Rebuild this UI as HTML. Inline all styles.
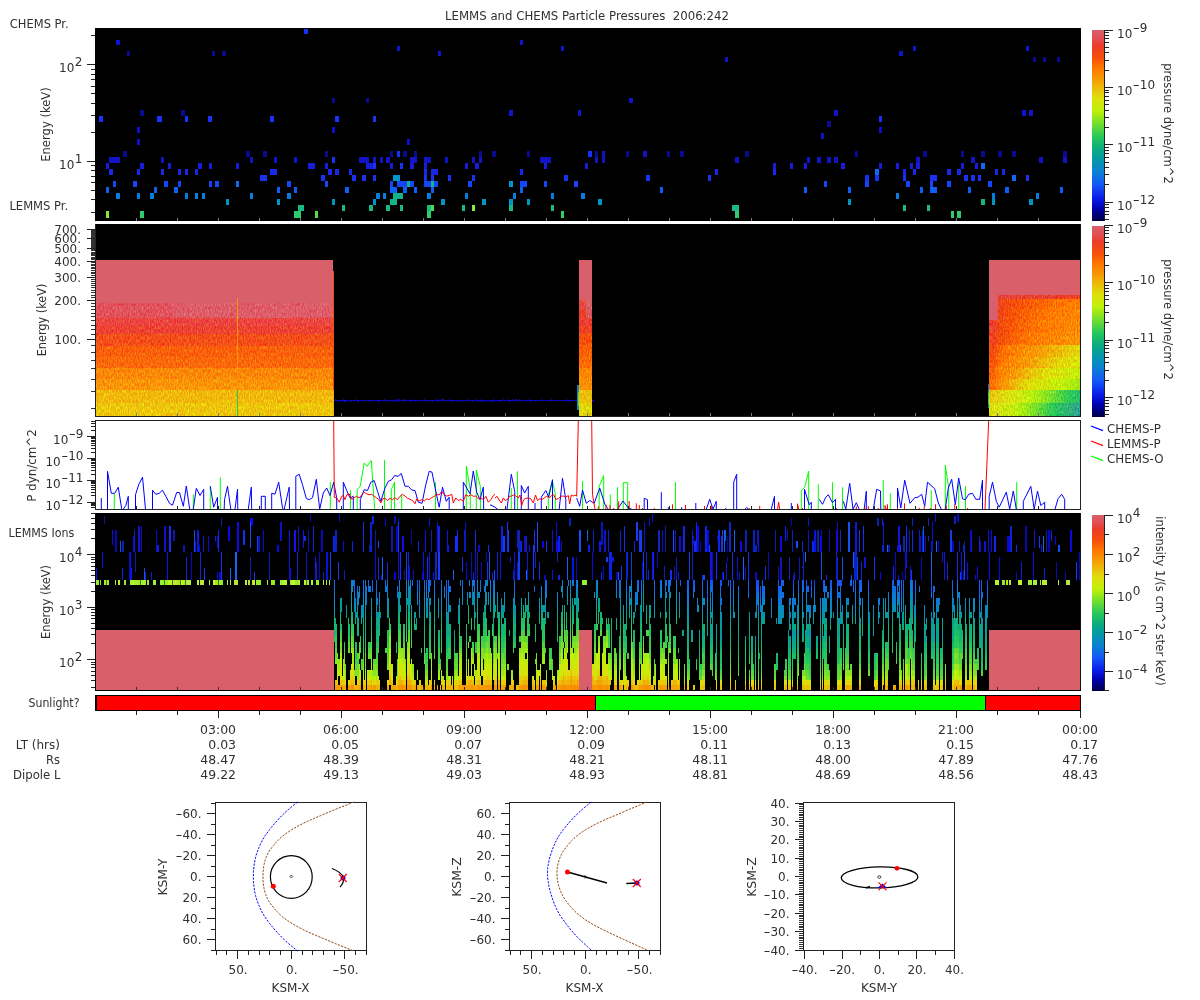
<!DOCTYPE html>
<html><head><meta charset="utf-8"><title>LEMMS and CHEMS Particle Pressures 2006:242</title>
<style>
html,body{margin:0;padding:0;background:#fff;}
svg{display:block;will-change:transform;font-family:"DejaVu Sans","Liberation Sans",sans-serif;fill:#303030;}
svg rect{shape-rendering:crispEdges;}
</style></head><body>
<svg width="1200" height="1000" viewBox="0 0 1200 1000">
<defs><linearGradient id="cb" x1="0" y1="1" x2="0" y2="0">
<stop offset="0" stop-color="#000046"/>
<stop offset="0.0625" stop-color="#0000aa"/>
<stop offset="0.12" stop-color="#0a1eeb"/>
<stop offset="0.193" stop-color="#145af5"/>
<stop offset="0.26" stop-color="#0a82d2"/>
<stop offset="0.318" stop-color="#0596aa"/>
<stop offset="0.375" stop-color="#0aaa82"/>
<stop offset="0.443" stop-color="#28c85a"/>
<stop offset="0.516" stop-color="#78e128"/>
<stop offset="0.578" stop-color="#bef00a"/>
<stop offset="0.64" stop-color="#dce10a"/>
<stop offset="0.677" stop-color="#e8c80a"/>
<stop offset="0.75" stop-color="#f89605"/>
<stop offset="0.8" stop-color="#ff7800"/>
<stop offset="0.854" stop-color="#f55008"/>
<stop offset="0.917" stop-color="#ec3c28"/>
<stop offset="0.958" stop-color="#e05055"/>
<stop offset="1" stop-color="#d95f6a"/>
</linearGradient></defs>
<text x="587" y="20" text-anchor="middle" font-size="12" textLength="283.9" lengthAdjust="spacingAndGlyphs">LEMMS and CHEMS Particle Pressures&#160;&#160;2006:242</text>
<rect x="95" y="28" width="986" height="193" fill="#000"/>
<rect x="91" y="212" width="4" height="1" fill="#222"/>
<rect x="91" y="199" width="4" height="1" fill="#222"/>
<rect x="91" y="190" width="4" height="1" fill="#222"/>
<rect x="91" y="182" width="4" height="1" fill="#222"/>
<rect x="91" y="176" width="4" height="1" fill="#222"/>
<rect x="91" y="170" width="4" height="1" fill="#222"/>
<rect x="91" y="165" width="4" height="1" fill="#222"/>
<rect x="87" y="161" width="8" height="1" fill="#222"/>
<text x="74.3652" y="169" text-anchor="end" font-size="12">10</text>
<text x="74.8652" y="163" text-anchor="start" font-size="12">1</text>
<rect x="91" y="132" width="4" height="1" fill="#222"/>
<rect x="91" y="115" width="4" height="1" fill="#222"/>
<rect x="91" y="103" width="4" height="1" fill="#222"/>
<rect x="91" y="93" width="4" height="1" fill="#222"/>
<rect x="91" y="86" width="4" height="1" fill="#222"/>
<rect x="91" y="79" width="4" height="1" fill="#222"/>
<rect x="91" y="74" width="4" height="1" fill="#222"/>
<rect x="91" y="69" width="4" height="1" fill="#222"/>
<rect x="87" y="64" width="8" height="1" fill="#222"/>
<text x="74.3652" y="72" text-anchor="end" font-size="12">10</text>
<text x="74.8652" y="66" text-anchor="start" font-size="12">2</text>
<rect x="91" y="35" width="4" height="1" fill="#222"/>
<text x="9.8" y="28" text-anchor="start" font-size="12" textLength="58.9" lengthAdjust="spacingAndGlyphs">CHEMS Pr.</text>
<text x="9.4" y="210" text-anchor="start" font-size="12" textLength="58.8" lengthAdjust="spacingAndGlyphs">LEMMS Pr.</text>
<text transform="translate(49.8,124.5) rotate(-90)" text-anchor="middle" font-size="12" textLength="74.6" lengthAdjust="spacingAndGlyphs">Energy (keV)</text>
<path fill="#0f0fc8" shape-rendering="crispEdges" d="M137 127h3v6h-3zM137 139h3v6h-3zM407 139h3v6h-3zM332 127h3v6h-3zM821 133h3v6h-3zM879 127h3v6h-3z"/>
<path fill="#0a0a91" shape-rendering="crispEdges" d="M123 151h4v6h-4zM246 151h4v6h-4zM263 151h4v6h-4zM325 151h3v6h-3zM390 151h3v6h-3zM403 151h4v6h-4zM414 151h3v6h-3zM479 151h3v6h-3zM492 151h4v6h-4zM527 151h3v6h-3zM595 151h3v6h-3zM626 151h3v6h-3zM667 151h3v6h-3zM680 151h4v6h-4zM745 151h4v6h-4zM827 121h4v6h-4zM855 151h3v6h-3zM923 151h4v6h-4zM961 151h3v6h-3zM981 151h4v6h-4zM998 151h4v6h-4zM1012 151h4v6h-4zM1063 151h4v6h-4zM127 51h3v5h-3zM212 51h3v5h-3zM222 51h4v5h-4zM332 98h3v5h-3zM366 98h3v5h-3zM140 110h4v5.5h-4zM181 110h4v5.5h-4zM1033 57h3v5h-3zM1043 57h3v5h-3zM1057 57h3v5h-3z"/>
<path fill="#1214c3" shape-rendering="crispEdges" d="M109 157h11v6h-11zM161 157h3v6h-3zM250 157h3v6h-3zM274 157h3v6h-3zM294 157h3v6h-3zM359 157h10v6h-10zM373 157h3v6h-3zM380 157h3v6h-3zM386 157h4v6h-4zM410 157h7v6h-7zM424 157h7v6h-7zM445 157h3v6h-3zM472 157h3v6h-3zM479 157h3v6h-3zM540 157h11v6h-11zM595 157h3v6h-3zM602 157h3v6h-3zM735 157h4v6h-4zM807 157h3v6h-3zM817 157h4v6h-4zM827 157h4v6h-4zM834 157h4v6h-4zM916 157h4v6h-4zM971 157h4v6h-4zM1039 157h4v6h-4zM1063 157h4v6h-4z"/>
<path fill="#161cd7" shape-rendering="crispEdges" d="M106 163h3v6h-3zM140 163h4v6h-4zM168 163h3v6h-3zM198 163h4v6h-4zM209 163h3v6h-3zM236 163h3v6h-3zM308 163h7v6h-7zM325 163h3v6h-3zM366 163h7v6h-7zM390 163h3v6h-3zM410 163h4v6h-4zM424 163h3v6h-3zM465 163h3v6h-3zM475 163h4v6h-4zM544 163h3v6h-3zM585 163h3v6h-3zM773 163h3v6h-3zM790 163h3v6h-3zM804 163h3v6h-3zM841 163h4v6h-4zM879 163h3v6h-3zM896 163h3v6h-3zM910 163h3v6h-3zM916 163h4v6h-4zM961 163h3v6h-3zM975 163h3v6h-3z"/>
<path fill="#1928e8" shape-rendering="crispEdges" d="M109 169h4v6h-4zM137 169h3v6h-3zM161 169h3v6h-3zM178 169h3v6h-3zM185 169h3v6h-3zM195 169h3v6h-3zM270 169h7v6h-7zM328 169h4v6h-4zM335 169h4v6h-4zM349 169h3v6h-3zM424 169h3v6h-3zM431 169h7v6h-7zM520 169h3v6h-3zM715 169h3v6h-3zM773 169h3v6h-3zM903 169h3v6h-3zM913 169h3v6h-3zM947 169h4v6h-4zM957 169h4v6h-4zM995 169h3v6h-3zM1002 169h3v6h-3z"/>
<path fill="#1446f8" shape-rendering="crispEdges" d="M113 181h3v6h-3zM133 181h4v6h-4zM164 181h4v6h-4zM178 181h3v6h-3zM209 181h3v6h-3zM215 181h4v6h-4zM287 181h4v6h-4zM325 181h3v6h-3zM390 181h3v6h-3zM397 181h10v6h-10zM410 181h4v6h-4zM424 181h7v6h-7zM434 181h4v6h-4zM468 181h4v6h-4zM520 181h7v6h-7zM544 181h3v6h-3zM574 181h4v6h-4zM824 181h3v6h-3zM865 181h4v6h-4zM906 181h4v6h-4zM930 181h3v6h-3zM947 181h4v6h-4zM988 181h4v6h-4z"/>
<path fill="#0f69f5" shape-rendering="crispEdges" d="M236 181h3v6h-3zM875 169h4v6h-4zM981 163h4v6h-4zM1012 175h4v6h-4z"/>
<path fill="#0f5ff5" shape-rendering="crispEdges" d="M106 187h3v6h-3zM154 187h3v6h-3zM174 187h4v6h-4zM277 187h3v6h-3zM294 187h3v6h-3zM345 187h4v6h-4zM390 187h7v6h-7zM403 187h4v6h-4zM414 187h3v6h-3zM431 187h3v6h-3zM520 187h3v6h-3zM660 187h3v6h-3zM804 187h3v6h-3zM848 187h3v6h-3zM920 187h3v6h-3zM930 187h7v6h-7zM968 187h3v6h-3zM1005 187h4v6h-4zM1060 187h3v6h-3z"/>
<path fill="#057de1" shape-rendering="crispEdges" d="M116 193h4v6h-4zM137 193h3v6h-3zM150 193h4v6h-4zM185 193h3v6h-3zM195 193h3v6h-3zM202 193h3v6h-3zM250 193h3v6h-3zM287 193h4v6h-4zM376 193h4v6h-4zM383 193h3v6h-3zM427 193h4v6h-4zM465 193h3v6h-3zM513 193h3v6h-3zM551 193h3v6h-3zM581 193h4v6h-4zM896 193h3v6h-3zM992 193h3v6h-3zM1036 193h3v6h-3z"/>
<path fill="#0096c3" shape-rendering="crispEdges" d="M226 199h3v6h-3zM277 199h3v6h-3zM332 199h3v6h-3zM373 199h3v6h-3zM441 199h4v6h-4zM482 199h4v6h-4zM509 199h4v6h-4zM527 199h3v6h-3zM598 199h4v6h-4zM848 199h3v6h-3zM992 199h3v6h-3zM1029 199h4v6h-4z"/>
<path fill="#82eb32" shape-rendering="crispEdges" d="M106 211h3v7h-3zM472 205h3v6h-3z"/>
<path fill="#2dcd6e" shape-rendering="crispEdges" d="M140 211h4v7h-4zM294 211h7v7h-7zM427 211h4v7h-4zM561 211h3v7h-3zM735 211h4v7h-4zM951 211h3v7h-3zM957 211h4v7h-4z"/>
<path fill="#50de4b" shape-rendering="crispEdges" d="M315 211h3v7h-3zM431 205h3v6h-3z"/>
<path fill="#19b987" shape-rendering="crispEdges" d="M298 205h6v6h-6zM342 205h3v6h-3zM369 205h4v6h-4zM386 205h4v6h-4zM400 205h3v6h-3zM427 205h4v6h-4zM462 205h3v6h-3zM509 205h4v6h-4zM551 205h3v6h-3zM732 205h7v6h-7zM903 205h3v6h-3zM927 205h3v6h-3z"/>
<path fill="#14b487" shape-rendering="crispEdges" d="M390 199h7v6h-7zM393 193h10v6h-10zM407 181h3v6h-3zM431 181h3v6h-3zM981 199h4v6h-4z"/>
<path fill="#1932f0" shape-rendering="crispEdges" d="M260 175h7v6h-7zM321 175h4v6h-4zM352 175h4v6h-4zM362 175h4v6h-4zM373 175h3v6h-3zM424 175h3v6h-3zM431 175h3v6h-3zM448 175h3v6h-3zM472 175h3v6h-3zM564 175h4v6h-4zM646 175h4v6h-4zM708 175h3v6h-3zM865 175h4v6h-4zM875 175h4v6h-4zM903 175h3v6h-3zM930 175h7v6h-7zM964 175h4v6h-4zM971 175h4v6h-4zM978 175h3v6h-3zM1026 175h3v6h-3z"/>
<path fill="#0096cd" shape-rendering="crispEdges" d="M393 175h7v6h-7zM509 181h4v6h-4z"/>
<path fill="#1932f5" shape-rendering="crispEdges" d="M373 163h3v6h-3zM400 163h3v6h-3zM332 157h3v6h-3zM397 151h3v6h-3zM588 151h4v6h-4zM304 29h4v4.5h-4zM99 116h4v5.5h-4zM157 116h5v5.5h-5zM185 116h3v5.5h-3zM208 116h4v5.5h-4zM270 116h4v5.5h-4zM335 116h4v5.5h-4zM373 116h3v5.5h-3zM879 116h3v5.5h-3z"/>
<path fill="#1212be" shape-rendering="crispEdges" d="M602 151h3v6h-3zM643 151h2v6h-2zM645 151h2v6h-2z"/>
<path fill="#0f14cd" shape-rendering="crispEdges" d="M116 40h4v5h-4zM397 46h3v4.5h-3zM438 51h3v5h-3zM520 40h3v5h-3zM561 46h3v4.5h-3zM725 57h3v5h-3zM629 98h4v5h-4zM509 110h4v5.5h-4zM578 110h3v5.5h-3zM899 51h4v5h-4zM913 46h3v4.5h-3zM1026 46h3v4.5h-3zM834 110h4v5.5h-4zM1022 110h4v5.5h-4zM1029 110h4v5.5h-4z"/>
<rect x="136" y="218" width="1" height="3" fill="#7a7a7a"/>
<rect x="177" y="218" width="1" height="3" fill="#7a7a7a"/>
<rect x="218" y="218" width="1" height="3" fill="#7a7a7a"/>
<rect x="259" y="218" width="1" height="3" fill="#7a7a7a"/>
<rect x="300" y="218" width="1" height="3" fill="#7a7a7a"/>
<rect x="341" y="218" width="1" height="3" fill="#7a7a7a"/>
<rect x="382" y="218" width="1" height="3" fill="#7a7a7a"/>
<rect x="423" y="218" width="1" height="3" fill="#7a7a7a"/>
<rect x="464" y="218" width="1" height="3" fill="#7a7a7a"/>
<rect x="505" y="218" width="1" height="3" fill="#7a7a7a"/>
<rect x="546" y="218" width="1" height="3" fill="#7a7a7a"/>
<rect x="587" y="218" width="1" height="3" fill="#7a7a7a"/>
<rect x="628" y="218" width="1" height="3" fill="#7a7a7a"/>
<rect x="669" y="218" width="1" height="3" fill="#7a7a7a"/>
<rect x="710" y="218" width="1" height="3" fill="#7a7a7a"/>
<rect x="751" y="218" width="1" height="3" fill="#7a7a7a"/>
<rect x="792" y="218" width="1" height="3" fill="#7a7a7a"/>
<rect x="833" y="218" width="1" height="3" fill="#7a7a7a"/>
<rect x="874" y="218" width="1" height="3" fill="#7a7a7a"/>
<rect x="915" y="218" width="1" height="3" fill="#7a7a7a"/>
<rect x="956" y="218" width="1" height="3" fill="#7a7a7a"/>
<rect x="997" y="218" width="1" height="3" fill="#7a7a7a"/>
<rect x="1038" y="218" width="1" height="3" fill="#7a7a7a"/>
<rect x="1092" y="30" width="12" height="191" fill="url(#cb)"/>
<rect x="1104" y="30" width="1" height="191" fill="#222"/>
<rect x="1104" y="30" width="9" height="1" fill="#222"/>
<text x="1117" y="38" text-anchor="start" font-size="12">10</text>
<text x="1132.77" y="32" text-anchor="start" font-size="12"><tspan textLength="7" lengthAdjust="spacingAndGlyphs">-</tspan>9</text>
<rect x="1104" y="87" width="9" height="1" fill="#222"/>
<text x="1117" y="95" text-anchor="start" font-size="12">10</text>
<text x="1132.77" y="89" text-anchor="start" font-size="12"><tspan textLength="7" lengthAdjust="spacingAndGlyphs">-</tspan>10</text>
<rect x="1104" y="144" width="9" height="1" fill="#222"/>
<text x="1117" y="152" text-anchor="start" font-size="12">10</text>
<text x="1132.77" y="146" text-anchor="start" font-size="12"><tspan textLength="7" lengthAdjust="spacingAndGlyphs">-</tspan>11</text>
<rect x="1104" y="202" width="9" height="1" fill="#222"/>
<text x="1117" y="210" text-anchor="start" font-size="12">10</text>
<text x="1132.77" y="204" text-anchor="start" font-size="12"><tspan textLength="7" lengthAdjust="spacingAndGlyphs">-</tspan>12</text>
<rect x="1104" y="70" width="5" height="1" fill="#222"/>
<rect x="1104" y="60" width="5" height="1" fill="#222"/>
<rect x="1104" y="52" width="5" height="1" fill="#222"/>
<rect x="1104" y="47" width="5" height="1" fill="#222"/>
<rect x="1104" y="42" width="5" height="1" fill="#222"/>
<rect x="1104" y="38" width="5" height="1" fill="#222"/>
<rect x="1104" y="35" width="5" height="1" fill="#222"/>
<rect x="1104" y="32" width="5" height="1" fill="#222"/>
<rect x="1104" y="127" width="5" height="1" fill="#222"/>
<rect x="1104" y="117" width="5" height="1" fill="#222"/>
<rect x="1104" y="110" width="5" height="1" fill="#222"/>
<rect x="1104" y="104" width="5" height="1" fill="#222"/>
<rect x="1104" y="100" width="5" height="1" fill="#222"/>
<rect x="1104" y="96" width="5" height="1" fill="#222"/>
<rect x="1104" y="92" width="5" height="1" fill="#222"/>
<rect x="1104" y="90" width="5" height="1" fill="#222"/>
<rect x="1104" y="184" width="5" height="1" fill="#222"/>
<rect x="1104" y="174" width="5" height="1" fill="#222"/>
<rect x="1104" y="167" width="5" height="1" fill="#222"/>
<rect x="1104" y="162" width="5" height="1" fill="#222"/>
<rect x="1104" y="157" width="5" height="1" fill="#222"/>
<rect x="1104" y="153" width="5" height="1" fill="#222"/>
<rect x="1104" y="150" width="5" height="1" fill="#222"/>
<rect x="1104" y="147" width="5" height="1" fill="#222"/>
<rect x="1104" y="219" width="5" height="1" fill="#222"/>
<rect x="1104" y="214" width="5" height="1" fill="#222"/>
<rect x="1104" y="211" width="5" height="1" fill="#222"/>
<rect x="1104" y="207" width="5" height="1" fill="#222"/>
<rect x="1104" y="204" width="5" height="1" fill="#222"/>
<text transform="translate(1163.5,123.5) rotate(90)" text-anchor="middle" font-size="12" textLength="120.5" lengthAdjust="spacingAndGlyphs">pressure dyne/cm^2</text>
<rect x="95" y="224" width="986" height="193" fill="#000"/>
<rect x="96" y="260" width="237" height="156" fill="#d95f6a"/>
<filter id="nzP" filterUnits="userSpaceOnUse" x="96" y="303" width="237" height="15" color-interpolation-filters="sRGB"><feTurbulence type="fractalNoise" baseFrequency="0.85 0.3" numOctaves="2" seed="9"/><feColorMatrix type="matrix" values="0 0 0 0 -0  0 0.44 0 0 -0.11  0 0.44 0 0 -0.11  0 0 0 0 1" result="n"/><feComposite in="SourceGraphic" in2="n" operator="arithmetic" k1="0" k2="1" k3="1" k4="0" result="s"/><feComposite in="s" in2="SourceGraphic" operator="in"/></filter>
<g filter="url(#nzP)">
<rect x="96" y="303" width="76" height="15" fill="#e23640"/>
<rect x="172" y="303" width="161" height="15" fill="#de404b"/>
</g>
<filter id="nzL" filterUnits="userSpaceOnUse" x="96" y="318" width="237" height="98" color-interpolation-filters="sRGB"><feTurbulence type="fractalNoise" baseFrequency="0.85 0.3" numOctaves="2" seed="4"/><feColorMatrix type="matrix" values="0 0 0 0 -0  0 0.54 0 0 -0.135  0 0 0 0 -0  0 0 0 0 1" result="n"/><feComposite in="SourceGraphic" in2="n" operator="arithmetic" k1="0" k2="1" k3="1" k4="0" result="s"/><feComposite in="s" in2="SourceGraphic" operator="in"/></filter>
<g filter="url(#nzL)">
<rect x="96" y="318" width="237" height="8" fill="#ec2240"/>
<rect x="96" y="326" width="237" height="8" fill="#ed2032"/>
<rect x="96" y="334" width="237" height="12" fill="#f32c19"/>
<rect x="96" y="346" width="237" height="11" fill="#f93e0c"/>
<rect x="96" y="357" width="237" height="11" fill="#fa460a"/>
<rect x="96" y="368" width="237" height="11" fill="#fa6508"/>
<rect x="96" y="379" width="237" height="11" fill="#fa7208"/>
<rect x="96" y="390" width="237" height="13" fill="#f1960c"/>
<rect x="96" y="403" width="237" height="13" fill="#eda40c"/>
</g>
<rect x="237" y="298" width="1" height="92" fill="#f89405"/>
<rect x="237" y="390" width="1" height="26" fill="#28c85a"/>
<rect x="333" y="271" width="1" height="145" fill="#f24a12"/>
<rect x="333" y="390" width="1" height="26" fill="#f0af08"/>
<path fill="#0a0ae1" shape-rendering="crispEdges" d="M334 400h1v1h-1zM336 400h1v1h-1zM337 400h1v1h-1zM338 400h1v1h-1zM341 400h1v1h-1zM346 400h1v1h-1zM350 400h1v1h-1zM353 400h1v1h-1zM354 400h1v1h-1zM355 400h1v1h-1zM365 400h1v1h-1zM372 400h1v1h-1zM375 400h1v1h-1zM376 400h1v1h-1zM377 400h1v1h-1zM381 400h1v1h-1zM388 400h1v1h-1zM391 400h1v1h-1zM401 400h1v1h-1zM408 400h1v1h-1zM411 400h1v1h-1zM412 400h1v1h-1zM414 400h1v1h-1zM430 400h1v1h-1zM434 400h1v1h-1zM439 400h1v1h-1zM444 400h1v1h-1zM445 400h1v1h-1zM447 400h1v1h-1zM450 400h1v1h-1zM452 400h1v1h-1zM453 400h1v1h-1zM454 400h1v1h-1zM456 400h1v1h-1zM457 400h1v1h-1zM465 400h1v1h-1zM466 400h1v1h-1zM476 400h1v1h-1zM495 400h1v1h-1zM502 400h1v1h-1zM504 400h1v1h-1zM506 400h1v1h-1zM508 400h1v1h-1zM511 400h1v1h-1zM518 400h1v1h-1zM521 400h1v1h-1zM528 400h1v1h-1zM532 400h1v1h-1zM534 400h1v1h-1zM535 400h1v1h-1zM537 400h1v1h-1zM538 400h1v1h-1zM539 400h1v1h-1zM543 400h1v1h-1zM548 400h1v1h-1zM557 400h1v1h-1zM561 400h1v1h-1zM562 400h1v1h-1zM563 400h1v1h-1zM569 400h1v1h-1zM570 400h1v1h-1zM571 400h1v1h-1zM572 400h1v1h-1zM574 400h1v1h-1zM576 400h1v1h-1zM586 400h1v1h-1zM589 400h1v1h-1zM591 400h1v1h-1zM593 400h1v1h-1z"/>
<path fill="#0a0abe" shape-rendering="crispEdges" d="M335 399h1v2h-1zM343 399h1v2h-1zM357 400h1v2h-1zM368 400h1v2h-1zM378 400h1v2h-1zM395 399h1v2h-1zM398 400h1v2h-1zM403 400h1v2h-1zM424 399h1v2h-1zM432 400h1v2h-1zM438 400h1v2h-1zM441 399h1v2h-1zM451 400h1v2h-1zM458 400h1v2h-1zM463 400h1v2h-1zM468 399h1v2h-1zM472 400h1v2h-1zM475 399h1v2h-1zM480 400h1v2h-1zM482 400h1v2h-1zM492 400h1v2h-1zM510 400h1v2h-1zM516 399h1v2h-1zM519 399h1v2h-1zM551 399h1v2h-1zM568 400h1v2h-1zM577 400h1v2h-1zM578 399h1v2h-1zM583 400h1v2h-1zM585 400h1v2h-1zM590 400h1v2h-1zM592 400h1v2h-1z"/>
<path fill="#0a0a96" shape-rendering="crispEdges" d="M339 400h1v2h-1zM356 399h1v2h-1zM363 400h1v2h-1zM371 400h1v2h-1zM379 400h1v2h-1zM385 400h1v2h-1zM392 400h1v2h-1zM394 400h1v2h-1zM396 400h1v2h-1zM397 399h1v2h-1zM402 399h1v2h-1zM413 399h1v2h-1zM418 400h1v2h-1zM429 400h1v2h-1zM437 400h1v2h-1zM442 399h1v2h-1zM461 400h1v2h-1zM473 400h1v2h-1zM481 399h1v2h-1zM503 399h1v2h-1zM507 399h1v2h-1zM512 399h1v2h-1zM514 399h1v2h-1zM527 400h1v2h-1zM550 400h1v2h-1zM565 400h1v2h-1zM581 399h1v2h-1zM582 399h1v2h-1zM588 400h1v2h-1z"/>
<path fill="#0a0aaa" shape-rendering="crispEdges" d="M340 400h1v1h-1zM347 400h1v1h-1zM348 400h1v1h-1zM359 400h1v1h-1zM360 400h1v1h-1zM362 400h1v1h-1zM364 400h1v1h-1zM366 400h1v1h-1zM367 400h1v1h-1zM373 400h1v1h-1zM380 400h1v1h-1zM382 400h1v1h-1zM386 400h1v1h-1zM390 400h1v1h-1zM400 400h1v1h-1zM405 400h1v1h-1zM406 400h1v1h-1zM417 400h1v1h-1zM420 400h1v1h-1zM422 400h1v1h-1zM423 400h1v1h-1zM426 400h1v1h-1zM427 400h1v1h-1zM431 400h1v1h-1zM433 400h1v1h-1zM435 400h1v1h-1zM440 400h1v1h-1zM446 400h1v1h-1zM455 400h1v1h-1zM459 400h1v1h-1zM460 400h1v1h-1zM464 400h1v1h-1zM467 400h1v1h-1zM470 400h1v1h-1zM471 400h1v1h-1zM479 400h1v1h-1zM485 400h1v1h-1zM486 400h1v1h-1zM488 400h1v1h-1zM490 400h1v1h-1zM497 400h1v1h-1zM501 400h1v1h-1zM520 400h1v1h-1zM523 400h1v1h-1zM524 400h1v1h-1zM525 400h1v1h-1zM533 400h1v1h-1zM536 400h1v1h-1zM540 400h1v1h-1zM544 400h1v1h-1zM545 400h1v1h-1zM546 400h1v1h-1zM549 400h1v1h-1zM556 400h1v1h-1zM559 400h1v1h-1zM560 400h1v1h-1zM567 400h1v1h-1zM573 400h1v1h-1zM575 400h1v1h-1zM579 400h1v1h-1zM580 400h1v1h-1z"/>
<path fill="#0a0ad7" shape-rendering="crispEdges" d="M342 400h1v2h-1zM344 400h1v2h-1zM345 400h1v2h-1zM351 400h1v2h-1zM358 400h1v2h-1zM384 399h1v2h-1zM399 399h1v2h-1zM404 399h1v2h-1zM410 400h1v2h-1zM415 400h1v2h-1zM425 400h1v2h-1zM436 399h1v2h-1zM443 399h1v2h-1zM449 399h1v2h-1zM478 400h1v2h-1zM484 400h1v2h-1zM489 400h1v2h-1zM491 400h1v2h-1zM493 399h1v2h-1zM499 400h1v2h-1zM500 400h1v2h-1zM509 400h1v2h-1zM513 400h1v2h-1zM529 399h1v2h-1zM530 400h1v2h-1zM541 399h1v2h-1zM566 399h1v2h-1z"/>
<path fill="#0a0ac8" shape-rendering="crispEdges" d="M349 400h1v1h-1zM352 400h1v1h-1zM361 400h1v1h-1zM369 400h1v1h-1zM370 400h1v1h-1zM374 400h1v1h-1zM383 400h1v1h-1zM387 400h1v1h-1zM389 400h1v1h-1zM393 400h1v1h-1zM407 400h1v1h-1zM409 400h1v1h-1zM416 400h1v1h-1zM419 400h1v1h-1zM421 400h1v1h-1zM428 400h1v1h-1zM448 400h1v1h-1zM462 400h1v1h-1zM469 400h1v1h-1zM474 400h1v1h-1zM477 400h1v1h-1zM483 400h1v1h-1zM487 400h1v1h-1zM494 400h1v1h-1zM496 400h1v1h-1zM498 400h1v1h-1zM505 400h1v1h-1zM515 400h1v1h-1zM517 400h1v1h-1zM522 400h1v1h-1zM526 400h1v1h-1zM531 400h1v1h-1zM542 400h1v1h-1zM547 400h1v1h-1zM552 400h1v1h-1zM553 400h1v1h-1zM554 400h1v1h-1zM555 400h1v1h-1zM558 400h1v1h-1zM564 400h1v1h-1zM584 400h1v1h-1zM587 400h1v1h-1z"/>
<rect x="579" y="260" width="13" height="156" fill="#d95f6a"/>
<filter id="nzM" filterUnits="userSpaceOnUse" x="579" y="300" width="13" height="116" color-interpolation-filters="sRGB"><feTurbulence type="fractalNoise" baseFrequency="0.85 0.3" numOctaves="2" seed="12"/><feColorMatrix type="matrix" values="0 0 0 0 -0  0 0.54 0 0 -0.135  0 0 0 0 -0  0 0 0 0 1" result="n"/><feComposite in="SourceGraphic" in2="n" operator="arithmetic" k1="0" k2="1" k3="1" k4="0" result="s"/><feComposite in="s" in2="SourceGraphic" operator="in"/></filter>
<g filter="url(#nzM)">
<rect x="579" y="300" width="7" height="9" fill="#e52644"/>
<rect x="586" y="300" width="6" height="9" fill="#d93d6a"/>
<rect x="579" y="309" width="7" height="9" fill="#ec1b2a"/>
<rect x="586" y="309" width="6" height="9" fill="#dc3660"/>
<rect x="579" y="318" width="13" height="8" fill="#ea1e31"/>
<rect x="579" y="326" width="13" height="8" fill="#ef201f"/>
<rect x="579" y="334" width="13" height="11" fill="#f42c0b"/>
<rect x="579" y="345" width="13" height="12" fill="#f93c05"/>
<rect x="579" y="357" width="13" height="11" fill="#fb4703"/>
<rect x="579" y="368" width="13" height="11" fill="#fc6402"/>
<rect x="579" y="379" width="13" height="11" fill="#fa6e04"/>
<rect x="579" y="390" width="13" height="13" fill="#eb9e09"/>
<rect x="579" y="403" width="13" height="13" fill="#e1b50a"/>
</g>
<rect x="577" y="385" width="2" height="25" fill="#088ac2"/>
<rect x="578" y="392" width="1" height="14" fill="#60d937"/>
<rect x="989" y="260" width="91" height="156" fill="#d95f6a"/>
<filter id="nzR" filterUnits="userSpaceOnUse" x="989" y="295" width="91" height="95" color-interpolation-filters="sRGB"><feTurbulence type="fractalNoise" baseFrequency="0.85 0.3" numOctaves="2" seed="7"/><feColorMatrix type="matrix" values="0 0 0 0 -0  0 0.54 0 0 -0.135  0 0 0 0 -0  0 0 0 0 1" result="n"/><feComposite in="SourceGraphic" in2="n" operator="arithmetic" k1="0" k2="1" k3="1" k4="0" result="s"/><feComposite in="s" in2="SourceGraphic" operator="in"/></filter>
<filter id="nzR2" filterUnits="userSpaceOnUse" x="989" y="390" width="91" height="26" color-interpolation-filters="sRGB"><feTurbulence type="fractalNoise" baseFrequency="0.85 0.35" numOctaves="2" seed="8"/><feColorMatrix type="matrix" values="0 0.68 0 0 -0.17  0 0.2 0 0 -0.05  0 0.24 0 0 -0.06  0 0 0 0 1" result="n"/><feComposite in="SourceGraphic" in2="n" operator="arithmetic" k1="0" k2="1" k3="1" k4="0" result="s"/><feComposite in="s" in2="SourceGraphic" operator="in"/></filter>
<g filter="url(#nzR)">
<path fill="#d95f6a" shape-rendering="crispEdges" d="M989 295h1v4h-1zM990 295h1v4h-1zM991 295h1v4h-1zM992 295h1v4h-1zM993 295h1v4h-1zM994 295h1v4h-1zM995 295h1v4h-1zM996 295h1v4h-1zM997 295h1v4h-1zM989 299h1v10h-1zM990 299h1v10h-1zM991 299h1v10h-1zM992 299h1v10h-1zM993 299h1v10h-1zM994 299h1v10h-1zM995 299h1v10h-1zM996 299h1v10h-1zM997 299h1v10h-1zM989 309h1v11h-1zM990 309h1v11h-1zM991 309h1v11h-1zM992 309h1v11h-1zM993 309h1v11h-1zM994 309h1v11h-1zM995 309h1v11h-1zM996 309h1v11h-1zM997 309h1v11h-1z"/>
<path fill="#e6233d" shape-rendering="crispEdges" d="M998 295h1v4h-1zM999 295h1v4h-1zM1000 295h1v4h-1zM1001 295h1v4h-1zM1002 295h1v4h-1zM1003 295h1v4h-1zM1004 295h1v4h-1zM1005 295h1v4h-1zM1006 295h1v4h-1zM1007 295h1v4h-1zM1008 295h1v4h-1zM1009 295h1v4h-1zM1010 295h1v4h-1zM1011 295h1v4h-1zM1012 295h1v4h-1zM1013 295h1v4h-1zM1014 295h1v4h-1zM1015 295h1v4h-1zM1016 295h1v4h-1zM1017 295h1v4h-1zM1018 295h1v4h-1z"/>
<path fill="#ea1e31" shape-rendering="crispEdges" d="M1019 295h1v4h-1zM1020 295h1v4h-1zM1021 295h1v4h-1zM1022 295h1v4h-1zM1023 295h1v4h-1zM1024 295h1v4h-1zM1025 295h1v4h-1zM1026 295h1v4h-1zM1027 295h1v4h-1zM1028 295h1v4h-1zM1029 295h1v4h-1zM1030 295h1v4h-1zM1031 295h1v4h-1zM1032 295h1v4h-1zM1033 295h1v4h-1zM1034 295h1v4h-1zM1035 295h1v4h-1zM1036 295h1v4h-1zM1037 295h1v4h-1zM1038 295h1v4h-1zM1039 295h1v4h-1zM1040 295h1v4h-1zM1041 295h1v4h-1zM1042 295h1v4h-1zM1043 295h1v4h-1zM1044 295h1v4h-1zM1045 295h1v4h-1zM1046 295h1v4h-1zM1047 295h1v4h-1zM1048 295h1v4h-1zM1049 295h1v4h-1zM1050 295h1v4h-1zM1051 295h1v4h-1zM1052 295h1v4h-1zM1053 295h1v4h-1zM1054 295h1v4h-1zM1055 295h1v4h-1zM989 320h1v12h-1zM990 320h1v12h-1zM991 320h1v12h-1zM992 320h1v12h-1zM993 320h1v12h-1zM994 320h1v12h-1z"/>
<path fill="#ed1c25" shape-rendering="crispEdges" d="M1056 295h1v4h-1zM1057 295h1v4h-1zM1058 295h1v4h-1zM1059 295h1v4h-1zM1060 295h1v4h-1zM1061 295h1v4h-1zM1062 295h1v4h-1zM1063 295h1v4h-1zM1064 295h1v4h-1zM1065 295h1v4h-1zM1066 295h1v4h-1zM1067 295h1v4h-1zM1068 295h1v4h-1zM1069 295h1v4h-1zM1070 295h1v4h-1zM1071 295h1v4h-1zM1072 295h1v4h-1zM1073 295h1v4h-1zM1074 295h1v4h-1zM1075 295h1v4h-1zM1076 295h1v4h-1zM1077 295h1v4h-1zM1078 295h1v4h-1zM1079 295h1v4h-1z"/>
<path fill="#ef201f" shape-rendering="crispEdges" d="M998 299h1v10h-1zM999 299h1v10h-1zM1000 299h1v10h-1zM995 320h1v12h-1zM996 320h1v12h-1zM989 332h1v13h-1zM990 332h1v13h-1zM991 332h1v13h-1zM992 332h1v13h-1zM993 332h1v13h-1zM994 332h1v13h-1z"/>
<path fill="#f02418" shape-rendering="crispEdges" d="M1001 299h1v10h-1zM1002 299h1v10h-1zM1003 299h1v10h-1zM1004 299h1v10h-1zM998 309h1v11h-1zM999 309h1v11h-1zM1000 309h1v11h-1zM997 320h1v12h-1zM998 320h1v12h-1zM995 332h1v13h-1zM996 332h1v13h-1z"/>
<path fill="#f22812" shape-rendering="crispEdges" d="M1005 299h1v10h-1zM1006 299h1v10h-1zM1007 299h1v10h-1zM1008 299h1v10h-1zM1009 299h1v10h-1zM1010 299h1v10h-1zM1001 309h1v11h-1zM1002 309h1v11h-1zM1003 309h1v11h-1zM1004 309h1v11h-1zM999 320h1v12h-1zM1000 320h1v12h-1zM1001 320h1v12h-1zM1002 320h1v12h-1zM997 332h1v13h-1zM998 332h1v13h-1zM989 345h1v12h-1zM990 345h1v12h-1zM991 345h1v12h-1zM992 345h1v12h-1zM993 345h1v12h-1zM994 345h1v12h-1z"/>
<path fill="#f42c0b" shape-rendering="crispEdges" d="M1011 299h1v10h-1zM1012 299h1v10h-1zM1013 299h1v10h-1zM1014 299h1v10h-1zM1015 299h1v10h-1zM1016 299h1v10h-1zM1005 309h1v11h-1zM1006 309h1v11h-1zM1007 309h1v11h-1zM1008 309h1v11h-1zM1009 309h1v11h-1zM1003 320h1v12h-1zM1004 320h1v12h-1zM1005 320h1v12h-1zM1006 320h1v12h-1zM999 332h1v13h-1zM1000 332h1v13h-1zM1001 332h1v13h-1z"/>
<path fill="#f63107" shape-rendering="crispEdges" d="M1017 299h1v10h-1zM1018 299h1v10h-1zM1019 299h1v10h-1zM1020 299h1v10h-1zM1021 299h1v10h-1zM1022 299h1v10h-1zM1023 299h1v10h-1zM1010 309h1v11h-1zM1011 309h1v11h-1zM1012 309h1v11h-1zM1013 309h1v11h-1zM1014 309h1v11h-1zM1015 309h1v11h-1zM1007 320h1v12h-1zM1008 320h1v12h-1zM1009 320h1v12h-1zM1010 320h1v12h-1zM1011 320h1v12h-1zM1002 332h1v13h-1zM1003 332h1v13h-1zM1004 332h1v13h-1zM1005 332h1v13h-1zM995 345h1v12h-1zM989 357h1v11h-1zM990 357h1v11h-1zM991 357h1v11h-1zM992 357h1v11h-1zM993 357h1v11h-1zM994 357h1v11h-1z"/>
<path fill="#f83806" shape-rendering="crispEdges" d="M1024 299h1v10h-1zM1025 299h1v10h-1zM1026 299h1v10h-1zM1027 299h1v10h-1zM1028 299h1v10h-1zM1029 299h1v10h-1zM1030 299h1v10h-1zM1031 299h1v10h-1zM1032 299h1v10h-1zM1016 309h1v11h-1zM1017 309h1v11h-1zM1018 309h1v11h-1zM1019 309h1v11h-1zM1020 309h1v11h-1zM1021 309h1v11h-1zM1012 320h1v12h-1zM1013 320h1v12h-1zM1014 320h1v12h-1zM1015 320h1v12h-1zM1016 320h1v12h-1zM1006 332h1v13h-1zM1007 332h1v13h-1zM1008 332h1v13h-1zM1009 332h1v13h-1zM1010 332h1v13h-1zM996 345h1v12h-1zM997 345h1v12h-1zM995 357h1v11h-1z"/>
<path fill="#f94004" shape-rendering="crispEdges" d="M1033 299h1v10h-1zM1034 299h1v10h-1zM1035 299h1v10h-1zM1036 299h1v10h-1zM1037 299h1v10h-1zM1038 299h1v10h-1zM1039 299h1v10h-1zM1040 299h1v10h-1zM1041 299h1v10h-1zM1022 309h1v11h-1zM1023 309h1v11h-1zM1024 309h1v11h-1zM1025 309h1v11h-1zM1026 309h1v11h-1zM1027 309h1v11h-1zM1028 309h1v11h-1zM1017 320h1v12h-1zM1018 320h1v12h-1zM1019 320h1v12h-1zM1020 320h1v12h-1zM1021 320h1v12h-1zM1022 320h1v12h-1zM1023 320h1v12h-1zM1011 332h1v13h-1zM1012 332h1v13h-1zM1013 332h1v13h-1zM1014 332h1v13h-1zM1015 332h1v13h-1zM998 345h1v12h-1zM999 345h1v12h-1zM996 357h1v11h-1zM989 368h1v11h-1zM990 368h1v11h-1zM991 368h1v11h-1zM992 368h1v11h-1zM993 368h1v11h-1zM994 368h1v11h-1z"/>
<path fill="#fb4703" shape-rendering="crispEdges" d="M1042 299h1v10h-1zM1043 299h1v10h-1zM1044 299h1v10h-1zM1045 299h1v10h-1zM1046 299h1v10h-1zM1047 299h1v10h-1zM1048 299h1v10h-1zM1049 299h1v10h-1zM1050 299h1v10h-1zM1051 299h1v10h-1zM1029 309h1v11h-1zM1030 309h1v11h-1zM1031 309h1v11h-1zM1032 309h1v11h-1zM1033 309h1v11h-1zM1034 309h1v11h-1zM1035 309h1v11h-1zM1036 309h1v11h-1zM1024 320h1v12h-1zM1025 320h1v12h-1zM1026 320h1v12h-1zM1027 320h1v12h-1zM1028 320h1v12h-1zM1029 320h1v12h-1zM1030 320h1v12h-1zM1016 332h1v13h-1zM1017 332h1v13h-1zM1018 332h1v13h-1zM1019 332h1v13h-1zM1020 332h1v13h-1zM1021 332h1v13h-1zM1000 345h1v12h-1zM1001 345h1v12h-1zM1002 345h1v12h-1zM997 357h1v11h-1zM998 357h1v11h-1z"/>
<path fill="#fd4f01" shape-rendering="crispEdges" d="M1052 299h1v10h-1zM1053 299h1v10h-1zM1054 299h1v10h-1zM1055 299h1v10h-1zM1056 299h1v10h-1zM1057 299h1v10h-1zM1058 299h1v10h-1zM1059 299h1v10h-1zM1060 299h1v10h-1zM1061 299h1v10h-1zM1062 299h1v10h-1zM1037 309h1v11h-1zM1038 309h1v11h-1zM1039 309h1v11h-1zM1040 309h1v11h-1zM1041 309h1v11h-1zM1042 309h1v11h-1zM1043 309h1v11h-1zM1044 309h1v11h-1zM1031 320h1v12h-1zM1032 320h1v12h-1zM1033 320h1v12h-1zM1034 320h1v12h-1zM1035 320h1v12h-1zM1036 320h1v12h-1zM1037 320h1v12h-1zM1022 332h1v13h-1zM1023 332h1v13h-1zM1024 332h1v13h-1zM1025 332h1v13h-1zM1026 332h1v13h-1zM1027 332h1v13h-1zM1003 345h1v12h-1zM1004 345h1v12h-1zM1005 345h1v12h-1zM999 357h1v11h-1zM1000 357h1v11h-1zM995 368h1v11h-1zM989 379h1v11h-1zM990 379h1v11h-1zM991 379h1v11h-1zM992 379h1v11h-1zM993 379h1v11h-1zM994 379h1v11h-1z"/>
<path fill="#ff5600" shape-rendering="crispEdges" d="M1063 299h1v10h-1zM1064 299h1v10h-1zM1065 299h1v10h-1zM1066 299h1v10h-1zM1067 299h1v10h-1zM1068 299h1v10h-1zM1069 299h1v10h-1zM1070 299h1v10h-1zM1071 299h1v10h-1zM1072 299h1v10h-1zM1073 299h1v10h-1zM1045 309h1v11h-1zM1046 309h1v11h-1zM1047 309h1v11h-1zM1048 309h1v11h-1zM1049 309h1v11h-1zM1050 309h1v11h-1zM1051 309h1v11h-1zM1052 309h1v11h-1zM1053 309h1v11h-1zM1054 309h1v11h-1zM1038 320h1v12h-1zM1039 320h1v12h-1zM1040 320h1v12h-1zM1041 320h1v12h-1zM1042 320h1v12h-1zM1043 320h1v12h-1zM1044 320h1v12h-1zM1045 320h1v12h-1zM1046 320h1v12h-1zM1028 332h1v13h-1zM1029 332h1v13h-1zM1030 332h1v13h-1zM1031 332h1v13h-1zM1032 332h1v13h-1zM1033 332h1v13h-1zM1034 332h1v13h-1zM1035 332h1v13h-1zM1006 345h1v12h-1zM1007 345h1v12h-1zM1008 345h1v12h-1zM1001 357h1v11h-1zM1002 357h1v11h-1zM996 368h1v11h-1zM997 368h1v11h-1z"/>
<path fill="#fe5b01" shape-rendering="crispEdges" d="M1074 299h1v10h-1zM1075 299h1v10h-1zM1076 299h1v10h-1zM1077 299h1v10h-1zM1078 299h1v10h-1zM1079 299h1v10h-1zM1055 309h1v11h-1zM1056 309h1v11h-1zM1057 309h1v11h-1zM1058 309h1v11h-1zM1059 309h1v11h-1zM1060 309h1v11h-1zM1061 309h1v11h-1zM1062 309h1v11h-1zM1063 309h1v11h-1zM1047 320h1v12h-1zM1048 320h1v12h-1zM1049 320h1v12h-1zM1050 320h1v12h-1zM1051 320h1v12h-1zM1052 320h1v12h-1zM1053 320h1v12h-1zM1054 320h1v12h-1zM1036 332h1v13h-1zM1037 332h1v13h-1zM1038 332h1v13h-1zM1039 332h1v13h-1zM1040 332h1v13h-1zM1041 332h1v13h-1zM1042 332h1v13h-1zM1009 345h1v12h-1zM1010 345h1v12h-1zM1011 345h1v12h-1zM1012 345h1v12h-1zM1003 357h1v11h-1zM1004 357h1v11h-1zM1005 357h1v11h-1zM998 368h1v11h-1zM995 379h1v11h-1z"/>
<path fill="#fd5f02" shape-rendering="crispEdges" d="M1064 309h1v11h-1zM1065 309h1v11h-1zM1066 309h1v11h-1zM1067 309h1v11h-1zM1068 309h1v11h-1zM1069 309h1v11h-1zM1070 309h1v11h-1zM1071 309h1v11h-1zM1072 309h1v11h-1zM1073 309h1v11h-1zM1074 309h1v11h-1zM1055 320h1v12h-1zM1056 320h1v12h-1zM1057 320h1v12h-1zM1058 320h1v12h-1zM1059 320h1v12h-1zM1060 320h1v12h-1zM1061 320h1v12h-1zM1062 320h1v12h-1zM1063 320h1v12h-1zM1064 320h1v12h-1zM1043 332h1v13h-1zM1044 332h1v13h-1zM1045 332h1v13h-1zM1046 332h1v13h-1zM1047 332h1v13h-1zM1048 332h1v13h-1zM1049 332h1v13h-1zM1050 332h1v13h-1zM1051 332h1v13h-1zM1013 345h1v12h-1zM1014 345h1v12h-1zM1015 345h1v12h-1zM1016 345h1v12h-1zM1006 357h1v11h-1zM1007 357h1v11h-1zM1008 357h1v11h-1zM999 368h1v11h-1zM1000 368h1v11h-1zM996 379h1v11h-1z"/>
<path fill="#fc6402" shape-rendering="crispEdges" d="M1075 309h1v11h-1zM1076 309h1v11h-1zM1077 309h1v11h-1zM1078 309h1v11h-1zM1079 309h1v11h-1zM1065 320h1v12h-1zM1066 320h1v12h-1zM1067 320h1v12h-1zM1068 320h1v12h-1zM1069 320h1v12h-1zM1070 320h1v12h-1zM1071 320h1v12h-1zM1072 320h1v12h-1zM1073 320h1v12h-1zM1074 320h1v12h-1zM1052 332h1v13h-1zM1053 332h1v13h-1zM1054 332h1v13h-1zM1055 332h1v13h-1zM1056 332h1v13h-1zM1057 332h1v13h-1zM1058 332h1v13h-1zM1059 332h1v13h-1zM1060 332h1v13h-1zM1017 345h1v12h-1zM1018 345h1v12h-1zM1019 345h1v12h-1zM1020 345h1v12h-1zM1009 357h1v11h-1zM1010 357h1v11h-1zM1011 357h1v11h-1zM1012 357h1v11h-1zM1001 368h1v11h-1zM1002 368h1v11h-1zM1003 368h1v11h-1zM997 379h1v11h-1zM998 379h1v11h-1z"/>
<path fill="#fb6903" shape-rendering="crispEdges" d="M1075 320h1v12h-1zM1076 320h1v12h-1zM1077 320h1v12h-1zM1078 320h1v12h-1zM1079 320h1v12h-1zM1061 332h1v13h-1zM1062 332h1v13h-1zM1063 332h1v13h-1zM1064 332h1v13h-1zM1065 332h1v13h-1zM1066 332h1v13h-1zM1067 332h1v13h-1zM1068 332h1v13h-1zM1069 332h1v13h-1zM1021 345h1v12h-1zM1022 345h1v12h-1zM1023 345h1v12h-1zM1024 345h1v12h-1zM1025 345h1v12h-1zM1013 357h1v11h-1zM1014 357h1v11h-1zM1015 357h1v11h-1zM1016 357h1v11h-1zM1004 368h1v11h-1zM1005 368h1v11h-1zM1006 368h1v11h-1zM999 379h1v11h-1z"/>
<path fill="#fa6e04" shape-rendering="crispEdges" d="M1070 332h1v13h-1zM1071 332h1v13h-1zM1072 332h1v13h-1zM1073 332h1v13h-1zM1074 332h1v13h-1zM1075 332h1v13h-1zM1076 332h1v13h-1zM1077 332h1v13h-1zM1078 332h1v13h-1zM1079 332h1v13h-1zM1026 345h1v12h-1zM1027 345h1v12h-1zM1028 345h1v12h-1zM1029 345h1v12h-1zM1030 345h1v12h-1zM1017 357h1v11h-1zM1018 357h1v11h-1zM1019 357h1v11h-1zM1020 357h1v11h-1zM1007 368h1v11h-1zM1008 368h1v11h-1zM1009 368h1v11h-1zM1000 379h1v11h-1zM1001 379h1v11h-1z"/>
<path fill="#f87205" shape-rendering="crispEdges" d="M1031 345h1v12h-1zM1032 345h1v12h-1zM1033 345h1v12h-1zM1034 345h1v12h-1zM1035 345h1v12h-1zM1036 345h1v12h-1zM1021 357h1v11h-1zM1022 357h1v11h-1zM1023 357h1v11h-1zM1024 357h1v11h-1zM1025 357h1v11h-1zM1010 368h1v11h-1zM1011 368h1v11h-1zM1012 368h1v11h-1zM1002 379h1v11h-1zM1003 379h1v11h-1zM1004 379h1v11h-1z"/>
<path fill="#f77705" shape-rendering="crispEdges" d="M1037 345h1v12h-1zM1038 345h1v12h-1zM1039 345h1v12h-1zM1040 345h1v12h-1zM1041 345h1v12h-1zM1026 357h1v11h-1zM1027 357h1v11h-1zM1028 357h1v11h-1zM1029 357h1v11h-1zM1013 368h1v11h-1zM1014 368h1v11h-1zM1015 368h1v11h-1zM1016 368h1v11h-1zM1005 379h1v11h-1zM1006 379h1v11h-1zM1007 379h1v11h-1z"/>
<path fill="#f38206" shape-rendering="crispEdges" d="M1042 345h1v12h-1zM1043 345h1v12h-1zM1044 345h1v12h-1zM1045 345h1v12h-1zM1046 345h1v12h-1zM1047 345h1v12h-1zM1048 345h1v12h-1zM1030 357h1v11h-1zM1031 357h1v11h-1zM1032 357h1v11h-1zM1033 357h1v11h-1zM1034 357h1v11h-1zM1035 357h1v11h-1zM1017 368h1v11h-1zM1018 368h1v11h-1zM1019 368h1v11h-1zM1020 368h1v11h-1zM1008 379h1v11h-1zM1009 379h1v11h-1z"/>
<path fill="#f08d08" shape-rendering="crispEdges" d="M1049 345h1v12h-1zM1050 345h1v12h-1zM1051 345h1v12h-1zM1052 345h1v12h-1zM1053 345h1v12h-1zM1054 345h1v12h-1zM1036 357h1v11h-1zM1037 357h1v11h-1zM1038 357h1v11h-1zM1039 357h1v11h-1zM1040 357h1v11h-1zM1021 368h1v11h-1zM1022 368h1v11h-1zM1023 368h1v11h-1zM1024 368h1v11h-1zM1010 379h1v11h-1zM1011 379h1v11h-1zM1012 379h1v11h-1zM1013 379h1v11h-1z"/>
<path fill="#ec9809" shape-rendering="crispEdges" d="M1055 345h1v12h-1zM1056 345h1v12h-1zM1057 345h1v12h-1zM1058 345h1v12h-1zM1059 345h1v12h-1zM1060 345h1v12h-1zM1061 345h1v12h-1zM1041 357h1v11h-1zM1042 357h1v11h-1zM1043 357h1v11h-1zM1044 357h1v11h-1zM1045 357h1v11h-1zM1046 357h1v11h-1zM1025 368h1v11h-1zM1026 368h1v11h-1zM1027 368h1v11h-1zM1028 368h1v11h-1zM1029 368h1v11h-1zM1014 379h1v11h-1zM1015 379h1v11h-1zM1016 379h1v11h-1z"/>
<path fill="#e9a30a" shape-rendering="crispEdges" d="M1062 345h1v12h-1zM1063 345h1v12h-1zM1064 345h1v12h-1zM1065 345h1v12h-1zM1066 345h1v12h-1zM1067 345h1v12h-1zM1068 345h1v12h-1zM1047 357h1v11h-1zM1048 357h1v11h-1zM1049 357h1v11h-1zM1050 357h1v11h-1zM1051 357h1v11h-1zM1052 357h1v11h-1zM1030 368h1v11h-1zM1031 368h1v11h-1zM1032 368h1v11h-1zM1033 368h1v11h-1zM1034 368h1v11h-1zM1017 379h1v11h-1zM1018 379h1v11h-1zM1019 379h1v11h-1zM1020 379h1v11h-1z"/>
<path fill="#e4ae0a" shape-rendering="crispEdges" d="M1069 345h1v12h-1zM1070 345h1v12h-1zM1071 345h1v12h-1zM1072 345h1v12h-1zM1073 345h1v12h-1zM1074 345h1v12h-1zM1075 345h1v12h-1zM1076 345h1v12h-1zM1053 357h1v11h-1zM1054 357h1v11h-1zM1055 357h1v11h-1zM1056 357h1v11h-1zM1057 357h1v11h-1zM1058 357h1v11h-1zM1035 368h1v11h-1zM1036 368h1v11h-1zM1037 368h1v11h-1zM1038 368h1v11h-1zM1039 368h1v11h-1zM1021 379h1v11h-1zM1022 379h1v11h-1zM1023 379h1v11h-1zM1024 379h1v11h-1z"/>
<path fill="#e1b50a" shape-rendering="crispEdges" d="M1077 345h1v12h-1zM1078 345h1v12h-1zM1079 345h1v12h-1zM1059 357h1v11h-1zM1060 357h1v11h-1zM1061 357h1v11h-1zM1062 357h1v11h-1zM1063 357h1v11h-1zM1064 357h1v11h-1zM1065 357h1v11h-1zM1040 368h1v11h-1zM1041 368h1v11h-1zM1042 368h1v11h-1zM1043 368h1v11h-1zM1044 368h1v11h-1zM1025 379h1v11h-1zM1026 379h1v11h-1zM1027 379h1v11h-1zM1028 379h1v11h-1z"/>
<path fill="#debc0a" shape-rendering="crispEdges" d="M1066 357h1v11h-1zM1067 357h1v11h-1zM1068 357h1v11h-1zM1069 357h1v11h-1zM1070 357h1v11h-1zM1071 357h1v11h-1zM1072 357h1v11h-1zM1045 368h1v11h-1zM1046 368h1v11h-1zM1047 368h1v11h-1zM1048 368h1v11h-1zM1049 368h1v11h-1zM1050 368h1v11h-1zM1029 379h1v11h-1zM1030 379h1v11h-1zM1031 379h1v11h-1zM1032 379h1v11h-1z"/>
<path fill="#dac00a" shape-rendering="crispEdges" d="M1073 357h1v11h-1zM1074 357h1v11h-1zM1075 357h1v11h-1zM1076 357h1v11h-1zM1077 357h1v11h-1zM1078 357h1v11h-1zM1079 357h1v11h-1zM1051 368h1v11h-1zM1052 368h1v11h-1zM1053 368h1v11h-1zM1054 368h1v11h-1zM1055 368h1v11h-1zM1056 368h1v11h-1zM1033 379h1v11h-1zM1034 379h1v11h-1zM1035 379h1v11h-1zM1036 379h1v11h-1zM1037 379h1v11h-1z"/>
<path fill="#d5c30a" shape-rendering="crispEdges" d="M1057 368h1v11h-1zM1058 368h1v11h-1zM1059 368h1v11h-1zM1060 368h1v11h-1zM1061 368h1v11h-1zM1062 368h1v11h-1zM1063 368h1v11h-1zM1038 379h1v11h-1zM1039 379h1v11h-1zM1040 379h1v11h-1zM1041 379h1v11h-1zM1042 379h1v11h-1z"/>
<path fill="#d0c50a" shape-rendering="crispEdges" d="M1064 368h1v11h-1zM1065 368h1v11h-1zM1066 368h1v11h-1zM1067 368h1v11h-1zM1068 368h1v11h-1zM1069 368h1v11h-1zM1043 379h1v11h-1zM1044 379h1v11h-1zM1045 379h1v11h-1zM1046 379h1v11h-1zM1047 379h1v11h-1z"/>
<path fill="#cbc80a" shape-rendering="crispEdges" d="M1070 368h1v11h-1zM1071 368h1v11h-1zM1072 368h1v11h-1zM1073 368h1v11h-1zM1074 368h1v11h-1zM1075 368h1v11h-1zM1076 368h1v11h-1zM1048 379h1v11h-1zM1049 379h1v11h-1zM1050 379h1v11h-1zM1051 379h1v11h-1zM1052 379h1v11h-1z"/>
<path fill="#c5ca0a" shape-rendering="crispEdges" d="M1077 368h1v11h-1zM1078 368h1v11h-1zM1079 368h1v11h-1zM1053 379h1v11h-1zM1054 379h1v11h-1zM1055 379h1v11h-1zM1056 379h1v11h-1zM1057 379h1v11h-1zM1058 379h1v11h-1z"/>
<path fill="#c0cd0a" shape-rendering="crispEdges" d="M1059 379h1v11h-1zM1060 379h1v11h-1zM1061 379h1v11h-1zM1062 379h1v11h-1zM1063 379h1v11h-1zM1064 379h1v11h-1z"/>
<path fill="#b7cc0d" shape-rendering="crispEdges" d="M1065 379h1v11h-1zM1066 379h1v11h-1zM1067 379h1v11h-1zM1068 379h1v11h-1zM1069 379h1v11h-1zM1070 379h1v11h-1z"/>
<path fill="#abca12" shape-rendering="crispEdges" d="M1071 379h1v11h-1zM1072 379h1v11h-1zM1073 379h1v11h-1zM1074 379h1v11h-1zM1075 379h1v11h-1zM1076 379h1v11h-1z"/>
<path fill="#9ec718" shape-rendering="crispEdges" d="M1077 379h1v11h-1zM1078 379h1v11h-1zM1079 379h1v11h-1z"/>
</g>
<g filter="url(#nzR2)">
<path fill="#beb800" shape-rendering="crispEdges" d="M989 390h1v13h-1zM990 390h1v13h-1zM991 390h1v13h-1zM992 390h1v13h-1z"/>
<path fill="#b9c300" shape-rendering="crispEdges" d="M993 390h1v13h-1zM994 390h1v13h-1zM995 390h1v13h-1zM996 390h1v13h-1zM997 390h1v13h-1zM998 390h1v13h-1z"/>
<path fill="#b6ca00" shape-rendering="crispEdges" d="M999 390h1v13h-1zM1000 390h1v13h-1zM1001 390h1v13h-1zM1002 390h1v13h-1zM1003 390h1v13h-1z"/>
<path fill="#b3d100" shape-rendering="crispEdges" d="M1004 390h1v13h-1zM1005 390h1v13h-1zM1006 390h1v13h-1zM1007 390h1v13h-1zM989 403h1v13h-1zM990 403h1v13h-1zM991 403h1v13h-1zM992 403h1v13h-1z"/>
<path fill="#afd500" shape-rendering="crispEdges" d="M1008 390h1v13h-1zM1009 390h1v13h-1zM1010 390h1v13h-1zM1011 390h1v13h-1zM1012 390h1v13h-1zM993 403h1v13h-1zM994 403h1v13h-1zM995 403h1v13h-1zM996 403h1v13h-1zM997 403h1v13h-1z"/>
<path fill="#aad800" shape-rendering="crispEdges" d="M1013 390h1v13h-1zM1014 390h1v13h-1zM1015 390h1v13h-1zM1016 390h1v13h-1zM998 403h1v13h-1zM999 403h1v13h-1zM1000 403h1v13h-1zM1001 403h1v13h-1z"/>
<path fill="#a5da00" shape-rendering="crispEdges" d="M1017 390h1v13h-1zM1018 390h1v13h-1zM1019 390h1v13h-1zM1002 403h1v13h-1zM1003 403h1v13h-1zM1004 403h1v13h-1zM1005 403h1v13h-1z"/>
<path fill="#a0dd00" shape-rendering="crispEdges" d="M1020 390h1v13h-1zM1021 390h1v13h-1zM1022 390h1v13h-1zM1023 390h1v13h-1zM1006 403h1v13h-1zM1007 403h1v13h-1zM1008 403h1v13h-1zM1009 403h1v13h-1z"/>
<path fill="#9adf00" shape-rendering="crispEdges" d="M1024 390h1v13h-1zM1025 390h1v13h-1zM1026 390h1v13h-1zM1027 390h1v13h-1zM1010 403h1v13h-1zM1011 403h1v13h-1zM1012 403h1v13h-1zM1013 403h1v13h-1z"/>
<path fill="#95e200" shape-rendering="crispEdges" d="M1028 390h1v13h-1zM1029 390h1v13h-1zM1030 390h1v13h-1zM1014 403h1v13h-1zM1015 403h1v13h-1zM1016 403h1v13h-1z"/>
<path fill="#8ce100" shape-rendering="crispEdges" d="M1031 390h1v13h-1zM1032 390h1v13h-1zM1033 390h1v13h-1zM1034 390h1v13h-1zM1017 403h1v13h-1zM1018 403h1v13h-1zM1019 403h1v13h-1z"/>
<path fill="#80df03" shape-rendering="crispEdges" d="M1035 390h1v13h-1zM1036 390h1v13h-1zM1037 390h1v13h-1zM1020 403h1v13h-1zM1021 403h1v13h-1zM1022 403h1v13h-1zM1023 403h1v13h-1z"/>
<path fill="#73dc09" shape-rendering="crispEdges" d="M1038 390h1v13h-1zM1039 390h1v13h-1zM1040 390h1v13h-1zM1041 390h1v13h-1zM1024 403h1v13h-1zM1025 403h1v13h-1zM1026 403h1v13h-1z"/>
<path fill="#67da0e" shape-rendering="crispEdges" d="M1042 390h1v13h-1zM1043 390h1v13h-1zM1044 390h1v13h-1zM1027 403h1v13h-1zM1028 403h1v13h-1zM1029 403h1v13h-1z"/>
<path fill="#5ad713" shape-rendering="crispEdges" d="M1045 390h1v13h-1zM1046 390h1v13h-1zM1047 390h1v13h-1zM1030 403h1v13h-1zM1031 403h1v13h-1zM1032 403h1v13h-1z"/>
<path fill="#4dd419" shape-rendering="crispEdges" d="M1048 390h1v13h-1zM1049 390h1v13h-1zM1050 390h1v13h-1zM1051 390h1v13h-1zM1033 403h1v13h-1zM1034 403h1v13h-1zM1035 403h1v13h-1z"/>
<path fill="#41d021" shape-rendering="crispEdges" d="M1052 390h1v13h-1zM1053 390h1v13h-1zM1054 390h1v13h-1zM1036 403h1v13h-1zM1037 403h1v13h-1zM1038 403h1v13h-1z"/>
<path fill="#35cc28" shape-rendering="crispEdges" d="M1055 390h1v13h-1zM1056 390h1v13h-1zM1057 390h1v13h-1zM1039 403h1v13h-1zM1040 403h1v13h-1zM1041 403h1v13h-1z"/>
<path fill="#28c930" shape-rendering="crispEdges" d="M1058 390h1v13h-1zM1059 390h1v13h-1zM1060 390h1v13h-1zM1042 403h1v13h-1zM1043 403h1v13h-1zM1044 403h1v13h-1z"/>
<path fill="#1cc538" shape-rendering="crispEdges" d="M1061 390h1v13h-1zM1062 390h1v13h-1zM1063 390h1v13h-1zM1045 403h1v13h-1zM1046 403h1v13h-1z"/>
<path fill="#10c13f" shape-rendering="crispEdges" d="M1064 390h1v13h-1zM1065 390h1v13h-1zM1066 390h1v13h-1zM1047 403h1v13h-1zM1048 403h1v13h-1zM1049 403h1v13h-1z"/>
<path fill="#06be45" shape-rendering="crispEdges" d="M1067 390h1v13h-1zM1068 390h1v13h-1zM1069 390h1v13h-1zM1050 403h1v13h-1zM1051 403h1v13h-1zM1052 403h1v13h-1z"/>
<path fill="#00bb4b" shape-rendering="crispEdges" d="M1070 390h1v13h-1zM1071 390h1v13h-1zM1072 390h1v13h-1zM1053 403h1v13h-1zM1054 403h1v13h-1zM1055 403h1v13h-1z"/>
<path fill="#00b750" shape-rendering="crispEdges" d="M1073 390h1v13h-1zM1074 390h1v13h-1zM1075 390h1v13h-1zM1056 403h1v13h-1zM1057 403h1v13h-1z"/>
<path fill="#00b355" shape-rendering="crispEdges" d="M1076 390h1v13h-1zM1077 390h1v13h-1zM1078 390h1v13h-1zM1058 403h1v13h-1zM1059 403h1v13h-1zM1060 403h1v13h-1z"/>
<path fill="#00b05a" shape-rendering="crispEdges" d="M1079 390h1v13h-1zM1061 403h1v13h-1zM1062 403h1v13h-1zM1063 403h1v13h-1z"/>
<path fill="#00ac5f" shape-rendering="crispEdges" d="M1064 403h1v13h-1zM1065 403h1v13h-1z"/>
<path fill="#00a864" shape-rendering="crispEdges" d="M1066 403h1v13h-1zM1067 403h1v13h-1zM1068 403h1v13h-1z"/>
<path fill="#00a46a" shape-rendering="crispEdges" d="M1069 403h1v13h-1zM1070 403h1v13h-1zM1071 403h1v13h-1z"/>
<path fill="#009f70" shape-rendering="crispEdges" d="M1072 403h1v13h-1zM1073 403h1v13h-1z"/>
<path fill="#009b77" shape-rendering="crispEdges" d="M1074 403h1v13h-1zM1075 403h1v13h-1zM1076 403h1v13h-1z"/>
<path fill="#00987e" shape-rendering="crispEdges" d="M1077 403h1v13h-1zM1078 403h1v13h-1z"/>
<path fill="#009485" shape-rendering="crispEdges" d="M1079 403h1v13h-1z"/>
</g>
<rect x="989" y="295" width="9" height="25" fill="#d95f6a"/>
<rect x="988" y="384" width="1" height="24" fill="#0b7fd5"/>
<rect x="988" y="392" width="1" height="12" fill="#28c85a"/>
<rect x="136" y="413" width="1" height="3" fill="#7a7a7a"/>
<rect x="177" y="413" width="1" height="3" fill="#7a7a7a"/>
<rect x="218" y="413" width="1" height="3" fill="#7a7a7a"/>
<rect x="259" y="413" width="1" height="3" fill="#7a7a7a"/>
<rect x="300" y="413" width="1" height="3" fill="#7a7a7a"/>
<rect x="341" y="413" width="1" height="3" fill="#7a7a7a"/>
<rect x="382" y="413" width="1" height="3" fill="#7a7a7a"/>
<rect x="423" y="413" width="1" height="3" fill="#7a7a7a"/>
<rect x="464" y="413" width="1" height="3" fill="#7a7a7a"/>
<rect x="505" y="413" width="1" height="3" fill="#7a7a7a"/>
<rect x="546" y="413" width="1" height="3" fill="#7a7a7a"/>
<rect x="587" y="413" width="1" height="3" fill="#7a7a7a"/>
<rect x="628" y="413" width="1" height="3" fill="#7a7a7a"/>
<rect x="669" y="413" width="1" height="3" fill="#7a7a7a"/>
<rect x="710" y="413" width="1" height="3" fill="#7a7a7a"/>
<rect x="751" y="413" width="1" height="3" fill="#7a7a7a"/>
<rect x="792" y="413" width="1" height="3" fill="#7a7a7a"/>
<rect x="833" y="413" width="1" height="3" fill="#7a7a7a"/>
<rect x="874" y="413" width="1" height="3" fill="#7a7a7a"/>
<rect x="915" y="413" width="1" height="3" fill="#7a7a7a"/>
<rect x="956" y="413" width="1" height="3" fill="#7a7a7a"/>
<rect x="997" y="413" width="1" height="3" fill="#7a7a7a"/>
<rect x="1038" y="413" width="1" height="3" fill="#7a7a7a"/>
<rect x="95" y="224" width="1" height="193" fill="#222"/>
<rect x="95" y="416" width="986" height="1" fill="#222"/>
<rect x="1080" y="224" width="1" height="193" fill="#111"/>
<rect x="91" y="408" width="4" height="1" fill="#333"/>
<rect x="91" y="391" width="4" height="1" fill="#333"/>
<rect x="91" y="379" width="4" height="1" fill="#333"/>
<rect x="91" y="368" width="4" height="1" fill="#333"/>
<rect x="91" y="360" width="4" height="1" fill="#333"/>
<rect x="91" y="352" width="4" height="1" fill="#333"/>
<rect x="91" y="345" width="4" height="1" fill="#333"/>
<rect x="91" y="334" width="4" height="1" fill="#333"/>
<rect x="91" y="329" width="4" height="1" fill="#333"/>
<rect x="91" y="325" width="4" height="1" fill="#333"/>
<rect x="91" y="320" width="4" height="1" fill="#333"/>
<rect x="91" y="316" width="4" height="1" fill="#333"/>
<rect x="91" y="313" width="4" height="1" fill="#333"/>
<rect x="91" y="309" width="4" height="1" fill="#333"/>
<rect x="91" y="306" width="4" height="1" fill="#333"/>
<rect x="91" y="303" width="4" height="1" fill="#333"/>
<rect x="91" y="297" width="4" height="1" fill="#333"/>
<rect x="91" y="295" width="4" height="1" fill="#333"/>
<rect x="91" y="292" width="4" height="1" fill="#333"/>
<rect x="91" y="290" width="4" height="1" fill="#333"/>
<rect x="91" y="287" width="4" height="1" fill="#333"/>
<rect x="91" y="285" width="4" height="1" fill="#333"/>
<rect x="91" y="283" width="4" height="1" fill="#333"/>
<rect x="91" y="281" width="4" height="1" fill="#333"/>
<rect x="91" y="279" width="4" height="1" fill="#333"/>
<rect x="91" y="275" width="4" height="1" fill="#333"/>
<rect x="91" y="273" width="4" height="1" fill="#333"/>
<rect x="91" y="272" width="4" height="1" fill="#333"/>
<rect x="91" y="270" width="4" height="1" fill="#333"/>
<rect x="91" y="268" width="4" height="1" fill="#333"/>
<rect x="91" y="267" width="4" height="1" fill="#333"/>
<rect x="91" y="265" width="4" height="1" fill="#333"/>
<rect x="91" y="264" width="4" height="1" fill="#333"/>
<rect x="91" y="262" width="4" height="1" fill="#333"/>
<rect x="91" y="259" width="4" height="1" fill="#333"/>
<rect x="91" y="258" width="4" height="1" fill="#333"/>
<rect x="91" y="257" width="4" height="1" fill="#333"/>
<rect x="91" y="255" width="4" height="1" fill="#333"/>
<rect x="91" y="254" width="4" height="1" fill="#333"/>
<rect x="91" y="253" width="4" height="1" fill="#333"/>
<rect x="91" y="252" width="4" height="1" fill="#333"/>
<rect x="91" y="250" width="4" height="1" fill="#333"/>
<rect x="91" y="249" width="4" height="1" fill="#333"/>
<rect x="91" y="247" width="4" height="1" fill="#333"/>
<rect x="91" y="246" width="4" height="1" fill="#333"/>
<rect x="91" y="245" width="4" height="1" fill="#333"/>
<rect x="91" y="244" width="4" height="1" fill="#333"/>
<rect x="91" y="243" width="4" height="1" fill="#333"/>
<rect x="91" y="242" width="4" height="1" fill="#333"/>
<rect x="91" y="241" width="4" height="1" fill="#333"/>
<rect x="91" y="240" width="4" height="1" fill="#333"/>
<rect x="91" y="239" width="4" height="1" fill="#333"/>
<rect x="91" y="237" width="4" height="1" fill="#333"/>
<rect x="91" y="236" width="4" height="1" fill="#333"/>
<rect x="91" y="235" width="4" height="1" fill="#333"/>
<rect x="91" y="234" width="4" height="1" fill="#333"/>
<rect x="91" y="233" width="4" height="1" fill="#333"/>
<rect x="91" y="232" width="4" height="1" fill="#333"/>
<rect x="91" y="232" width="4" height="1" fill="#333"/>
<rect x="91" y="231" width="4" height="1" fill="#333"/>
<rect x="91" y="230" width="4" height="1" fill="#333"/>
<rect x="87" y="229" width="8" height="1" fill="#222"/>
<text x="81" y="234" text-anchor="end" font-size="12" textLength="26.7" lengthAdjust="spacingAndGlyphs">700.</text>
<rect x="87" y="238" width="8" height="1" fill="#222"/>
<text x="81" y="243" text-anchor="end" font-size="12" textLength="26.7" lengthAdjust="spacingAndGlyphs">600.</text>
<rect x="87" y="248" width="8" height="1" fill="#222"/>
<text x="81" y="253" text-anchor="end" font-size="12" textLength="26.7" lengthAdjust="spacingAndGlyphs">500.</text>
<rect x="87" y="261" width="8" height="1" fill="#222"/>
<text x="81" y="266" text-anchor="end" font-size="12" textLength="26.7" lengthAdjust="spacingAndGlyphs">400.</text>
<rect x="87" y="277" width="8" height="1" fill="#222"/>
<text x="81" y="282" text-anchor="end" font-size="12" textLength="26.7" lengthAdjust="spacingAndGlyphs">300.</text>
<rect x="87" y="300" width="8" height="1" fill="#222"/>
<text x="81" y="305" text-anchor="end" font-size="12" textLength="26.7" lengthAdjust="spacingAndGlyphs">200.</text>
<rect x="87" y="339" width="8" height="1" fill="#222"/>
<text x="81" y="344" text-anchor="end" font-size="12" textLength="26.7" lengthAdjust="spacingAndGlyphs">100.</text>
<text transform="translate(46,320) rotate(-90)" text-anchor="middle" font-size="12" textLength="72.7" lengthAdjust="spacingAndGlyphs">Energy (keV)</text>
<rect x="1092" y="226" width="12" height="191" fill="url(#cb)"/>
<rect x="1104" y="225" width="1" height="192" fill="#222"/>
<rect x="1104" y="225" width="9" height="1" fill="#222"/>
<text x="1117" y="233" text-anchor="start" font-size="12">10</text>
<text x="1132.77" y="227" text-anchor="start" font-size="12"><tspan textLength="7" lengthAdjust="spacingAndGlyphs">-</tspan>9</text>
<rect x="1104" y="282" width="9" height="1" fill="#222"/>
<text x="1117" y="290" text-anchor="start" font-size="12">10</text>
<text x="1132.77" y="284" text-anchor="start" font-size="12"><tspan textLength="7" lengthAdjust="spacingAndGlyphs">-</tspan>10</text>
<rect x="1104" y="340" width="9" height="1" fill="#222"/>
<text x="1117" y="348" text-anchor="start" font-size="12">10</text>
<text x="1132.77" y="342" text-anchor="start" font-size="12"><tspan textLength="7" lengthAdjust="spacingAndGlyphs">-</tspan>11</text>
<rect x="1104" y="397" width="9" height="1" fill="#222"/>
<text x="1117" y="405" text-anchor="start" font-size="12">10</text>
<text x="1132.77" y="399" text-anchor="start" font-size="12"><tspan textLength="7" lengthAdjust="spacingAndGlyphs">-</tspan>12</text>
<rect x="1104" y="265" width="5" height="1" fill="#222"/>
<rect x="1104" y="255" width="5" height="1" fill="#222"/>
<rect x="1104" y="247" width="5" height="1" fill="#222"/>
<rect x="1104" y="242" width="5" height="1" fill="#222"/>
<rect x="1104" y="237" width="5" height="1" fill="#222"/>
<rect x="1104" y="233" width="5" height="1" fill="#222"/>
<rect x="1104" y="230" width="5" height="1" fill="#222"/>
<rect x="1104" y="227" width="5" height="1" fill="#222"/>
<rect x="1104" y="322" width="5" height="1" fill="#222"/>
<rect x="1104" y="312" width="5" height="1" fill="#222"/>
<rect x="1104" y="305" width="5" height="1" fill="#222"/>
<rect x="1104" y="299" width="5" height="1" fill="#222"/>
<rect x="1104" y="295" width="5" height="1" fill="#222"/>
<rect x="1104" y="291" width="5" height="1" fill="#222"/>
<rect x="1104" y="288" width="5" height="1" fill="#222"/>
<rect x="1104" y="285" width="5" height="1" fill="#222"/>
<rect x="1104" y="380" width="5" height="1" fill="#222"/>
<rect x="1104" y="370" width="5" height="1" fill="#222"/>
<rect x="1104" y="362" width="5" height="1" fill="#222"/>
<rect x="1104" y="357" width="5" height="1" fill="#222"/>
<rect x="1104" y="352" width="5" height="1" fill="#222"/>
<rect x="1104" y="348" width="5" height="1" fill="#222"/>
<rect x="1104" y="345" width="5" height="1" fill="#222"/>
<rect x="1104" y="342" width="5" height="1" fill="#222"/>
<rect x="1104" y="414" width="5" height="1" fill="#222"/>
<rect x="1104" y="410" width="5" height="1" fill="#222"/>
<rect x="1104" y="406" width="5" height="1" fill="#222"/>
<rect x="1104" y="403" width="5" height="1" fill="#222"/>
<rect x="1104" y="400" width="5" height="1" fill="#222"/>
<text transform="translate(1163.5,319.5) rotate(90)" text-anchor="middle" font-size="12" textLength="120.5" lengthAdjust="spacingAndGlyphs">pressure dyne/cm^2</text>
<rect x="95.5" y="420.5" width="985" height="89" fill="#fff" stroke="#222" stroke-width="1"/>
<rect x="91" y="507" width="4" height="1" fill="#222"/>
<rect x="91" y="505" width="4" height="1" fill="#222"/>
<rect x="91" y="504" width="4" height="1" fill="#222"/>
<rect x="91" y="503" width="4" height="1" fill="#222"/>
<rect x="87" y="502" width="8" height="1" fill="#222"/>
<text x="60.7302" y="510" text-anchor="end" font-size="12">10</text>
<text x="61.2302" y="504" text-anchor="start" font-size="12"><tspan textLength="7" lengthAdjust="spacingAndGlyphs">-</tspan>12</text>
<rect x="91" y="495" width="4" height="1" fill="#222"/>
<rect x="91" y="492" width="4" height="1" fill="#222"/>
<rect x="91" y="489" width="4" height="1" fill="#222"/>
<rect x="91" y="487" width="4" height="1" fill="#222"/>
<rect x="91" y="485" width="4" height="1" fill="#222"/>
<rect x="91" y="483" width="4" height="1" fill="#222"/>
<rect x="91" y="482" width="4" height="1" fill="#222"/>
<rect x="91" y="481" width="4" height="1" fill="#222"/>
<rect x="87" y="480" width="8" height="1" fill="#222"/>
<text x="60.7302" y="488" text-anchor="end" font-size="12">10</text>
<text x="61.2302" y="482" text-anchor="start" font-size="12"><tspan textLength="7" lengthAdjust="spacingAndGlyphs">-</tspan>11</text>
<rect x="91" y="474" width="4" height="1" fill="#222"/>
<rect x="91" y="470" width="4" height="1" fill="#222"/>
<rect x="91" y="467" width="4" height="1" fill="#222"/>
<rect x="91" y="465" width="4" height="1" fill="#222"/>
<rect x="91" y="463" width="4" height="1" fill="#222"/>
<rect x="91" y="462" width="4" height="1" fill="#222"/>
<rect x="91" y="460" width="4" height="1" fill="#222"/>
<rect x="91" y="459" width="4" height="1" fill="#222"/>
<rect x="87" y="458" width="8" height="1" fill="#222"/>
<text x="60.7302" y="466" text-anchor="end" font-size="12">10</text>
<text x="61.2302" y="460" text-anchor="start" font-size="12"><tspan textLength="7" lengthAdjust="spacingAndGlyphs">-</tspan>10</text>
<rect x="91" y="452" width="4" height="1" fill="#222"/>
<rect x="91" y="448" width="4" height="1" fill="#222"/>
<rect x="91" y="445" width="4" height="1" fill="#222"/>
<rect x="91" y="443" width="4" height="1" fill="#222"/>
<rect x="91" y="441" width="4" height="1" fill="#222"/>
<rect x="91" y="440" width="4" height="1" fill="#222"/>
<rect x="91" y="438" width="4" height="1" fill="#222"/>
<rect x="91" y="437" width="4" height="1" fill="#222"/>
<rect x="87" y="436" width="8" height="1" fill="#222"/>
<text x="68.3651" y="444" text-anchor="end" font-size="12">10</text>
<text x="68.8651" y="438" text-anchor="start" font-size="12"><tspan textLength="7" lengthAdjust="spacingAndGlyphs">-</tspan>9</text>
<rect x="91" y="430" width="4" height="1" fill="#222"/>
<rect x="91" y="426" width="4" height="1" fill="#222"/>
<rect x="91" y="423" width="4" height="1" fill="#222"/>
<rect x="91" y="421" width="4" height="1" fill="#222"/>
<text transform="translate(35.5,465.5) rotate(-90)" text-anchor="middle" font-size="12" textLength="72.7" lengthAdjust="spacingAndGlyphs">P dyn/cm^2</text>
<clipPath id="c3"><rect x="96" y="421" width="984" height="88"/></clipPath>
<g clip-path="url(#c3)" fill="none" stroke-width="1.0" stroke-linejoin="round">
<path stroke="#00ff00" d="M114.3 509.2L114.3 493.8M193.3 509.2L193.3 494.3M210.3 509.2L210.3 486.3M220.3 509.2L220.3 477.2M330.3 509.2L330.3 482.2M350.5 509.2L350.5 490.2M357.2 509.2L357.2 489.7L360.3 486.0L364.2 463.0L367.0 466.3L371.3 460.5L374.7 509.2M384.5 509.2L384.5 460.2M391.3 509.2L391.3 489.7L394.5 482.2L394.5 509.2M401.7 509.2L401.7 494.7M435.5 509.2L435.5 482.2M466.3 509.2L466.3 466.3L470.3 489.7L470.3 509.2M476.3 509.2L476.3 470.0L480.3 486.3L480.5 509.2M511.3 509.2L511.3 488.0M517.5 509.2L517.5 471.3M548.3 509.2L548.3 494.7L552.5 481.3L555.3 493.8L555.3 509.2M582.5 509.2L582.5 481.0M599.2 509.2L599.2 486.3L603.7 475.5L603.7 509.2M610.3 509.2L610.3 494.3M617.5 509.2L617.5 487.2M623.3 509.2L623.3 482.7L627.7 482.7L627.7 509.2M675.5 509.2L675.5 482.2M801.3 509.2L801.3 490.5L804.7 487.2L808.7 471.3L808.7 509.2M818.3 509.2L818.3 484.3M832.5 509.2L832.5 482.2M842.5 509.2L842.5 487.2M883.3 509.2L883.3 480.2M890.3 509.2L890.3 493.3M931.3 509.2L931.3 490.0M945.3 509.2L945.3 465.2L948.7 488.0L948.7 509.2M958.7 509.2L958.7 483.0M965.5 509.2L965.5 486.0M1016.7 509.2L1016.7 482.2"/>
<path stroke="#0000ff" d="M101.3 509.2L101.3 498.0M107.5 509.2L107.5 471.3L111.3 493.3L114.7 493.3L118.3 487.2L121.7 509.2M123.3 509.2L125.8 505.5L128.3 496.3L128.3 509.2M135.5 509.2L135.5 494.7L138.7 484.7L142.5 477.2L145.5 509.2M152.5 509.2L152.5 490.2L155.8 494.3L159.2 493.3L162.5 490.2L165.8 496.3L169.5 503.3L172.5 505.2L176.7 492.5L179.5 492.5L183.3 506.3L186.3 486.0L189.7 509.2M193.3 509.2L196.3 488.3L200.0 495.5L203.7 489.3L203.7 509.2M210.3 486.3L213.7 507.2L217.5 497.2L217.5 509.2M224.2 509.2L224.5 499.7L227.5 486.3L230.8 509.2M235.0 509.2L237.5 489.3L237.8 509.2M248.3 509.2L251.3 487.2L251.7 509.2M261.3 509.2L261.3 496.3L265.3 496.3L265.3 509.2M271.7 509.2L271.7 493.3L275.0 494.2L278.7 482.2L282.5 508.0L283.3 509.2M284.2 509.2L289.2 487.2L289.5 509.2M295.8 509.2L295.8 476.3L299.2 474.3L302.5 484.7L306.3 498.5L309.2 499.7L312.5 497.7L316.3 479.3L319.7 509.2L323.3 493.0L326.7 488.0L330.0 495.5L333.7 482.2L336.7 498.0L336.7 509.2M343.3 509.2L343.3 482.2L346.7 490.5L350.0 498.0L353.3 496.3L353.3 509.2M360.3 509.2L360.3 499.7L364.2 489.7L367.5 490.5L370.8 482.2L374.2 480.5L377.5 491.3L380.8 501.3L385.0 488.0L388.3 481.3L391.7 479.7L394.7 475.5L398.0 476.3L401.3 473.5L405.0 486.3L408.3 486.3L411.7 490.0L415.0 490.5L418.3 502.2L422.0 503.3L425.8 484.7L429.2 471.3L432.0 472.2L435.8 491.3L439.2 507.2L442.5 487.2L446.3 501.3L449.2 497.2L449.2 509.2M463.3 509.2L463.3 482.2L466.7 488.0L470.0 493.8L473.3 471.0L476.7 492.2L480.0 499.7L483.3 487.2L483.7 509.2M490.0 504.7L495.0 507.2M495.0 507.2L497.5 509.2M507.0 509.2L511.3 474.3L514.7 491.3L514.7 509.2M521.3 509.2L521.3 485.5L524.7 493.0L528.3 486.3L528.3 509.2M535.0 509.2L535.0 503.0M541.3 509.2L541.3 497.2L545.8 490.5L548.7 497.2L552.5 479.7L552.5 509.2M559.2 509.2L562.5 478.3L565.8 499.7L565.8 509.2M576.7 498.0L579.7 506.3L582.5 490.0L586.3 503.3L589.7 500.5L594.2 503.3L599.7 488.0L605.0 504.7L608.3 509.2M617.5 509.2L623.0 501.0L628.3 508.0L631.7 509.2M644.2 509.2L644.2 498.3L647.5 499.7L647.5 509.2M661.3 509.2L661.3 492.2M668.3 509.2L668.3 507.2M681.7 509.2L681.7 507.2M695.8 509.2L695.8 503.0M706.3 509.2L709.7 499.3L713.0 509.2L716.3 501.3L716.3 509.2M725.0 509.2L726.3 508.0M733.7 509.2L733.7 482.2L736.7 474.3L736.7 509.2M745.0 509.2L746.7 507.5L748.7 509.2M771.3 509.2L774.5 496.3L774.5 509.2M791.3 509.2L791.3 503.0M804.5 509.2L804.5 489.3L809.2 504.7L811.3 502.2L811.3 509.2M819.2 499.3L822.5 504.3L825.8 497.2L828.3 494.7L832.5 502.7L835.5 499.3L835.5 509.2M843.3 501.3L845.8 509.2L849.7 483.3L853.0 509.2L856.3 502.7L859.2 509.2M864.2 509.2L866.3 491.3L866.3 509.2M873.3 509.2L876.7 489.3L880.5 491.0L880.8 509.2M897.5 509.2L897.5 488.0L900.8 508.0L904.7 480.2L910.0 503.3L914.7 497.7L918.0 497.2L921.7 494.3L924.7 506.3L927.5 482.2L934.7 488.8L938.3 503.0L941.3 509.2M945.3 509.2L948.3 488.0L951.7 479.3L955.3 504.7L958.7 478.0L962.5 498.8L965.3 499.7L968.7 494.3L972.5 493.3L975.8 499.3L979.7 499.3L982.5 480.2L982.5 509.2M989.2 509.2L989.2 496.3L992.5 482.2L996.3 501.3L999.2 507.2L1006.3 492.2L1009.7 509.2L1013.3 491.0L1016.3 509.2M1023.3 509.2L1023.3 501.3L1030.8 486.3L1034.2 509.2L1037.5 491.0L1040.8 505.5L1044.7 502.2L1044.7 509.2M1055.0 509.2L1058.0 498.8L1061.7 494.3L1064.7 499.3L1064.7 509.2"/>
<path stroke="#ff0000" d="M333.7 420.5L334.3 497.2L336.7 497.7L339.2 502.2L341.7 496.3L343.3 495.5L345.0 499.7L346.7 495.0L349.2 493.8L351.7 499.3L354.2 497.7L356.7 496.3L359.2 498.0L361.7 495.0L364.2 492.2L366.7 493.8L369.2 494.7L371.7 494.3L374.2 496.3L376.7 498.0L379.2 499.7L380.8 503.0L382.5 498.8L385.0 498.3L387.5 500.5L390.0 498.3L392.5 499.7L395.0 497.7L397.5 499.7L400.0 496.3L402.5 494.3L405.0 496.0L407.5 498.3L410.0 499.3L412.5 500.5L415.0 503.8L416.7 498.8L419.2 501.0L421.7 499.7L424.2 501.0L426.7 498.8L429.2 499.7L431.7 497.7L434.2 496.3L436.7 494.3L439.2 495.0L441.7 491.3L444.2 494.7L446.7 496.0L449.2 495.5L451.7 494.3L453.3 503.0L455.8 498.0L458.3 500.5L460.8 499.3L463.3 501.3L465.8 494.7L468.3 496.3L470.8 494.7L473.3 496.3L475.8 496.0L478.3 498.8L480.8 497.7L483.3 499.7L485.8 496.3L488.3 502.2L490.8 499.7L493.3 495.5L495.0 494.3M495.0 498.0L497.0 496.3L499.2 500.0L501.3 503.0L503.3 498.0L505.3 500.5L507.5 499.3L509.7 496.3L511.7 496.0L513.7 495.0L515.8 496.0L518.3 498.0L520.0 495.0L521.7 505.5L523.7 499.7L525.8 498.3L528.3 498.0L530.8 498.8L533.3 503.0L535.5 495.0L537.5 500.5L539.7 498.8L541.7 499.7L544.2 498.0L546.7 496.3L549.2 497.7L551.7 495.5L553.7 494.7L555.8 499.3L558.3 498.8L560.8 496.3L563.3 496.0L565.8 497.2L568.3 495.5L569.7 503.8L571.3 495.0L573.3 496.0L575.8 495.0L576.7 496.3L578.3 420.5M591.7 420.5L592.5 494.7L595.0 509.2M598.3 509.2L598.3 506.3M605.8 509.2L606.3 504.7M610.0 509.2L610.0 505.0M613.7 509.2L613.7 508.0M618.7 509.2L618.7 501.3M629.2 509.2L629.2 501.0M636.3 509.2L636.3 503.3M639.3 509.2L639.3 505.0M642.5 509.2L642.5 508.0M654.2 509.2L654.2 508.0M672.5 509.2L672.5 504.3M685.5 509.2L685.5 505.0M704.5 509.2L704.5 506.0M711.3 509.2L711.3 505.5M749.2 509.2L749.2 508.0M759.7 509.2L759.7 506.0M777.5 509.2L778.7 502.2L779.7 509.2M792.5 509.2L792.5 506.3M797.5 509.2L797.5 503.8L798.7 509.2M802.5 509.2L802.5 508.0M836.7 509.2L836.7 508.0M856.3 509.2L856.3 506.3M864.7 509.2L864.7 507.2M868.3 509.2L868.3 506.0M878.3 509.2L878.3 508.0M885.0 509.2L885.0 505.5L886.3 509.2M887.5 509.2L887.5 504.3M985.0 509.2L988.7 420.5M897.5 509.2L897.5 507.7M904.5 509.2L904.5 503.3M919.2 509.2L919.2 507.7M924.2 509.2L924.2 506.3M930.3 509.2L930.3 508.0M935.5 509.2L935.5 504.3M946.3 509.2L946.3 505.5M954.7 509.2L954.7 504.3M967.5 509.2L967.5 508.0"/>
</g>
<rect x="136" y="506" width="1" height="3" fill="#222"/>
<rect x="177" y="506" width="1" height="3" fill="#222"/>
<rect x="218" y="506" width="1" height="3" fill="#222"/>
<rect x="259" y="506" width="1" height="3" fill="#222"/>
<rect x="300" y="506" width="1" height="3" fill="#222"/>
<rect x="341" y="506" width="1" height="3" fill="#222"/>
<rect x="382" y="506" width="1" height="3" fill="#222"/>
<rect x="423" y="506" width="1" height="3" fill="#222"/>
<rect x="464" y="506" width="1" height="3" fill="#222"/>
<rect x="505" y="506" width="1" height="3" fill="#222"/>
<rect x="546" y="506" width="1" height="3" fill="#222"/>
<rect x="587" y="506" width="1" height="3" fill="#222"/>
<rect x="628" y="506" width="1" height="3" fill="#222"/>
<rect x="669" y="506" width="1" height="3" fill="#222"/>
<rect x="710" y="506" width="1" height="3" fill="#222"/>
<rect x="751" y="506" width="1" height="3" fill="#222"/>
<rect x="792" y="506" width="1" height="3" fill="#222"/>
<rect x="833" y="506" width="1" height="3" fill="#222"/>
<rect x="874" y="506" width="1" height="3" fill="#222"/>
<rect x="915" y="506" width="1" height="3" fill="#222"/>
<rect x="956" y="506" width="1" height="3" fill="#222"/>
<rect x="997" y="506" width="1" height="3" fill="#222"/>
<rect x="1038" y="506" width="1" height="3" fill="#222"/>
<line x1="1091" y1="426" x2="1103" y2="430.6" stroke="#0000ff" stroke-width="1.3"/>
<text x="1107" y="433" text-anchor="start" font-size="12" textLength="54.0" lengthAdjust="spacingAndGlyphs">CHEMS-P</text>
<line x1="1091" y1="441" x2="1103" y2="445.6" stroke="#ff0000" stroke-width="1.3"/>
<text x="1107" y="448" text-anchor="start" font-size="12" textLength="53.6" lengthAdjust="spacingAndGlyphs">LEMMS-P</text>
<line x1="1091" y1="456" x2="1103" y2="460.6" stroke="#00ff00" stroke-width="1.3"/>
<text x="1107" y="463" text-anchor="start" font-size="12" textLength="56.5" lengthAdjust="spacingAndGlyphs">CHEMS-O</text>
<rect x="95" y="513" width="986" height="178" fill="#000"/>
<path fill="#1214eb" shape-rendering="crispEdges" d="M96 568h1v12h-1zM294 530h2v22h-2zM303 530h1v18h-1zM315 557h1v23h-1zM448 545h1v7h-1zM529 545h1v7h-1zM599 541h2v11h-2zM652 552h1v28h-1zM1021 562h1v18h-1z"/>
<path fill="#0a14dc" shape-rendering="crispEdges" d="M102 552h1v16h-1zM167 552h1v28h-1zM203 536h1v16h-1zM500 552h1v28h-1zM517 530h1v18h-1zM612 557h2v5h-2zM675 530h1v22h-1zM793 575h1v5h-1zM814 530h2v22h-2zM931 541h1v11h-1z"/>
<path fill="#0514af" shape-rendering="crispEdges" d="M104 516h1v8h-1zM258 536h2v16h-2zM308 530h1v22h-1zM394 516h2v8h-2zM471 552h1v28h-1z"/>
<path fill="#0a08eb" shape-rendering="crispEdges" d="M112 530h1v15h-1zM133 536h1v16h-1zM228 526h2v15h-2zM250 518h1v8h-1zM251 518h2v8h-2zM290 568h1v12h-1zM375 552h1v28h-1zM422 572h1v8h-1zM542 541h2v7h-2zM977 566h1v14h-1zM988 530h1v22h-1zM991 530h1v22h-1zM1055 536h1v9h-1z"/>
<path fill="#0508af" shape-rendering="crispEdges" d="M115 530h2v22h-2zM411 530h1v15h-1zM727 536h1v16h-1zM791 518h1v8h-1zM1048 530h2v22h-2z"/>
<path fill="#1450f0" shape-rendering="crispEdges" d="M120 541h1v11h-1zM378 541h1v7h-1zM842 557h1v23h-1z"/>
<path fill="#0523eb" shape-rendering="crispEdges" d="M122 568h1v12h-1zM352 541h1v11h-1zM558 536h2v16h-2zM588 545h2v7h-2zM610 552h2v28h-2zM634 541h1v11h-1zM696 522h1v30h-1zM794 572h1v8h-1zM963 545h1v7h-1z"/>
<path fill="#0a23af" shape-rendering="crispEdges" d="M122 541h2v11h-2zM151 572h1v8h-1zM221 518h1v8h-1zM250 557h1v23h-1zM316 562h1v18h-1zM323 572h1v8h-1zM431 530h1v22h-1zM665 526h1v26h-1zM775 530h1v22h-1zM877 518h2v8h-2zM909 530h1v22h-1z"/>
<path fill="#0508c8" shape-rendering="crispEdges" d="M129 552h1v28h-1zM191 552h1v28h-1zM319 552h1v28h-1zM396 526h2v26h-2zM938 541h1v11h-1zM1016 572h1v8h-1zM1079 552h2v28h-2z"/>
<path fill="#0514eb" shape-rendering="crispEdges" d="M130 552h1v28h-1zM433 572h1v8h-1zM437 522h1v30h-1zM447 530h1v22h-1zM572 557h2v23h-2zM898 575h1v5h-1zM967 562h1v18h-1zM971 530h1v22h-1z"/>
<path fill="#1214dc" shape-rendering="crispEdges" d="M131 568h1v12h-1zM197 530h2v22h-2zM381 575h1v5h-1zM678 572h1v8h-1zM692 530h1v22h-1zM710 552h2v28h-2zM758 530h1v22h-1zM855 522h2v30h-2zM898 526h2v26h-2zM944 552h1v28h-1zM1034 530h1v18h-1zM1041 545h1v7h-1z"/>
<path fill="#0a23c8" shape-rendering="crispEdges" d="M134 530h1v22h-1zM157 545h2v7h-2zM335 530h2v22h-2zM513 570h1v10h-1zM535 552h1v16h-1zM626 552h2v28h-2zM646 552h1v28h-1zM692 552h1v28h-1zM726 562h1v18h-1zM802 566h1v2h-1zM803 552h1v28h-1zM837 557h1v23h-1zM1044 568h1v12h-1z"/>
<path fill="#0523af" shape-rendering="crispEdges" d="M135 552h1v20h-1zM269 552h1v28h-1zM344 570h1v10h-1zM369 545h1v7h-1zM464 530h1v22h-1zM569 518h2v8h-2zM664 566h1v14h-1zM676 557h1v23h-1zM745 530h2v22h-2zM817 530h2v22h-2zM855 552h2v28h-2zM964 541h1v11h-1z"/>
<path fill="#1214c8" shape-rendering="crispEdges" d="M138 526h2v26h-2zM195 541h1v11h-1zM527 552h1v28h-1zM836 552h1v28h-1zM864 557h2v11h-2zM897 545h1v7h-1zM910 566h1v14h-1zM919 530h1v22h-1z"/>
<path fill="#1208dc" shape-rendering="crispEdges" d="M141 526h1v26h-1zM385 518h1v8h-1zM556 522h1v30h-1zM592 552h1v28h-1zM649 518h1v8h-1zM679 536h2v16h-2zM697 526h2v26h-2zM740 541h2v11h-2zM745 566h1v14h-1zM778 566h1v14h-1zM905 552h1v28h-1zM920 536h1v16h-1zM1033 552h1v28h-1z"/>
<path fill="#1950e1" shape-rendering="crispEdges" d="M144 568h1v12h-1zM703 575h2v5h-2zM821 552h1v28h-1z"/>
<path fill="#1223eb" shape-rendering="crispEdges" d="M145 572h1v8h-1zM218 530h1v22h-1zM438 526h2v26h-2zM653 552h1v28h-1zM683 526h2v26h-2zM861 562h1v18h-1zM893 566h1v14h-1zM994 536h2v16h-2zM1016 545h1v7h-1zM1051 530h1v11h-1z"/>
<path fill="#0a08dc" shape-rendering="crispEdges" d="M156 530h1v22h-1zM263 530h1v22h-1zM561 541h1v11h-1zM652 514h1v8h-1zM707 530h2v22h-2zM722 572h1v8h-1zM780 536h2v16h-2zM787 530h1v11h-1zM880 572h1v8h-1zM963 570h1v10h-1zM980 541h1v11h-1zM1070 530h2v22h-2z"/>
<path fill="#0a14c8" shape-rendering="crispEdges" d="M164 526h2v26h-2zM289 552h1v28h-1zM306 552h1v28h-1zM465 522h1v30h-1zM604 530h2v22h-2zM662 530h1v22h-1zM693 536h1v9h-1zM808 518h1v8h-1zM906 552h1v16h-1zM935 514h1v8h-1zM984 541h2v11h-2zM1046 530h1v22h-1z"/>
<path fill="#192df8" shape-rendering="crispEdges" d="M169 526h2v26h-2zM221 552h1v28h-1zM507 522h1v30h-1zM534 530h1v22h-1zM874 557h1v23h-1z"/>
<path fill="#1214af" shape-rendering="crispEdges" d="M173 530h2v11h-2zM183 545h2v7h-2zM375 530h1v22h-1zM391 526h2v26h-2zM477 552h1v28h-1zM524 536h2v16h-2zM780 557h2v23h-2zM799 557h1v23h-1zM959 541h1v11h-1zM975 575h1v5h-1z"/>
<path fill="#1223dc" shape-rendering="crispEdges" d="M186 557h1v23h-1zM297 552h1v28h-1zM313 526h1v26h-1zM378 557h1v23h-1zM387 562h1v18h-1zM558 575h2v5h-2z"/>
<path fill="#0f50f0" shape-rendering="crispEdges" d="M194 530h1v22h-1zM250 522h1v26h-1zM494 570h1v10h-1zM709 545h1v7h-1zM923 526h1v26h-1zM1058 545h2v7h-2z"/>
<path fill="#0508dc" shape-rendering="crispEdges" d="M199 545h1v7h-1zM219 572h2v8h-2zM394 572h2v8h-2zM466 562h1v18h-1zM712 552h1v28h-1zM1009 536h1v16h-1z"/>
<path fill="#1223c8" shape-rendering="crispEdges" d="M200 552h1v28h-1zM408 552h1v28h-1zM435 552h2v28h-2zM648 570h1v10h-1zM658 530h2v22h-2zM729 522h2v30h-2zM802 541h1v11h-1zM840 530h1v22h-1zM928 536h1v5h-1zM928 518h1v8h-1zM947 562h1v18h-1zM979 536h1v16h-1z"/>
<path fill="#193ce1" shape-rendering="crispEdges" d="M204 568h1v12h-1zM606 557h2v5h-2zM900 545h1v7h-1zM950 530h2v22h-2z"/>
<path fill="#0508eb" shape-rendering="crispEdges" d="M208 536h1v16h-1zM277 545h2v7h-2zM343 541h1v11h-1zM603 566h1v14h-1zM821 530h1v22h-1zM999 557h1v23h-1z"/>
<path fill="#0a23dc" shape-rendering="crispEdges" d="M215 536h1v5h-1zM492 572h1v8h-1zM501 526h2v26h-2zM520 541h2v11h-2zM702 575h1v5h-1zM854 552h1v28h-1zM1010 526h2v26h-2z"/>
<path fill="#0a08af" shape-rendering="crispEdges" d="M217 572h1v8h-1zM486 552h1v10h-1zM616 572h2v8h-2zM727 557h1v5h-1zM768 552h1v28h-1zM902 572h1v8h-1zM952 541h2v11h-2zM1025 526h2v26h-2zM1056 562h1v18h-1z"/>
<path fill="#1208eb" shape-rendering="crispEdges" d="M217 536h1v12h-1zM237 522h2v30h-2zM398 552h1v28h-1zM402 536h2v16h-2zM425 530h1v22h-1zM514 552h1v28h-1zM557 541h1v11h-1zM836 530h1v22h-1zM989 552h1v28h-1z"/>
<path fill="#1964f0" shape-rendering="crispEdges" d="M230 568h1v12h-1zM235 552h2v28h-2zM526 570h1v10h-1zM743 557h1v23h-1zM805 552h1v10h-1zM936 541h1v11h-1zM1043 536h1v16h-1z"/>
<path fill="#142df0" shape-rendering="crispEdges" d="M243 530h2v15h-2zM670 570h2v10h-2zM723 572h1v8h-1z"/>
<path fill="#192de1" shape-rendering="crispEdges" d="M254 572h1v8h-1zM363 522h1v30h-1zM462 557h1v15h-1zM487 562h1v18h-1zM488 545h1v7h-1zM546 541h1v11h-1zM721 536h1v16h-1z"/>
<path fill="#0f3cf8" shape-rendering="crispEdges" d="M257 536h1v16h-1zM857 557h1v23h-1z"/>
<path fill="#0514c8" shape-rendering="crispEdges" d="M280 522h2v19h-2zM339 514h1v8h-1zM601 522h2v23h-2zM642 562h1v18h-1zM644 522h1v30h-1zM737 557h1v23h-1zM808 530h1v22h-1zM932 522h1v30h-1z"/>
<path fill="#0a14eb" shape-rendering="crispEdges" d="M289 530h1v22h-1zM882 518h1v8h-1zM942 552h1v10h-1z"/>
<path fill="#0a14af" shape-rendering="crispEdges" d="M298 526h1v26h-1zM310 514h1v8h-1zM404 570h1v10h-1zM475 552h1v28h-1zM757 530h1v15h-1zM888 545h2v7h-2z"/>
<path fill="#142de1" shape-rendering="crispEdges" d="M304 536h2v5h-2zM475 530h1v22h-1zM539 562h1v18h-1zM624 526h1v26h-1zM694 541h2v11h-2zM826 575h1v5h-1zM957 552h1v28h-1z"/>
<path fill="#0a08c8" shape-rendering="crispEdges" d="M321 530h2v22h-2zM398 518h1v8h-1zM413 570h1v10h-1zM895 552h1v28h-1zM921 557h1v23h-1zM957 514h2v8h-2z"/>
<path fill="#0514dc" shape-rendering="crispEdges" d="M326 552h2v28h-2zM409 566h1v14h-1zM423 552h1v28h-1zM429 552h1v28h-1zM429 518h1v8h-1zM552 570h1v10h-1zM552 530h1v22h-1zM739 572h1v8h-1zM820 536h1v16h-1zM961 552h1v28h-1z"/>
<path fill="#0f3cf0" shape-rendering="crispEdges" d="M330 552h1v28h-1zM406 552h1v28h-1zM911 570h1v10h-1zM1039 536h1v12h-1z"/>
<path fill="#0523dc" shape-rendering="crispEdges" d="M333 536h2v16h-2zM473 572h1v8h-1zM497 552h1v28h-1zM620 530h1v22h-1z"/>
<path fill="#1ebe67" shape-rendering="crispEdges" d="M334 636h1v6h-1zM335 630h2v6h-2zM340 624h2v6h-2zM348 630h2v6h-2zM363 636h1v6h-1zM365 642h1v6h-1zM387 636h2v6h-2zM396 648h1v5h-1zM403 624h2v6h-2zM406 624h1v6h-1zM409 618h1v6h-1zM424 636h1v6h-1zM434 636h1v6h-1zM446 648h2v5h-2zM448 642h3v6h-3zM454 648h1v5h-1zM466 636h1v6h-1zM466 624h1v6h-1zM468 618h1v6h-1zM471 618h1v6h-1zM501 636h3v6h-3zM513 630h1v6h-1zM521 618h1v6h-1zM523 618h2v6h-2zM527 618h1v6h-1zM528 618h1v6h-1zM535 636h1v6h-1zM542 624h3v6h-3zM561 618h1v6h-1zM570 618h1v6h-1zM572 618h1v6h-1zM576 618h1v6h-1zM596 618h1v6h-1zM600 618h2v6h-2zM602 618h1v6h-1zM606 618h1v6h-1zM620 636h1v6h-1zM623 624h1v6h-1zM624 636h2v6h-2zM633 636h2v6h-2zM641 624h1v6h-1zM649 630h2v6h-2zM665 630h2v6h-2zM665 624h2v6h-2zM669 624h2v6h-2zM687 648h1v5h-1zM710 648h2v5h-2zM720 659h2v5h-2zM720 653h2v6h-2zM730 648h1v5h-1zM730 642h1v6h-1zM788 653h1v6h-1zM793 653h3v6h-3zM797 653h1v6h-1zM806 653h3v6h-3zM809 653h2v6h-2zM816 653h2v6h-2zM822 648h1v5h-1zM823 653h1v6h-1zM824 642h3v6h-3zM837 653h3v6h-3zM859 648h2v5h-2zM885 642h3v6h-3zM892 642h1v6h-1zM896 642h1v6h-1zM909 636h1v6h-1zM910 630h1v6h-1zM912 642h1v6h-1zM914 642h1v6h-1zM926 648h1v5h-1zM933 653h2v6h-2zM940 653h2v6h-2zM954 630h3v6h-3zM957 630h2v6h-2zM959 642h1v6h-1zM965 636h2v6h-2zM973 642h2v6h-2zM977 653h2v6h-2zM977 648h2v5h-2zM981 659h2v5h-2zM985 653h2v6h-2z"/>
<path fill="#10b07b" shape-rendering="crispEdges" d="M334 630h1v6h-1zM334 618h1v6h-1zM335 618h1v6h-1zM351 612h1v6h-1zM352 612h1v6h-1zM357 630h2v6h-2zM363 624h1v6h-1zM365 630h1v6h-1zM365 624h1v6h-1zM371 618h1v6h-1zM379 624h1v6h-1zM398 612h1v6h-1zM411 612h1v6h-1zM416 624h1v6h-1zM424 624h1v6h-1zM429 624h2v6h-2zM434 618h1v6h-1zM438 630h2v6h-2zM446 636h2v6h-2zM448 624h3v6h-3zM454 636h1v6h-1zM459 618h1v6h-1zM468 612h1v6h-1zM474 618h1v6h-1zM477 618h1v6h-1zM477 612h1v6h-1zM484 618h1v6h-1zM485 612h1v6h-1zM493 624h1v6h-1zM498 612h2v6h-2zM501 624h3v6h-3zM504 618h2v6h-2zM509 630h1v6h-1zM513 618h1v6h-1zM523 612h2v6h-2zM525 612h1v6h-1zM535 624h1v6h-1zM539 618h1v6h-1zM541 618h1v6h-1zM557 630h1v6h-1zM561 612h1v6h-1zM562 612h1v6h-1zM566 612h1v6h-1zM570 612h1v6h-1zM572 612h1v6h-1zM573 612h1v6h-1zM576 612h1v6h-1zM577 612h1v6h-1zM598 605h2v7h-2zM608 618h1v6h-1zM616 618h1v6h-1zM620 624h1v6h-1zM623 618h1v6h-1zM624 624h2v6h-2zM631 612h1v6h-1zM633 630h2v6h-2zM640 624h1v6h-1zM641 618h1v6h-1zM646 612h1v6h-1zM649 618h1v6h-1zM665 618h1v6h-1zM688 642h1v6h-1zM699 648h1v5h-1zM699 642h1v6h-1zM702 636h3v6h-3zM702 624h3v6h-3zM730 636h1v6h-1zM730 630h1v6h-1zM751 648h2v5h-2zM751 642h2v6h-2zM755 653h1v6h-1zM758 642h1v6h-1zM789 648h2v5h-2zM793 648h3v5h-3zM797 648h1v5h-1zM798 636h1v6h-1zM802 636h2v6h-2zM805 642h1v6h-1zM820 642h1v6h-1zM823 642h1v6h-1zM824 636h3v6h-3zM824 624h3v6h-3zM837 642h3v6h-3zM843 636h1v6h-1zM846 630h3v6h-3zM846 624h3v6h-3zM859 624h2v6h-2zM862 624h1v6h-1zM868 642h2v6h-2zM883 630h1v6h-1zM883 624h1v6h-1zM892 630h1v6h-1zM900 624h1v6h-1zM905 624h3v6h-3zM910 618h1v6h-1zM911 624h1v6h-1zM912 630h1v6h-1zM914 624h1v6h-1zM915 624h1v6h-1zM924 642h2v6h-2zM931 642h2v6h-2zM936 642h3v6h-3zM942 642h1v6h-1zM954 618h3v6h-3zM957 624h2v6h-2zM957 618h1v6h-1zM959 630h1v6h-1zM960 630h2v6h-2zM960 624h2v6h-2zM965 624h2v6h-2zM965 618h1v6h-1zM969 624h3v6h-3zM973 630h2v6h-2zM979 642h2v6h-2zM985 648h2v5h-2z"/>
<path fill="#15b573" shape-rendering="crispEdges" d="M334 624h1v6h-1zM348 618h1v6h-1zM357 624h2v6h-2zM363 630h1v6h-1zM365 636h1v6h-1zM376 636h2v6h-2zM376 630h2v6h-2zM378 624h1v6h-1zM379 630h1v6h-1zM399 612h1v6h-1zM406 618h1v6h-1zM408 612h1v6h-1zM409 612h1v6h-1zM411 618h1v6h-1zM414 624h2v6h-2zM429 630h2v6h-2zM434 630h1v6h-1zM434 624h1v6h-1zM441 630h1v6h-1zM446 642h2v6h-2zM448 636h3v6h-3zM454 642h1v6h-1zM483 618h1v6h-1zM484 624h1v6h-1zM493 630h1v6h-1zM494 612h1v6h-1zM504 630h2v6h-2zM513 624h1v6h-1zM514 636h2v6h-2zM514 624h2v6h-2zM528 612h2v6h-2zM541 624h1v6h-1zM542 618h3v6h-3zM564 612h1v6h-1zM596 612h1v6h-1zM598 612h1v6h-1zM600 612h2v6h-2zM611 630h1v6h-1zM611 624h1v6h-1zM620 630h1v6h-1zM624 630h2v6h-2zM626 624h1v6h-1zM640 630h1v6h-1zM669 618h1v6h-1zM687 642h1v6h-1zM688 648h1v5h-1zM702 642h3v6h-3zM710 642h2v6h-2zM716 648h1v5h-1zM720 648h2v5h-2zM730 624h1v6h-1zM738 642h1v6h-1zM749 648h1v5h-1zM755 659h1v5h-1zM776 659h2v5h-2zM788 648h1v5h-1zM789 653h2v6h-2zM816 648h2v5h-2zM822 642h1v6h-1zM829 648h1v5h-1zM859 636h2v6h-2zM874 653h2v6h-2zM882 636h1v6h-1zM888 630h1v6h-1zM888 624h1v6h-1zM892 636h1v6h-1zM899 636h1v6h-1zM899 624h1v6h-1zM912 636h1v6h-1zM914 636h1v6h-1zM931 648h2v5h-2zM933 642h2v6h-2zM940 648h2v5h-2zM960 636h2v6h-2zM962 630h1v6h-1zM965 630h2v6h-2zM969 630h3v6h-3zM981 653h2v6h-2zM981 648h2v5h-2z"/>
<path fill="#079d9c" shape-rendering="crispEdges" d="M334 612h1v6h-1zM346 612h1v6h-1zM351 598h1v7h-1zM357 612h1v6h-1zM363 612h1v6h-1zM365 612h1v6h-1zM371 605h1v7h-1zM406 605h1v7h-1zM408 598h1v7h-1zM409 598h1v7h-1zM414 612h2v6h-2zM419 612h1v6h-1zM438 612h1v6h-1zM494 598h1v7h-1zM497 605h1v7h-1zM513 605h1v7h-1zM514 612h2v6h-2zM521 598h1v7h-1zM528 598h1v7h-1zM539 605h1v7h-1zM542 605h3v7h-3zM547 612h2v6h-2zM567 598h1v7h-1zM596 598h1v7h-1zM620 612h1v6h-1zM623 605h1v7h-1zM629 605h1v7h-1zM640 612h1v6h-1zM641 605h1v7h-1zM643 598h1v7h-1zM649 605h2v7h-2zM665 605h1v7h-1zM669 605h1v7h-1zM688 630h1v6h-1zM688 618h1v6h-1zM699 630h1v6h-1zM707 618h1v6h-1zM710 618h1v6h-1zM712 630h1v6h-1zM712 618h1v6h-1zM720 636h2v6h-2zM749 630h1v6h-1zM749 618h1v6h-1zM755 642h1v6h-1zM758 630h1v6h-1zM758 618h1v6h-1zM789 636h2v6h-2zM792 618h1v6h-1zM806 630h3v6h-3zM806 618h1v6h-1zM809 636h2v6h-2zM813 618h1v6h-1zM820 618h1v6h-1zM822 630h1v6h-1zM830 618h1v6h-1zM831 612h1v6h-1zM837 618h3v6h-3zM842 618h1v6h-1zM846 612h3v6h-3zM859 618h2v6h-2zM868 618h2v6h-2zM873 630h1v6h-1zM883 612h1v6h-1zM885 612h3v6h-3zM892 612h1v6h-1zM897 612h2v6h-2zM903 612h1v6h-1zM910 605h1v7h-1zM912 612h1v6h-1zM924 636h2v6h-2zM931 630h2v6h-2zM933 630h2v6h-2zM933 618h1v6h-1zM936 618h3v6h-3zM942 630h1v6h-1zM952 612h1v6h-1zM960 612h2v6h-2zM965 612h1v6h-1zM979 618h1v6h-1z"/>
<path fill="#0594ad" shape-rendering="crispEdges" d="M334 605h1v7h-1zM346 605h1v7h-1zM355 605h1v7h-1zM357 605h1v7h-1zM371 598h1v7h-1zM376 612h2v6h-2zM379 605h1v7h-1zM380 612h1v6h-1zM399 592h2v6h-2zM406 598h1v7h-1zM409 592h1v6h-1zM410 598h1v7h-1zM429 605h1v7h-1zM441 605h1v7h-1zM462 598h1v7h-1zM467 598h1v7h-1zM472 598h2v7h-2zM485 598h2v7h-2zM490 598h1v7h-1zM493 605h1v7h-1zM497 598h1v7h-1zM501 605h3v7h-3zM504 605h1v7h-1zM539 598h1v7h-1zM541 598h1v7h-1zM545 605h1v7h-1zM567 592h1v6h-1zM570 592h1v6h-1zM577 592h1v6h-1zM596 592h2v6h-2zM626 605h1v7h-1zM629 598h2v7h-2zM635 605h1v7h-1zM641 598h1v7h-1zM643 592h1v6h-1zM665 598h1v7h-1zM669 598h1v7h-1zM676 598h1v7h-1zM720 630h2v6h-2zM720 618h2v6h-2zM730 605h1v7h-1zM756 612h1v6h-1zM758 612h1v6h-1zM762 612h3v6h-3zM793 618h1v6h-1zM797 612h1v6h-1zM806 612h1v6h-1zM813 612h1v6h-1zM820 612h1v6h-1zM823 612h1v6h-1zM824 612h1v6h-1zM852 605h1v7h-1zM868 612h2v6h-2zM873 612h1v6h-1zM878 612h2v6h-2zM883 605h1v7h-1zM885 605h1v7h-1zM888 605h1v7h-1zM897 605h1v7h-1zM905 605h1v7h-1zM910 598h1v7h-1zM911 598h1v7h-1zM914 605h1v7h-1zM924 618h1v6h-1zM933 612h2v6h-2zM965 605h1v7h-1zM969 605h1v7h-1zM973 612h1v6h-1zM979 612h2v6h-2zM985 618h2v6h-2z"/>
<path fill="#0888c5" shape-rendering="crispEdges" d="M334 598h1v7h-1zM354 598h1v7h-1zM357 598h2v7h-2zM359 592h1v6h-1zM409 586h1v6h-1zM426 598h2v7h-2zM448 598h1v7h-1zM469 592h2v6h-2zM472 592h2v6h-2zM474 592h1v6h-1zM490 592h1v6h-1zM494 586h1v6h-1zM514 598h1v7h-1zM541 592h1v6h-1zM557 598h1v7h-1zM561 586h1v6h-1zM570 586h1v6h-1zM576 586h1v6h-1zM577 586h1v6h-1zM596 586h2v6h-2zM616 592h1v6h-1zM626 598h1v7h-1zM629 592h1v6h-1zM631 586h1v6h-1zM641 592h1v6h-1zM643 586h1v6h-1zM665 592h2v6h-2zM679 592h1v6h-1zM688 605h1v7h-1zM702 598h3v7h-3zM755 612h1v6h-1zM771 605h1v7h-1zM781 605h3v7h-3zM789 605h1v7h-1zM793 605h1v7h-1zM798 598h1v7h-1zM813 605h1v7h-1zM814 605h2v7h-2zM822 598h1v7h-1zM824 598h3v7h-3zM830 605h1v7h-1zM831 605h1v7h-1zM837 605h1v7h-1zM846 598h3v7h-3zM873 605h1v7h-1zM878 605h1v7h-1zM883 598h1v7h-1zM885 598h1v7h-1zM901 605h1v7h-1zM901 598h1v7h-1zM903 598h1v7h-1zM915 598h1v7h-1zM933 605h1v7h-1zM959 598h1v7h-1zM965 598h1v7h-1zM973 598h2v7h-2zM981 605h1v7h-1zM985 605h2v7h-2zM987 605h1v7h-1z"/>
<path fill="#0b7fd5" shape-rendering="crispEdges" d="M334 592h1v6h-1zM352 580h2v6h-2zM354 592h1v6h-1zM355 598h1v7h-1zM357 592h2v6h-2zM365 592h1v6h-1zM379 592h1v6h-1zM387 592h1v6h-1zM399 580h1v6h-1zM408 580h1v6h-1zM410 580h1v6h-1zM426 592h1v6h-1zM434 592h1v6h-1zM441 592h1v6h-1zM448 592h1v6h-1zM474 586h1v6h-1zM477 586h1v6h-1zM477 580h1v6h-1zM485 580h2v6h-2zM487 580h1v6h-1zM514 592h1v6h-1zM546 592h1v6h-1zM557 592h1v6h-1zM562 580h1v6h-1zM572 580h1v6h-1zM576 580h1v6h-1zM596 580h2v6h-2zM619 592h1v6h-1zM626 592h1v6h-1zM629 586h2v6h-2zM631 580h1v6h-1zM665 586h1v6h-1zM668 586h1v6h-1zM669 586h1v6h-1zM687 598h1v7h-1zM697 598h1v7h-1zM712 598h1v7h-1zM733 598h1v7h-1zM760 605h1v7h-1zM781 598h1v7h-1zM792 598h1v7h-1zM809 605h2v7h-2zM814 598h1v7h-1zM823 598h1v7h-1zM831 598h1v7h-1zM868 598h1v7h-1zM893 598h3v7h-3zM903 592h1v6h-1zM910 586h1v6h-1zM911 586h1v6h-1zM939 598h1v7h-1zM957 586h1v6h-1zM981 598h1v7h-1z"/>
<path fill="#0f6ee4" shape-rendering="crispEdges" d="M334 586h1v6h-1zM354 586h1v6h-1zM363 580h1v6h-1zM365 580h1v6h-1zM366 586h1v6h-1zM376 586h1v6h-1zM387 580h1v6h-1zM412 580h1v6h-1zM419 586h1v6h-1zM424 586h1v6h-1zM426 586h1v6h-1zM428 580h1v6h-1zM434 580h1v6h-1zM441 580h1v6h-1zM444 586h1v6h-1zM448 586h3v6h-3zM480 580h1v6h-1zM493 586h1v6h-1zM545 580h1v6h-1zM616 580h1v6h-1zM619 580h1v6h-1zM620 580h1v6h-1zM626 586h1v6h-1zM641 580h1v6h-1zM654 586h1v6h-1zM660 580h2v6h-2zM668 580h1v6h-1zM687 586h1v6h-1zM688 592h1v6h-1zM702 586h1v6h-1zM710 586h2v6h-2zM720 592h1v6h-1zM733 592h1v6h-1zM733 586h1v6h-1zM778 592h3v6h-3zM781 592h3v6h-3zM798 586h1v6h-1zM802 586h2v6h-2zM814 592h1v6h-1zM831 586h1v6h-1zM837 592h3v6h-3zM859 586h2v6h-2zM861 586h1v6h-1zM892 586h1v6h-1zM893 586h3v6h-3zM912 586h1v6h-1zM915 586h1v6h-1zM933 592h1v6h-1zM957 580h1v6h-1zM979 592h1v6h-1zM981 592h2v6h-2z"/>
<path fill="#1168e9" shape-rendering="crispEdges" d="M334 580h1v6h-1zM368 580h1v6h-1zM372 586h1v6h-1zM397 586h1v6h-1zM424 580h1v6h-1zM429 580h2v6h-2zM446 586h1v6h-1zM448 580h1v6h-1zM462 580h1v6h-1zM474 580h1v6h-1zM534 586h1v6h-1zM626 580h1v6h-1zM688 586h1v6h-1zM702 580h1v6h-1zM707 592h1v6h-1zM707 586h1v6h-1zM712 586h1v6h-1zM730 580h1v6h-1zM748 592h1v6h-1zM756 592h2v6h-2zM762 586h3v6h-3zM811 592h1v6h-1zM830 586h1v6h-1zM837 586h1v6h-1zM840 586h1v6h-1zM850 580h2v6h-2zM853 586h1v6h-1zM855 586h1v6h-1zM868 586h1v6h-1zM897 580h2v6h-2zM901 586h1v6h-1zM903 586h1v6h-1zM912 580h1v6h-1zM952 586h1v6h-1zM979 586h1v6h-1zM987 592h1v6h-1zM987 586h1v6h-1z"/>
<path fill="#f79805" shape-rendering="crispEdges" d="M335 685h2v5h-2zM337 685h1v5h-1zM338 685h2v5h-2zM340 685h2v5h-2zM348 685h2v5h-2zM360 685h1v5h-1zM371 685h1v5h-1zM373 685h3v5h-3zM399 685h2v5h-2zM403 685h2v5h-2zM405 685h1v5h-1zM408 685h1v5h-1zM410 685h1v5h-1zM411 685h1v5h-1zM434 685h1v5h-1zM437 685h1v5h-1zM459 685h1v5h-1zM462 685h1v5h-1zM463 685h2v5h-2zM467 685h1v5h-1zM468 685h1v5h-1zM472 685h2v5h-2zM483 685h1v5h-1zM490 685h1v5h-1zM491 685h1v5h-1zM495 685h2v5h-2zM498 685h2v5h-2zM519 685h2v5h-2zM521 685h1v5h-1zM527 685h1v5h-1zM536 685h1v5h-1zM540 685h1v5h-1zM542 685h3v5h-3zM555 685h1v5h-1zM558 685h1v5h-1zM559 685h2v5h-2zM566 685h1v5h-1zM568 685h2v5h-2zM571 680h1v5h-1zM571 676h1v4h-1zM572 685h1v5h-1zM576 685h1v5h-1zM594 685h2v5h-2zM596 685h2v5h-2zM603 685h3v5h-3zM608 685h2v5h-2zM639 685h1v5h-1zM641 685h1v5h-1zM649 685h2v5h-2zM660 685h2v5h-2zM662 685h1v5h-1zM665 685h2v5h-2zM679 685h1v5h-1zM905 685h3v5h-3zM960 685h2v5h-2z"/>
<path fill="#ebc009" shape-rendering="crispEdges" d="M335 680h2v5h-2zM340 680h2v5h-2zM350 680h1v5h-1zM351 680h1v5h-1zM352 680h2v5h-2zM354 685h1v5h-1zM359 680h1v5h-1zM360 680h1v5h-1zM364 685h1v5h-1zM391 680h2v5h-2zM396 685h1v5h-1zM399 676h2v4h-2zM407 676h1v4h-1zM409 676h1v4h-1zM419 685h1v5h-1zM425 685h1v5h-1zM429 685h2v5h-2zM431 680h1v5h-1zM440 685h1v5h-1zM446 685h2v5h-2zM455 685h3v5h-3zM459 680h1v5h-1zM460 680h2v5h-2zM467 680h1v5h-1zM472 680h2v5h-2zM477 680h3v5h-3zM483 680h1v5h-1zM487 680h1v5h-1zM487 676h1v4h-1zM490 680h1v5h-1zM491 680h1v5h-1zM495 680h2v5h-2zM516 685h3v5h-3zM521 680h1v5h-1zM522 680h1v5h-1zM525 676h2v4h-2zM534 685h1v5h-1zM537 680h2v5h-2zM540 680h1v5h-1zM542 680h3v5h-3zM557 685h1v5h-1zM558 680h1v5h-1zM559 680h2v5h-2zM561 676h1v4h-1zM564 680h1v5h-1zM564 676h1v4h-1zM566 680h1v5h-1zM567 676h1v4h-1zM568 676h2v4h-2zM570 676h1v4h-1zM571 670h1v6h-1zM572 676h1v4h-1zM574 676h2v4h-2zM577 676h2v4h-2zM594 680h2v5h-2zM608 680h2v5h-2zM610 680h1v5h-1zM624 685h2v5h-2zM635 685h2v5h-2zM639 680h1v5h-1zM643 676h1v4h-1zM655 685h1v5h-1zM679 680h1v5h-1zM687 685h1v5h-1zM693 685h2v5h-2zM702 685h3v5h-3zM716 685h1v5h-1zM720 685h2v5h-2zM735 685h1v5h-1zM749 685h1v5h-1zM758 685h1v5h-1zM774 685h2v5h-2zM788 685h1v5h-1zM789 685h2v5h-2zM804 685h1v5h-1zM806 685h3v5h-3zM822 685h1v5h-1zM824 685h3v5h-3zM827 685h2v5h-2zM837 685h3v5h-3zM876 685h2v5h-2zM899 685h1v5h-1zM911 680h1v5h-1zM912 685h1v5h-1zM913 685h1v5h-1zM918 685h1v5h-1zM924 685h2v5h-2zM926 685h1v5h-1zM933 685h2v5h-2zM936 685h3v5h-3zM942 685h1v5h-1zM945 685h1v5h-1zM952 685h2v5h-2zM954 680h3v5h-3zM957 680h2v5h-2zM967 680h2v5h-2z"/>
<path fill="#8fe61e" shape-rendering="crispEdges" d="M335 659h2v5h-2zM337 659h1v5h-1zM338 659h2v5h-2zM343 659h1v5h-1zM344 664h1v6h-1zM354 670h1v6h-1zM359 653h1v6h-1zM372 670h1v6h-1zM373 670h3v6h-3zM376 670h2v6h-2zM389 642h2v6h-2zM399 648h2v5h-2zM401 648h2v5h-2zM403 653h2v6h-2zM408 642h1v6h-1zM412 664h2v6h-2zM446 676h2v4h-2zM455 670h3v6h-3zM459 659h1v5h-1zM460 653h2v6h-2zM466 664h1v6h-1zM466 659h1v5h-1zM468 642h1v6h-1zM484 659h1v5h-1zM484 653h1v6h-1zM487 648h1v5h-1zM488 653h2v6h-2zM490 648h1v5h-1zM493 664h1v6h-1zM494 648h1v5h-1zM495 653h2v6h-2zM504 664h2v6h-2zM511 670h2v6h-2zM519 648h2v5h-2zM521 648h1v5h-1zM522 642h1v6h-1zM523 648h2v5h-2zM523 642h2v6h-2zM525 642h2v6h-2zM536 659h1v5h-1zM542 653h3v6h-3zM546 670h1v6h-1zM552 670h1v6h-1zM557 670h1v6h-1zM559 659h2v5h-2zM561 642h1v6h-1zM563 642h1v6h-1zM566 648h1v5h-1zM567 642h1v6h-1zM570 648h1v5h-1zM570 642h1v6h-1zM574 648h2v5h-2zM576 642h1v6h-1zM577 642h2v6h-2zM594 653h2v6h-2zM610 664h1v6h-1zM611 670h1v6h-1zM616 659h1v5h-1zM624 670h2v6h-2zM631 648h1v5h-1zM632 653h1v6h-1zM639 659h1v5h-1zM655 664h1v6h-1zM662 653h1v6h-1zM665 659h2v5h-2zM679 664h1v6h-1zM679 659h1v5h-1zM745 676h1v4h-1zM749 676h1v4h-1zM798 670h1v6h-1zM804 670h1v6h-1zM824 676h3v4h-3zM827 676h2v4h-2zM829 676h1v4h-1zM840 676h2v4h-2zM845 670h1v6h-1zM846 670h3v6h-3zM849 670h1v6h-1zM850 670h2v6h-2zM859 670h2v6h-2zM882 670h1v6h-1zM885 670h3v6h-3zM899 670h1v6h-1zM900 670h1v6h-1zM901 676h1v4h-1zM911 659h1v5h-1zM912 670h1v6h-1zM926 676h1v4h-1zM945 670h1v6h-1zM959 670h1v6h-1zM973 670h2v6h-2z"/>
<path fill="#60d937" shape-rendering="crispEdges" d="M335 653h2v6h-2zM335 648h2v5h-2zM345 664h1v6h-1zM348 642h2v6h-2zM352 642h2v6h-2zM355 664h2v6h-2zM359 642h1v6h-1zM365 653h1v6h-1zM371 648h1v5h-1zM373 659h3v5h-3zM376 659h2v5h-2zM387 659h2v5h-2zM397 659h1v5h-1zM399 636h2v6h-2zM409 630h1v6h-1zM425 664h1v6h-1zM455 659h3v5h-3zM459 648h1v5h-1zM460 648h2v5h-2zM466 648h1v5h-1zM472 648h2v5h-2zM485 642h2v6h-2zM488 642h2v6h-2zM495 642h2v6h-2zM498 636h2v6h-2zM501 653h3v6h-3zM521 636h1v6h-1zM523 636h2v6h-2zM525 636h2v6h-2zM527 636h1v6h-1zM549 664h3v6h-3zM559 648h2v5h-2zM562 642h1v6h-1zM564 630h1v6h-1zM570 636h1v6h-1zM572 636h1v6h-1zM573 636h1v6h-1zM577 630h2v6h-2zM594 642h2v6h-2zM600 630h2v6h-2zM606 630h2v6h-2zM614 648h2v5h-2zM616 653h1v6h-1zM624 659h2v5h-2zM639 653h1v6h-1zM640 659h1v5h-1zM641 653h1v6h-1zM649 653h2v6h-2zM660 648h2v5h-2zM668 648h1v5h-1zM673 648h3v5h-3zM684 664h1v6h-1zM688 670h1v6h-1zM689 676h1v4h-1zM699 670h1v6h-1zM700 676h2v4h-2zM702 664h3v6h-3zM712 670h1v6h-1zM738 670h1v6h-1zM751 670h2v6h-2zM761 670h1v6h-1zM774 670h2v6h-2zM789 676h2v4h-2zM805 670h1v6h-1zM806 670h3v6h-3zM809 676h2v4h-2zM822 670h1v6h-1zM822 664h1v6h-1zM824 664h3v6h-3zM829 670h1v6h-1zM837 670h3v6h-3zM845 664h1v6h-1zM850 664h2v6h-2zM859 664h2v6h-2zM876 670h2v6h-2zM885 659h3v5h-3zM888 664h1v6h-1zM888 659h1v5h-1zM903 664h1v6h-1zM910 648h1v5h-1zM911 653h1v6h-1zM912 664h1v6h-1zM914 664h1v6h-1zM933 670h2v6h-2zM940 676h2v4h-2zM954 648h3v5h-3zM957 648h2v5h-2zM960 653h2v6h-2zM965 659h2v5h-2zM969 659h3v5h-3z"/>
<path fill="#41d04b" shape-rendering="crispEdges" d="M335 642h2v6h-2zM340 630h2v6h-2zM344 648h1v5h-1zM351 630h1v6h-1zM355 659h2v5h-2zM371 636h1v6h-1zM376 653h2v6h-2zM378 648h1v5h-1zM387 648h2v5h-2zM398 636h1v6h-1zM411 636h1v6h-1zM424 648h1v5h-1zM426 659h2v5h-2zM438 659h2v5h-2zM438 653h2v6h-2zM440 659h1v5h-1zM441 648h1v5h-1zM459 642h1v6h-1zM460 642h2v6h-2zM472 642h2v6h-2zM477 630h3v6h-3zM481 636h2v6h-2zM484 642h1v6h-1zM485 636h2v6h-2zM492 630h1v6h-1zM493 653h1v6h-1zM494 636h1v6h-1zM513 642h1v6h-1zM523 630h2v6h-2zM527 630h1v6h-1zM528 630h2v6h-2zM545 648h1v5h-1zM559 642h2v6h-2zM565 630h1v6h-1zM566 630h1v6h-1zM567 630h1v6h-1zM594 636h2v6h-2zM608 642h2v6h-2zM611 653h1v6h-1zM620 648h1v5h-1zM623 642h1v6h-1zM627 653h2v6h-2zM631 630h1v6h-1zM633 653h2v6h-2zM640 653h1v6h-1zM641 642h1v6h-1zM649 648h2v5h-2zM649 642h2v6h-2zM665 642h2v6h-2zM667 636h1v6h-1zM668 642h1v6h-1zM669 642h2v6h-2zM687 664h1v6h-1zM687 659h1v5h-1zM688 664h1v6h-1zM696 664h1v6h-1zM700 670h2v6h-2zM702 653h3v6h-3zM730 653h1v6h-1zM738 664h1v6h-1zM751 664h2v6h-2zM761 664h1v6h-1zM774 664h2v6h-2zM788 664h1v6h-1zM797 664h1v6h-1zM798 659h1v5h-1zM804 659h1v5h-1zM806 664h3v6h-3zM809 670h2v6h-2zM820 664h1v6h-1zM824 659h3v5h-3zM827 664h2v6h-2zM840 659h2v5h-2zM843 659h1v5h-1zM843 653h1v6h-1zM846 653h3v6h-3zM868 664h2v6h-2zM874 670h2v6h-2zM876 664h2v6h-2zM882 659h1v5h-1zM885 653h3v6h-3zM896 653h1v6h-1zM899 653h1v6h-1zM900 653h1v6h-1zM909 653h1v6h-1zM909 648h1v5h-1zM910 642h1v6h-1zM911 648h1v5h-1zM912 659h1v5h-1zM912 653h1v6h-1zM913 648h1v5h-1zM924 670h2v6h-2zM924 664h2v6h-2zM926 664h1v6h-1zM926 659h1v5h-1zM936 664h3v6h-3zM942 664h1v6h-1zM965 648h2v5h-2zM969 648h3v5h-3zM973 653h2v6h-2zM975 659h2v5h-2zM977 659h2v5h-2z"/>
<path fill="#34cc53" shape-rendering="crispEdges" d="M335 636h2v6h-2zM348 636h2v6h-2zM352 630h2v6h-2zM363 648h1v5h-1zM368 642h3v6h-3zM376 648h2v5h-2zM387 642h2v6h-2zM398 630h1v6h-1zM403 636h2v6h-2zM411 630h1v6h-1zM421 648h1v5h-1zM425 659h1v5h-1zM429 648h2v5h-2zM434 648h1v5h-1zM438 648h2v5h-2zM446 653h2v6h-2zM448 653h3v6h-3zM448 648h3v5h-3zM454 653h1v6h-1zM459 636h1v6h-1zM466 642h1v6h-1zM469 636h2v6h-2zM475 648h2v5h-2zM483 636h1v6h-1zM484 636h1v6h-1zM488 630h2v6h-2zM493 648h1v5h-1zM498 630h2v6h-2zM501 648h3v5h-3zM504 642h2v6h-2zM513 648h1v5h-1zM549 653h3v6h-3zM549 648h3v5h-3zM559 636h2v6h-2zM594 630h2v6h-2zM596 624h2v6h-2zM608 636h2v6h-2zM619 648h1v5h-1zM624 648h2v5h-2zM633 648h2v5h-2zM639 642h1v6h-1zM660 642h2v6h-2zM669 636h2v6h-2zM673 642h3v6h-3zM673 636h3v6h-3zM689 664h1v6h-1zM699 664h1v6h-1zM700 664h2v6h-2zM702 659h3v5h-3zM710 659h2v5h-2zM712 659h1v5h-1zM715 664h1v6h-1zM715 659h1v5h-1zM716 664h1v6h-1zM749 659h1v5h-1zM755 676h1v4h-1zM758 664h1v6h-1zM761 659h1v5h-1zM785 664h2v6h-2zM792 664h1v6h-1zM804 653h1v6h-1zM805 664h1v6h-1zM805 659h1v5h-1zM822 659h1v5h-1zM845 653h1v6h-1zM859 659h2v5h-2zM859 653h2v6h-2zM876 659h2v5h-2zM882 653h1v6h-1zM882 648h1v5h-1zM883 653h1v6h-1zM883 648h1v5h-1zM888 653h1v6h-1zM905 642h3v6h-3zM911 642h1v6h-1zM933 664h2v6h-2zM940 664h2v6h-2zM942 659h1v5h-1zM952 659h2v5h-2zM957 642h2v6h-2zM959 653h1v6h-1zM962 648h1v5h-1zM985 664h2v6h-2z"/>
<path fill="#1aba6d" shape-rendering="crispEdges" d="M335 624h2v6h-2zM340 618h1v6h-1zM348 624h2v6h-2zM351 618h1v6h-1zM352 618h1v6h-1zM355 642h2v6h-2zM371 624h1v6h-1zM378 630h1v6h-1zM387 630h2v6h-2zM396 642h1v6h-1zM398 618h1v6h-1zM399 618h1v6h-1zM408 618h1v6h-1zM424 630h1v6h-1zM429 636h2v6h-2zM438 636h2v6h-2zM441 624h1v6h-1zM459 624h1v6h-1zM466 630h1v6h-1zM474 624h1v6h-1zM483 624h1v6h-1zM485 618h2v6h-2zM493 636h1v6h-1zM498 618h2v6h-2zM501 630h3v6h-3zM504 624h2v6h-2zM521 612h1v6h-1zM535 630h1v6h-1zM557 636h1v6h-1zM562 618h1v6h-1zM564 618h1v6h-1zM566 618h1v6h-1zM573 618h1v6h-1zM594 624h2v6h-2zM598 618h1v6h-1zM608 624h2v6h-2zM611 636h1v6h-1zM616 624h1v6h-1zM619 636h1v6h-1zM626 636h1v6h-1zM631 618h1v6h-1zM640 636h1v6h-1zM646 618h1v6h-1zM649 624h2v6h-2zM676 618h1v6h-1zM699 653h1v6h-1zM712 648h1v5h-1zM712 642h1v6h-1zM716 653h1v6h-1zM738 648h1v5h-1zM745 642h1v6h-1zM751 653h2v6h-2zM755 664h1v6h-1zM758 648h1v5h-1zM759 653h1v6h-1zM761 648h1v5h-1zM761 642h1v6h-1zM776 653h2v6h-2zM792 648h1v5h-1zM798 642h1v6h-1zM805 648h1v5h-1zM806 648h3v5h-3zM823 648h1v5h-1zM837 648h3v5h-3zM843 642h1v6h-1zM846 636h3v6h-3zM859 642h2v6h-2zM868 648h2v5h-2zM882 642h1v6h-1zM883 636h1v6h-1zM888 636h1v6h-1zM899 642h1v6h-1zM905 630h3v6h-3zM909 630h1v6h-1zM909 624h1v6h-1zM910 624h1v6h-1zM911 630h1v6h-1zM915 636h1v6h-1zM921 653h1v6h-1zM924 648h2v5h-2zM926 642h1v6h-1zM933 648h2v5h-2zM936 648h3v5h-3zM942 648h1v5h-1zM952 642h2v6h-2zM954 624h3v6h-3zM959 636h1v6h-1zM969 636h3v6h-3zM973 636h2v6h-2z"/>
<path fill="#e5cd0a" shape-rendering="crispEdges" d="M337 680h1v5h-1zM342 680h1v5h-1zM343 680h1v5h-1zM344 680h1v5h-1zM351 676h1v4h-1zM352 676h2v4h-2zM364 680h1v5h-1zM367 680h1v5h-1zM368 680h3v5h-3zM376 680h2v5h-2zM378 680h1v5h-1zM389 670h2v6h-2zM398 676h1v4h-1zM403 680h2v5h-2zM405 680h1v5h-1zM408 676h1v4h-1zM414 680h2v5h-2zM420 680h1v5h-1zM429 680h2v5h-2zM441 680h1v5h-1zM444 680h1v5h-1zM448 680h3v5h-3zM455 680h3v5h-3zM466 680h1v5h-1zM468 676h1v4h-1zM471 676h1v4h-1zM484 680h1v5h-1zM501 680h3v5h-3zM504 680h2v5h-2zM519 680h2v5h-2zM519 676h2v4h-2zM522 676h1v4h-1zM523 676h2v4h-2zM527 676h1v4h-1zM532 680h2v5h-2zM534 680h1v5h-1zM536 680h1v5h-1zM545 680h1v5h-1zM553 680h2v5h-2zM563 670h1v6h-1zM565 676h1v4h-1zM570 670h1v6h-1zM573 676h1v4h-1zM576 676h1v4h-1zM596 676h2v4h-2zM598 670h2v6h-2zM603 676h3v4h-3zM619 680h1v5h-1zM623 680h1v5h-1zM626 680h1v5h-1zM632 680h1v5h-1zM640 680h1v5h-1zM641 680h1v5h-1zM642 680h1v5h-1zM646 676h3v4h-3zM649 680h2v5h-2zM658 680h2v5h-2zM660 680h2v5h-2zM662 680h1v5h-1zM663 680h2v5h-2zM665 680h2v5h-2zM668 680h1v5h-1zM671 680h2v5h-2zM678 680h1v5h-1zM688 685h1v5h-1zM700 685h2v5h-2zM735 680h1v5h-1zM755 685h1v5h-1zM784 685h1v5h-1zM805 685h1v5h-1zM809 685h2v5h-2zM840 685h2v5h-2zM849 680h1v5h-1zM874 685h2v5h-2zM885 680h3v5h-3zM900 680h1v5h-1zM905 680h3v5h-3zM909 680h1v5h-1zM912 680h1v5h-1zM913 680h1v5h-1zM914 680h1v5h-1zM921 685h1v5h-1zM926 680h1v5h-1zM935 685h1v5h-1zM940 685h2v5h-2zM959 680h1v5h-1zM969 680h3v5h-3zM975 685h2v5h-2z"/>
<path fill="#d7e30a" shape-rendering="crispEdges" d="M337 676h1v4h-1zM340 670h2v6h-2zM351 670h1v6h-1zM351 664h1v6h-1zM352 670h2v6h-2zM359 676h1v4h-1zM360 676h1v4h-1zM398 670h1v6h-1zM401 670h2v6h-2zM403 676h2v4h-2zM407 670h1v6h-1zM409 664h1v6h-1zM410 670h1v6h-1zM459 676h1v4h-1zM468 670h1v6h-1zM469 676h2v4h-2zM472 676h2v4h-2zM481 670h2v6h-2zM484 676h1v4h-1zM485 670h2v6h-2zM490 676h1v4h-1zM521 670h1v6h-1zM525 670h2v6h-2zM527 670h1v6h-1zM537 676h2v4h-2zM561 670h1v6h-1zM561 664h1v6h-1zM562 670h1v6h-1zM563 664h1v6h-1zM564 664h1v6h-1zM566 670h1v6h-1zM570 664h1v6h-1zM576 670h1v6h-1zM577 664h2v6h-2zM594 676h2v4h-2zM596 664h2v6h-2zM602 664h1v6h-1zM608 676h2v4h-2zM632 676h1v4h-1zM654 680h1v5h-1zM660 676h2v4h-2zM665 676h2v4h-2zM687 680h1v5h-1zM700 680h2v5h-2zM716 680h1v5h-1zM758 680h1v5h-1zM761 680h1v5h-1zM785 680h2v5h-2zM805 680h1v5h-1zM809 680h2v5h-2zM942 680h1v5h-1z"/>
<path fill="#c4ed0a" shape-rendering="crispEdges" d="M337 670h1v6h-1zM337 664h1v6h-1zM338 670h2v6h-2zM342 676h1v4h-1zM391 670h2v6h-2zM401 659h2v5h-2zM403 670h2v6h-2zM408 653h1v6h-1zM409 653h1v6h-1zM410 664h1v6h-1zM411 664h1v6h-1zM412 676h2v4h-2zM431 670h1v6h-1zM468 659h1v5h-1zM483 670h1v6h-1zM484 670h1v6h-1zM493 676h1v4h-1zM494 659h1v5h-1zM495 664h2v6h-2zM498 664h2v6h-2zM498 659h2v5h-2zM501 676h3v4h-3zM504 676h2v4h-2zM522 653h1v6h-1zM553 676h2v4h-2zM558 670h1v6h-1zM564 653h1v6h-1zM566 659h1v5h-1zM572 659h1v5h-1zM572 653h1v6h-1zM577 653h2v6h-2zM596 659h2v5h-2zM596 653h2v6h-2zM603 659h3v5h-3zM608 670h2v6h-2zM610 676h1v4h-1zM614 670h2v6h-2zM619 676h1v4h-1zM623 670h1v6h-1zM631 659h1v5h-1zM642 670h1v6h-1zM643 659h1v5h-1zM655 676h1v4h-1zM660 670h2v6h-2zM663 670h2v6h-2zM668 670h1v6h-1zM676 670h1v6h-1zM730 676h1v4h-1zM913 676h1v4h-1zM965 676h2v4h-2zM969 676h3v4h-3z"/>
<path fill="#7fe225" shape-rendering="crispEdges" d="M337 653h1v6h-1zM340 648h2v5h-2zM340 642h2v6h-2zM344 659h1v5h-1zM345 670h1v6h-1zM351 642h1v6h-1zM355 670h2v6h-2zM357 670h2v6h-2zM363 664h1v6h-1zM373 664h3v6h-3zM387 664h2v6h-2zM398 648h1v5h-1zM403 648h2v5h-2zM405 659h1v5h-1zM426 670h2v6h-2zM431 653h1v6h-1zM446 670h2v6h-2zM454 670h1v6h-1zM459 653h1v6h-1zM472 653h2v6h-2zM477 648h3v5h-3zM481 653h2v6h-2zM481 648h2v5h-2zM483 653h1v6h-1zM485 648h2v5h-2zM487 642h1v6h-1zM495 648h2v5h-2zM498 642h2v6h-2zM501 664h3v6h-3zM507 664h2v6h-2zM522 636h1v6h-1zM559 653h2v6h-2zM562 648h1v5h-1zM564 636h1v6h-1zM565 648h1v5h-1zM565 642h1v6h-1zM572 642h1v6h-1zM573 642h1v6h-1zM574 642h2v6h-2zM598 636h2v6h-2zM603 642h3v6h-3zM606 636h2v6h-2zM608 653h2v6h-2zM610 659h1v5h-1zM611 664h1v6h-1zM611 659h1v5h-1zM614 659h2v5h-2zM619 664h1v6h-1zM620 664h1v6h-1zM620 659h1v5h-1zM623 653h1v6h-1zM631 642h1v6h-1zM633 664h2v6h-2zM641 659h1v5h-1zM643 642h1v6h-1zM649 659h2v5h-2zM654 670h1v6h-1zM663 653h2v6h-2zM669 648h2v5h-2zM673 659h3v5h-3zM677 659h1v5h-1zM688 676h1v4h-1zM702 670h3v6h-3zM715 676h1v4h-1zM730 670h1v6h-1zM745 670h1v6h-1zM784 676h1v4h-1zM785 676h2v4h-2zM788 676h1v4h-1zM820 676h1v4h-1zM824 670h3v6h-3zM876 676h2v4h-2zM901 670h1v6h-1zM903 670h1v6h-1zM909 664h1v6h-1zM914 670h1v6h-1zM936 676h3v4h-3zM942 676h1v4h-1zM952 670h2v6h-2zM954 653h3v6h-3zM965 664h2v6h-2zM969 664h3v6h-3zM975 670h2v6h-2z"/>
<path fill="#9ee918" shape-rendering="crispEdges" d="M338 664h2v6h-2zM345 676h1v4h-1zM352 648h2v5h-2zM357 676h2v4h-2zM363 670h1v6h-1zM365 670h1v6h-1zM371 659h1v5h-1zM389 636h2v6h-2zM399 653h2v6h-2zM401 653h2v6h-2zM405 664h1v6h-1zM407 653h1v6h-1zM407 648h1v5h-1zM408 648h1v5h-1zM409 648h1v5h-1zM409 642h1v6h-1zM412 670h2v6h-2zM417 670h1v6h-1zM425 676h1v4h-1zM426 676h2v4h-2zM431 659h1v5h-1zM438 670h2v6h-2zM442 676h2v4h-2zM454 676h1v4h-1zM471 648h1v5h-1zM475 670h2v6h-2zM484 664h1v6h-1zM485 653h2v6h-2zM490 653h1v6h-1zM493 670h1v6h-1zM501 670h3v6h-3zM522 648h1v5h-1zM523 653h2v6h-2zM525 648h2v5h-2zM527 648h1v5h-1zM536 664h1v6h-1zM542 659h3v5h-3zM546 676h1v4h-1zM561 648h1v5h-1zM562 653h1v6h-1zM572 648h1v5h-1zM576 648h1v5h-1zM598 642h2v6h-2zM606 642h2v6h-2zM608 659h2v5h-2zM614 664h2v6h-2zM616 664h1v6h-1zM619 670h1v6h-1zM623 659h1v5h-1zM633 670h2v6h-2zM639 664h1v6h-1zM644 653h2v6h-2zM649 664h2v6h-2zM653 676h1v4h-1zM654 676h1v4h-1zM660 659h2v5h-2zM662 659h1v5h-1zM663 659h2v5h-2zM668 659h1v5h-1zM676 659h1v5h-1zM677 664h1v6h-1zM684 676h1v4h-1zM687 676h1v4h-1zM702 676h3v4h-3zM761 676h1v4h-1zM805 676h1v4h-1zM822 676h1v4h-1zM859 676h2v4h-2zM883 670h1v6h-1zM899 676h1v4h-1zM903 676h1v4h-1zM908 676h1v4h-1zM909 670h1v6h-1zM911 664h1v6h-1zM913 670h1v6h-1zM952 676h2v4h-2zM954 664h3v6h-3zM957 664h2v6h-2zM960 670h2v6h-2zM965 670h2v6h-2zM969 670h3v6h-3z"/>
<path fill="#0f3ce1" shape-rendering="crispEdges" d="M338 562h1v18h-1zM631 552h1v28h-1z"/>
<path fill="#e1d70a" shape-rendering="crispEdges" d="M340 676h2v4h-2zM348 680h2v5h-2zM357 680h2v5h-2zM363 680h1v5h-1zM365 680h1v5h-1zM373 680h3v5h-3zM379 680h1v5h-1zM397 680h1v5h-1zM401 676h2v4h-2zM409 670h1v6h-1zM410 676h1v4h-1zM412 680h2v5h-2zM426 680h2v5h-2zM434 680h1v5h-1zM446 680h2v5h-2zM452 680h1v5h-1zM475 680h2v5h-2zM477 676h3v4h-3zM480 680h1v5h-1zM488 676h2v4h-2zM491 676h1v4h-1zM494 676h1v4h-1zM495 676h2v4h-2zM498 676h2v4h-2zM511 680h2v5h-2zM513 680h1v5h-1zM521 676h1v4h-1zM522 670h1v6h-1zM546 680h1v5h-1zM557 680h1v5h-1zM566 676h1v4h-1zM567 670h1v6h-1zM571 664h1v6h-1zM571 659h1v5h-1zM574 670h2v6h-2zM577 670h2v6h-2zM614 680h2v5h-2zM616 680h1v5h-1zM620 680h1v5h-1zM621 680h2v5h-2zM627 680h2v5h-2zM631 676h1v4h-1zM633 680h2v5h-2zM653 680h1v5h-1zM655 680h1v5h-1zM677 680h1v5h-1zM702 680h3v5h-3zM730 680h1v5h-1zM745 680h1v5h-1zM751 680h2v5h-2zM774 680h2v5h-2zM788 680h1v5h-1zM802 680h2v5h-2zM806 680h3v5h-3zM820 680h1v5h-1zM824 680h3v5h-3zM827 680h2v5h-2zM829 680h1v5h-1zM850 680h2v5h-2zM859 680h2v5h-2zM876 680h2v5h-2zM883 680h1v5h-1zM899 680h1v5h-1zM901 680h1v5h-1zM903 680h1v5h-1zM908 680h1v5h-1zM918 680h1v5h-1zM924 680h2v5h-2zM945 680h1v5h-1zM965 680h2v5h-2zM973 680h2v5h-2zM975 680h2v5h-2z"/>
<path fill="#d1e60a" shape-rendering="crispEdges" d="M340 664h2v6h-2zM371 676h1v4h-1zM389 659h2v5h-2zM391 676h2v4h-2zM399 670h2v6h-2zM399 664h2v6h-2zM408 664h1v6h-1zM409 659h1v5h-1zM411 670h1v6h-1zM459 670h1v6h-1zM460 676h2v4h-2zM466 676h1v4h-1zM467 676h1v4h-1zM471 664h1v6h-1zM477 670h3v6h-3zM487 664h1v6h-1zM488 670h2v6h-2zM491 670h1v6h-1zM494 670h1v6h-1zM495 670h2v6h-2zM498 670h2v6h-2zM519 670h2v6h-2zM522 664h1v6h-1zM522 659h1v5h-1zM523 670h2v6h-2zM523 664h2v6h-2zM525 664h2v6h-2zM536 676h1v4h-1zM539 670h1v6h-1zM540 676h1v4h-1zM540 670h1v6h-1zM558 676h1v4h-1zM559 676h2v4h-2zM563 659h1v5h-1zM565 670h1v6h-1zM567 659h1v5h-1zM573 664h1v6h-1zM574 664h2v6h-2zM576 664h1v6h-1zM577 659h2v5h-2zM594 670h2v6h-2zM598 664h2v6h-2zM602 659h1v5h-1zM606 664h2v6h-2zM614 676h2v4h-2zM623 676h1v4h-1zM639 676h1v4h-1zM641 676h1v4h-1zM642 676h1v4h-1zM643 664h1v6h-1zM646 670h3v6h-3zM646 664h3v6h-3zM649 676h2v4h-2zM663 676h2v4h-2zM668 676h1v4h-1zM673 676h3v4h-3zM676 676h1v4h-1zM755 680h1v5h-1z"/>
<path fill="#bdf00a" shape-rendering="crispEdges" d="M340 659h2v5h-2zM343 670h1v6h-1zM344 670h1v6h-1zM360 670h1v6h-1zM365 676h1v4h-1zM371 664h1v6h-1zM373 676h3v4h-3zM389 648h2v5h-2zM398 659h1v5h-1zM399 659h2v5h-2zM403 664h2v6h-2zM405 670h1v6h-1zM417 676h1v4h-1zM438 676h2v4h-2zM441 676h1v4h-1zM452 676h1v4h-1zM455 676h3v4h-3zM458 676h1v4h-1zM459 664h1v6h-1zM466 670h1v6h-1zM471 659h1v5h-1zM471 653h1v6h-1zM474 670h1v6h-1zM475 676h2v4h-2zM477 659h3v5h-3zM480 676h1v4h-1zM481 664h2v6h-2zM485 664h2v6h-2zM487 659h1v5h-1zM490 664h1v6h-1zM491 659h1v5h-1zM511 676h2v4h-2zM519 659h2v5h-2zM525 659h2v5h-2zM527 659h1v5h-1zM527 653h1v6h-1zM552 676h1v4h-1zM557 676h1v4h-1zM559 670h2v6h-2zM559 664h2v6h-2zM561 653h1v6h-1zM565 659h1v5h-1zM566 653h1v6h-1zM570 653h1v6h-1zM573 653h1v6h-1zM576 653h1v6h-1zM594 664h2v6h-2zM598 648h2v5h-2zM610 670h1v6h-1zM611 676h1v4h-1zM616 670h1v6h-1zM624 676h2v4h-2zM632 664h1v6h-1zM633 676h2v4h-2zM639 670h1v6h-1zM641 670h1v6h-1zM641 664h1v6h-1zM642 664h1v6h-1zM644 664h2v6h-2zM646 659h3v5h-3zM660 664h2v6h-2zM662 664h1v6h-1zM668 664h1v6h-1zM673 670h3v6h-3zM676 664h1v6h-1zM679 670h1v6h-1zM850 676h2v4h-2zM900 676h1v4h-1zM909 676h1v4h-1zM911 670h1v6h-1zM954 670h3v6h-3zM960 676h2v4h-2zM975 676h2v4h-2z"/>
<path fill="#aeed11" shape-rendering="crispEdges" d="M340 653h2v6h-2zM343 664h1v6h-1zM351 648h1v5h-1zM352 659h2v5h-2zM352 653h2v6h-2zM354 676h1v4h-1zM359 664h1v6h-1zM367 670h1v6h-1zM368 670h3v6h-3zM372 676h1v4h-1zM376 676h2v4h-2zM391 664h2v6h-2zM396 676h1v4h-1zM397 676h1v4h-1zM398 653h1v6h-1zM403 659h2v5h-2zM411 659h1v5h-1zM431 664h1v6h-1zM441 670h1v6h-1zM448 676h3v4h-3zM460 664h2v6h-2zM460 659h2v5h-2zM472 659h2v5h-2zM474 664h1v6h-1zM477 653h3v6h-3zM481 659h2v5h-2zM485 659h2v5h-2zM487 653h1v6h-1zM488 659h2v5h-2zM490 659h1v5h-1zM491 653h1v6h-1zM494 653h1v6h-1zM495 659h2v5h-2zM498 653h2v6h-2zM504 670h2v6h-2zM519 653h2v6h-2zM521 653h1v6h-1zM536 670h1v6h-1zM562 659h1v5h-1zM564 648h1v5h-1zM565 653h1v6h-1zM567 648h1v5h-1zM574 653h2v6h-2zM577 648h2v5h-2zM594 659h2v5h-2zM603 653h3v6h-3zM603 648h3v5h-3zM608 664h2v6h-2zM623 664h1v6h-1zM626 676h1v4h-1zM631 653h1v6h-1zM632 659h1v5h-1zM643 653h1v6h-1zM643 648h1v5h-1zM644 659h2v5h-2zM646 653h3v6h-3zM655 670h1v6h-1zM663 664h2v6h-2zM673 664h3v6h-3zM677 670h1v6h-1zM802 676h2v4h-2zM804 676h1v4h-1zM845 676h1v4h-1zM846 676h3v4h-3zM849 676h1v4h-1zM882 676h1v4h-1zM883 676h1v4h-1zM885 676h3v4h-3zM905 670h3v6h-3zM905 664h3v6h-3zM912 676h1v4h-1zM914 676h1v4h-1zM945 676h1v4h-1zM957 670h2v6h-2zM959 676h1v4h-1zM973 676h2v4h-2z"/>
<path fill="#50d541" shape-rendering="crispEdges" d="M340 636h2v6h-2zM352 636h2v6h-2zM357 659h2v5h-2zM357 653h2v6h-2zM360 648h1v5h-1zM361 664h2v6h-2zM361 659h2v5h-2zM363 653h1v6h-1zM368 648h3v5h-3zM371 642h1v6h-1zM385 648h2v5h-2zM387 653h2v6h-2zM399 630h2v6h-2zM403 642h2v6h-2zM406 636h1v6h-1zM408 630h1v6h-1zM411 642h1v6h-1zM424 653h1v6h-1zM426 664h2v6h-2zM429 653h2v6h-2zM434 653h1v6h-1zM446 664h2v6h-2zM446 659h2v5h-2zM454 664h1v6h-1zM454 659h1v5h-1zM455 653h3v6h-3zM477 636h3v6h-3zM481 642h2v6h-2zM483 642h1v6h-1zM484 648h1v5h-1zM487 636h1v6h-1zM488 636h2v6h-2zM495 636h2v6h-2zM504 653h2v6h-2zM504 648h2v5h-2zM519 636h2v6h-2zM521 630h1v6h-1zM522 630h1v6h-1zM542 642h3v6h-3zM552 664h1v6h-1zM552 659h1v5h-1zM561 630h1v6h-1zM562 636h1v6h-1zM562 630h1v6h-1zM565 636h1v6h-1zM566 636h1v6h-1zM570 630h1v6h-1zM572 630h1v6h-1zM576 630h1v6h-1zM619 653h1v6h-1zM620 653h1v6h-1zM623 648h1v5h-1zM624 653h2v6h-2zM631 636h1v6h-1zM632 642h1v6h-1zM639 648h1v5h-1zM640 648h1v5h-1zM641 648h1v5h-1zM643 636h1v6h-1zM646 630h3v6h-3zM654 659h1v5h-1zM663 648h2v5h-2zM663 642h2v6h-2zM689 670h1v6h-1zM710 664h2v6h-2zM712 664h1v6h-1zM716 670h1v6h-1zM720 670h2v6h-2zM730 659h1v5h-1zM745 664h1v6h-1zM749 670h1v6h-1zM753 670h1v6h-1zM758 670h1v6h-1zM784 670h1v6h-1zM785 670h2v6h-2zM788 670h1v6h-1zM789 670h2v6h-2zM792 670h1v6h-1zM797 670h1v6h-1zM837 664h3v6h-3zM840 664h2v6h-2zM845 659h1v5h-1zM846 659h3v5h-3zM874 676h2v4h-2zM883 659h1v5h-1zM896 659h1v5h-1zM899 659h1v5h-1zM900 659h1v5h-1zM903 659h1v5h-1zM905 653h3v6h-3zM905 648h3v5h-3zM908 659h1v5h-1zM913 653h1v6h-1zM914 659h1v5h-1zM921 670h1v6h-1zM936 670h3v6h-3zM940 670h2v6h-2zM942 670h1v6h-1zM952 664h2v6h-2zM959 659h1v5h-1zM960 659h2v5h-2zM962 653h1v6h-1zM965 653h2v6h-2zM969 653h3v6h-3zM973 659h2v5h-2zM977 664h2v6h-2zM981 670h2v6h-2z"/>
<path fill="#0aaa82" shape-rendering="crispEdges" d="M340 612h1v6h-1zM351 605h1v7h-1zM365 618h1v6h-1zM376 618h2v6h-2zM378 618h1v6h-1zM406 612h1v6h-1zM408 605h1v7h-1zM414 618h1v6h-1zM441 618h1v6h-1zM448 630h3v6h-3zM458 618h1v6h-1zM468 605h1v7h-1zM484 612h1v6h-1zM501 618h1v6h-1zM514 630h2v6h-2zM527 612h1v6h-1zM527 605h1v7h-1zM539 612h1v6h-1zM542 612h1v6h-1zM545 618h1v6h-1zM557 624h1v6h-1zM564 605h1v7h-1zM573 605h1v7h-1zM596 605h1v7h-1zM611 618h1v6h-1zM640 618h1v6h-1zM660 612h1v6h-1zM676 612h1v6h-1zM687 636h1v6h-1zM687 624h1v6h-1zM688 624h1v6h-1zM702 630h3v6h-3zM710 636h2v6h-2zM712 636h1v6h-1zM716 642h1v6h-1zM720 642h2v6h-2zM738 624h1v6h-1zM749 642h1v6h-1zM749 636h1v6h-1zM751 636h2v6h-2zM758 624h1v6h-1zM761 624h1v6h-1zM788 642h1v6h-1zM792 642h1v6h-1zM798 624h1v6h-1zM802 624h2v6h-2zM806 642h3v6h-3zM806 636h3v6h-3zM806 624h3v6h-3zM809 648h2v5h-2zM816 642h2v6h-2zM820 636h1v6h-1zM822 624h1v6h-1zM823 636h1v6h-1zM824 630h3v6h-3zM829 642h1v6h-1zM830 624h1v6h-1zM837 636h3v6h-3zM843 624h1v6h-1zM852 618h1v6h-1zM862 630h1v6h-1zM868 636h2v6h-2zM868 624h2v6h-2zM882 630h1v6h-1zM892 624h1v6h-1zM899 630h1v6h-1zM900 636h1v6h-1zM900 630h1v6h-1zM903 624h1v6h-1zM905 618h1v6h-1zM905 612h1v6h-1zM909 618h1v6h-1zM910 612h1v6h-1zM911 618h1v6h-1zM912 618h1v6h-1zM915 630h1v6h-1zM915 618h1v6h-1zM926 636h1v6h-1zM952 636h2v6h-2zM957 612h1v6h-1zM959 624h1v6h-1zM960 618h1v6h-1zM969 618h1v6h-1zM973 624h2v6h-2zM979 636h2v6h-2zM981 642h2v6h-2zM985 642h2v6h-2z"/>
<path fill="#08a194" shape-rendering="crispEdges" d="M340 605h2v7h-2zM361 618h1v6h-1zM378 612h1v6h-1zM379 612h1v6h-1zM387 612h2v6h-2zM399 605h2v7h-2zM411 605h1v7h-1zM416 618h1v6h-1zM424 612h1v6h-1zM429 612h2v6h-2zM446 618h2v6h-2zM448 618h1v6h-1zM459 612h1v6h-1zM459 605h1v7h-1zM475 612h1v6h-1zM477 605h1v7h-1zM490 605h1v7h-1zM493 612h1v6h-1zM494 605h1v7h-1zM495 605h1v7h-1zM501 612h3v6h-3zM521 605h1v7h-1zM541 612h1v6h-1zM545 612h1v6h-1zM557 618h1v6h-1zM557 612h1v6h-1zM562 605h1v7h-1zM570 598h1v7h-1zM574 598h2v7h-2zM576 605h1v7h-1zM577 598h2v7h-2zM598 598h2v7h-2zM626 612h1v6h-1zM631 605h1v7h-1zM641 612h1v6h-1zM649 612h2v6h-2zM654 612h1v6h-1zM676 605h1v7h-1zM687 630h1v6h-1zM687 618h1v6h-1zM699 636h1v6h-1zM707 630h1v6h-1zM707 624h1v6h-1zM716 636h1v6h-1zM716 624h1v6h-1zM720 624h2v6h-2zM730 618h1v6h-1zM738 630h1v6h-1zM738 618h1v6h-1zM755 648h1v5h-1zM761 636h1v6h-1zM761 618h1v6h-1zM762 618h3v6h-3zM788 636h1v6h-1zM789 624h2v6h-2zM793 636h3v6h-3zM797 636h1v6h-1zM798 630h1v6h-1zM802 618h1v6h-1zM805 630h1v6h-1zM809 642h2v6h-2zM809 624h2v6h-2zM816 636h2v6h-2zM820 630h1v6h-1zM823 618h1v6h-1zM824 618h3v6h-3zM837 630h3v6h-3zM846 618h1v6h-1zM852 612h1v6h-1zM855 618h1v6h-1zM862 618h1v6h-1zM868 630h2v6h-2zM873 618h1v6h-1zM902 618h1v6h-1zM903 618h1v6h-1zM911 612h1v6h-1zM924 630h2v6h-2zM926 618h1v6h-1zM931 624h2v6h-2zM933 636h2v6h-2zM936 630h3v6h-3zM942 618h1v6h-1zM952 618h2v6h-2zM954 612h1v6h-1zM959 612h1v6h-1zM969 612h3v6h-3zM979 630h2v6h-2zM981 636h2v6h-2zM981 630h2v6h-2zM981 624h2v6h-2zM985 624h2v6h-2z"/>
<path fill="#0698a5" shape-rendering="crispEdges" d="M340 598h2v7h-2zM351 592h1v6h-1zM355 612h2v6h-2zM361 612h2v6h-2zM363 605h1v7h-1zM376 605h1v7h-1zM387 605h2v7h-2zM398 598h1v7h-1zM399 598h1v7h-1zM407 598h1v7h-1zM424 605h1v7h-1zM426 612h2v6h-2zM434 605h1v7h-1zM438 605h1v7h-1zM446 612h2v6h-2zM448 612h1v6h-1zM458 612h1v6h-1zM474 605h1v7h-1zM477 598h1v7h-1zM484 605h1v7h-1zM488 598h1v7h-1zM525 598h1v7h-1zM541 605h1v7h-1zM572 598h1v7h-1zM576 598h1v7h-1zM631 598h1v7h-1zM633 612h2v6h-2zM640 605h1v7h-1zM679 605h1v7h-1zM687 612h1v6h-1zM691 630h2v6h-2zM702 612h1v6h-1zM710 612h2v6h-2zM712 612h1v6h-1zM716 630h1v6h-1zM730 612h1v6h-1zM733 612h2v6h-2zM738 612h1v6h-1zM749 612h1v6h-1zM755 636h1v6h-1zM761 612h1v6h-1zM778 618h3v6h-3zM781 618h1v6h-1zM788 630h1v6h-1zM789 618h1v6h-1zM792 630h1v6h-1zM793 630h3v6h-3zM797 630h1v6h-1zM797 618h1v6h-1zM798 612h1v6h-1zM802 612h2v6h-2zM809 618h1v6h-1zM822 612h1v6h-1zM830 612h1v6h-1zM837 612h1v6h-1zM840 618h2v6h-2zM840 612h2v6h-2zM842 612h1v6h-1zM855 612h1v6h-1zM859 612h1v6h-1zM862 612h1v6h-1zM878 618h1v6h-1zM888 612h1v6h-1zM899 612h1v6h-1zM902 612h1v6h-1zM911 605h1v7h-1zM914 612h1v6h-1zM915 612h1v6h-1zM931 618h2v6h-2zM954 605h1v7h-1zM957 605h1v7h-1zM981 618h2v6h-2zM985 630h2v6h-2z"/>
<path fill="#f3a406" shape-rendering="crispEdges" d="M342 685h1v5h-1zM343 685h1v5h-1zM344 685h1v5h-1zM350 685h1v5h-1zM359 685h1v5h-1zM363 685h1v5h-1zM367 685h1v5h-1zM368 685h3v5h-3zM387 685h2v5h-2zM391 685h2v5h-2zM393 685h3v5h-3zM407 680h1v5h-1zM414 685h2v5h-2zM417 685h1v5h-1zM418 685h1v5h-1zM421 685h1v5h-1zM422 685h1v5h-1zM428 685h1v5h-1zM458 685h1v5h-1zM460 685h2v5h-2zM466 685h1v5h-1zM469 685h2v5h-2zM474 685h1v5h-1zM475 685h2v5h-2zM480 685h1v5h-1zM484 685h1v5h-1zM501 685h3v5h-3zM504 685h2v5h-2zM509 685h1v5h-1zM532 685h2v5h-2zM537 685h2v5h-2zM545 685h1v5h-1zM553 685h2v5h-2zM563 680h1v5h-1zM563 676h1v4h-1zM570 680h1v5h-1zM577 680h2v5h-2zM596 680h2v5h-2zM598 680h2v5h-2zM600 680h2v5h-2zM614 685h2v5h-2zM616 685h1v5h-1zM619 685h1v5h-1zM620 685h1v5h-1zM640 685h1v5h-1zM643 680h1v5h-1zM658 685h2v5h-2zM663 685h2v5h-2zM668 685h1v5h-1zM671 685h2v5h-2zM673 685h3v5h-3zM676 685h1v5h-1zM684 685h1v5h-1zM745 685h1v5h-1zM846 685h3v5h-3zM859 685h2v5h-2zM893 685h3v5h-3zM901 685h1v5h-1zM909 685h1v5h-1zM911 685h1v5h-1zM914 685h1v5h-1zM954 685h3v5h-3zM957 685h2v5h-2zM967 685h2v5h-2zM969 685h3v5h-3z"/>
<path fill="#cbea0a" shape-rendering="crispEdges" d="M343 676h1v4h-1zM344 676h1v4h-1zM350 670h1v6h-1zM352 664h2v6h-2zM359 670h1v6h-1zM363 676h1v4h-1zM367 676h1v4h-1zM368 676h3v4h-3zM371 670h1v6h-1zM378 676h1v4h-1zM389 653h2v6h-2zM398 664h1v6h-1zM401 664h2v6h-2zM405 676h1v4h-1zM407 664h1v6h-1zM407 659h1v5h-1zM408 659h1v5h-1zM431 676h1v4h-1zM460 670h2v6h-2zM468 664h1v6h-1zM471 670h1v6h-1zM477 664h3v6h-3zM488 664h2v6h-2zM490 670h1v6h-1zM491 664h1v6h-1zM494 664h1v6h-1zM519 664h2v6h-2zM521 664h1v6h-1zM521 659h1v5h-1zM523 659h2v5h-2zM527 664h1v6h-1zM532 676h2v4h-2zM537 670h2v6h-2zM540 664h1v6h-1zM561 659h1v5h-1zM562 664h1v6h-1zM564 659h1v5h-1zM565 664h1v6h-1zM566 664h1v6h-1zM570 659h1v5h-1zM571 653h1v6h-1zM571 648h1v5h-1zM572 664h1v6h-1zM573 659h1v5h-1zM574 659h2v5h-2zM576 659h1v5h-1zM598 659h2v5h-2zM598 653h2v6h-2zM602 653h1v6h-1zM603 664h3v6h-3zM616 676h1v4h-1zM631 664h1v6h-1zM632 670h1v6h-1zM644 670h2v6h-2zM649 670h2v6h-2zM662 670h1v6h-1zM677 676h1v4h-1zM679 676h1v4h-1zM905 676h3v4h-3zM911 676h1v4h-1zM954 676h3v4h-3zM957 676h2v4h-2z"/>
<path fill="#6fde2e" shape-rendering="crispEdges" d="M344 653h1v6h-1zM348 648h2v5h-2zM351 636h1v6h-1zM357 664h2v6h-2zM359 648h1v5h-1zM363 659h1v5h-1zM365 664h1v6h-1zM365 659h1v5h-1zM368 653h3v6h-3zM371 653h1v6h-1zM376 664h2v6h-2zM389 630h2v6h-2zM397 670h1v6h-1zM397 664h1v6h-1zM398 642h1v6h-1zM399 642h2v6h-2zM407 642h1v6h-1zM408 636h1v6h-1zM409 636h1v6h-1zM424 659h1v5h-1zM425 670h1v6h-1zM438 664h2v6h-2zM440 664h1v6h-1zM455 664h3v6h-3zM466 653h1v6h-1zM477 642h3v6h-3zM483 648h1v5h-1zM488 648h2v5h-2zM493 659h1v5h-1zM494 642h1v6h-1zM497 653h1v6h-1zM498 648h2v5h-2zM501 659h3v5h-3zM504 659h2v5h-2zM521 642h1v6h-1zM527 642h1v6h-1zM535 659h1v5h-1zM536 653h1v6h-1zM542 648h3v5h-3zM549 659h3v5h-3zM561 636h1v6h-1zM566 642h1v6h-1zM567 636h1v6h-1zM574 636h2v6h-2zM576 636h1v6h-1zM577 636h2v6h-2zM594 648h2v5h-2zM603 636h3v6h-3zM610 653h1v6h-1zM614 653h2v6h-2zM619 659h1v5h-1zM624 664h2v6h-2zM632 648h1v5h-1zM633 659h2v5h-2zM654 664h1v6h-1zM660 653h2v6h-2zM662 648h1v5h-1zM668 653h1v6h-1zM673 653h3v6h-3zM684 670h1v6h-1zM687 670h1v6h-1zM699 676h1v4h-1zM715 670h1v6h-1zM716 676h1v4h-1zM720 676h2v4h-2zM730 664h1v6h-1zM751 676h2v4h-2zM753 676h1v4h-1zM758 676h1v4h-1zM774 676h2v4h-2zM792 676h1v4h-1zM797 676h1v4h-1zM798 664h1v6h-1zM802 670h2v6h-2zM804 664h1v6h-1zM806 676h3v4h-3zM820 670h1v6h-1zM827 670h2v6h-2zM837 676h3v4h-3zM840 670h2v6h-2zM843 664h1v6h-1zM846 664h3v6h-3zM868 670h2v6h-2zM882 664h1v6h-1zM883 664h1v6h-1zM885 664h3v6h-3zM899 664h1v6h-1zM900 664h1v6h-1zM905 659h3v5h-3zM908 670h1v6h-1zM908 664h1v6h-1zM909 659h1v5h-1zM910 653h1v6h-1zM913 664h1v6h-1zM913 659h1v5h-1zM921 676h1v4h-1zM924 676h2v4h-2zM926 670h1v6h-1zM933 676h2v4h-2zM945 664h1v6h-1zM954 659h3v5h-3zM957 659h2v5h-2zM957 653h2v6h-2zM959 664h1v6h-1zM960 664h2v6h-2zM973 664h2v6h-2zM975 664h2v6h-2z"/>
<path fill="#28c85a" shape-rendering="crispEdges" d="M344 642h1v6h-1zM351 624h1v6h-1zM352 624h2v6h-2zM355 653h2v6h-2zM360 642h1v6h-1zM360 636h1v6h-1zM365 648h1v5h-1zM378 642h1v6h-1zM389 624h2v6h-2zM399 624h2v6h-2zM403 630h2v6h-2zM406 630h1v6h-1zM409 624h1v6h-1zM424 642h1v6h-1zM425 653h1v6h-1zM426 653h2v6h-2zM434 642h1v6h-1zM441 642h1v6h-1zM441 636h1v6h-1zM460 636h2v6h-2zM471 624h1v6h-1zM475 642h2v6h-2zM477 624h3v6h-3zM483 630h1v6h-1zM485 630h2v6h-2zM493 642h1v6h-1zM513 636h1v6h-1zM521 624h1v6h-1zM522 624h1v6h-1zM522 618h1v6h-1zM523 624h2v6h-2zM542 636h3v6h-3zM542 630h3v6h-3zM561 624h1v6h-1zM562 624h1v6h-1zM564 624h1v6h-1zM570 624h1v6h-1zM572 624h1v6h-1zM577 624h2v6h-2zM600 624h2v6h-2zM608 630h2v6h-2zM611 648h1v5h-1zM626 648h1v5h-1zM631 624h1v6h-1zM641 636h1v6h-1zM641 630h1v6h-1zM649 636h2v6h-2zM660 636h2v6h-2zM665 636h2v6h-2zM669 630h2v6h-2zM678 648h1v5h-1zM696 659h1v5h-1zM710 653h2v6h-2zM712 653h1v6h-1zM720 664h2v6h-2zM738 659h1v5h-1zM745 659h1v5h-1zM745 653h1v6h-1zM751 659h2v5h-2zM753 664h1v6h-1zM755 670h1v6h-1zM758 659h1v5h-1zM785 659h2v5h-2zM788 659h1v5h-1zM792 659h1v5h-1zM797 659h1v5h-1zM798 653h1v6h-1zM806 659h3v5h-3zM809 664h2v6h-2zM820 659h1v5h-1zM824 653h3v6h-3zM840 653h2v6h-2zM845 648h1v5h-1zM846 648h3v5h-3zM868 659h2v5h-2zM868 653h2v6h-2zM876 653h2v6h-2zM885 648h3v5h-3zM888 648h1v5h-1zM892 648h1v5h-1zM896 648h1v5h-1zM899 648h1v5h-1zM900 648h1v5h-1zM908 653h1v6h-1zM909 642h1v6h-1zM911 636h1v6h-1zM912 648h1v5h-1zM914 653h1v6h-1zM921 664h1v6h-1zM921 659h1v5h-1zM924 659h2v5h-2zM926 653h1v6h-1zM933 659h2v5h-2zM936 659h3v5h-3zM940 659h2v5h-2zM952 653h2v6h-2zM952 648h2v5h-2zM954 642h3v6h-3zM954 636h3v6h-3zM959 648h1v5h-1zM960 648h2v5h-2zM962 642h1v6h-1zM969 642h3v6h-3zM981 664h2v6h-2zM985 659h2v5h-2z"/>
<path fill="#efb208" shape-rendering="crispEdges" d="M345 685h1v5h-1zM355 685h2v5h-2zM357 685h2v5h-2zM365 685h1v5h-1zM371 680h1v5h-1zM372 685h1v5h-1zM376 685h2v5h-2zM378 685h1v5h-1zM379 685h1v5h-1zM389 680h2v5h-2zM389 676h2v4h-2zM397 685h1v5h-1zM398 680h1v5h-1zM399 680h2v5h-2zM401 680h2v5h-2zM408 680h1v5h-1zM409 680h1v5h-1zM410 680h1v5h-1zM411 680h1v5h-1zM412 685h2v5h-2zM420 685h1v5h-1zM426 685h2v5h-2zM442 685h2v5h-2zM444 685h1v5h-1zM448 685h3v5h-3zM451 685h1v5h-1zM452 685h1v5h-1zM454 685h1v5h-1zM468 680h1v5h-1zM469 680h2v5h-2zM471 680h1v5h-1zM485 680h2v5h-2zM488 680h2v5h-2zM494 680h1v5h-1zM498 680h2v5h-2zM510 685h1v5h-1zM511 685h2v5h-2zM523 680h2v5h-2zM525 680h2v5h-2zM527 680h1v5h-1zM546 685h1v5h-1zM561 680h1v5h-1zM562 680h1v5h-1zM565 680h1v5h-1zM567 680h1v5h-1zM568 680h2v5h-2zM572 680h1v5h-1zM573 680h1v5h-1zM574 680h2v5h-2zM576 680h1v5h-1zM592 680h2v5h-2zM592 676h2v4h-2zM598 676h2v4h-2zM600 676h2v4h-2zM602 680h1v5h-1zM602 676h1v4h-1zM603 680h3v5h-3zM606 680h2v5h-2zM606 676h2v4h-2zM621 685h2v5h-2zM626 685h1v5h-1zM627 685h2v5h-2zM631 680h1v5h-1zM633 685h2v5h-2zM637 685h2v5h-2zM644 680h2v5h-2zM646 680h3v5h-3zM651 685h2v5h-2zM653 685h1v5h-1zM673 680h3v5h-3zM676 680h1v5h-1zM677 685h1v5h-1zM678 685h1v5h-1zM730 685h1v5h-1zM751 685h2v5h-2zM753 685h1v5h-1zM761 685h1v5h-1zM785 685h2v5h-2zM792 685h1v5h-1zM797 685h1v5h-1zM802 685h2v5h-2zM820 685h1v5h-1zM829 685h1v5h-1zM845 685h1v5h-1zM849 685h1v5h-1zM850 685h2v5h-2zM882 685h1v5h-1zM885 685h3v5h-3zM900 685h1v5h-1zM903 685h1v5h-1zM908 685h1v5h-1zM959 685h1v5h-1zM965 685h2v5h-2zM973 685h2v5h-2z"/>
<path fill="#dddf0a" shape-rendering="crispEdges" d="M345 680h1v5h-1zM350 676h1v4h-1zM354 680h1v5h-1zM372 680h1v5h-1zM387 680h2v5h-2zM389 664h2v6h-2zM396 680h1v5h-1zM408 670h1v6h-1zM411 676h1v4h-1zM419 680h1v5h-1zM425 680h1v5h-1zM442 680h2v5h-2zM454 680h1v5h-1zM458 680h1v5h-1zM483 676h1v4h-1zM485 676h2v4h-2zM487 670h1v6h-1zM562 676h1v4h-1zM564 670h1v6h-1zM567 664h1v6h-1zM568 670h2v6h-2zM572 670h1v6h-1zM573 670h1v6h-1zM592 670h2v6h-2zM592 664h2v6h-2zM596 670h2v6h-2zM602 670h1v6h-1zM603 670h3v6h-3zM606 670h2v6h-2zM624 680h2v5h-2zM631 670h1v6h-1zM637 680h2v5h-2zM643 670h1v6h-1zM644 676h2v4h-2zM662 676h1v4h-1zM684 680h1v5h-1zM688 680h1v5h-1zM720 680h2v5h-2zM749 680h1v5h-1zM753 680h1v5h-1zM784 680h1v5h-1zM789 680h2v5h-2zM792 680h1v5h-1zM797 680h1v5h-1zM804 680h1v5h-1zM822 680h1v5h-1zM837 680h3v5h-3zM840 680h2v5h-2zM845 680h1v5h-1zM846 680h3v5h-3zM874 680h2v5h-2zM882 680h1v5h-1zM921 680h1v5h-1zM933 680h2v5h-2zM936 680h3v5h-3zM940 680h2v5h-2zM952 680h2v5h-2zM960 680h2v5h-2z"/>
<path fill="#f99204" shape-rendering="crispEdges" d="M351 685h1v5h-1zM398 685h1v5h-1zM407 685h1v5h-1zM431 685h1v5h-1zM465 685h1v5h-1zM477 685h3v5h-3zM481 685h2v5h-2zM485 685h2v5h-2zM487 685h1v5h-1zM488 685h2v5h-2zM494 685h1v5h-1zM513 685h1v5h-1zM522 685h1v5h-1zM525 685h2v5h-2zM561 685h1v5h-1zM562 685h1v5h-1zM565 685h1v5h-1zM567 685h1v5h-1zM592 685h2v5h-2zM631 685h1v5h-1zM632 685h1v5h-1zM642 685h1v5h-1zM643 685h1v5h-1zM644 685h2v5h-2z"/>
<path fill="#078cbd" shape-rendering="crispEdges" d="M351 586h1v6h-1zM352 586h1v6h-1zM363 598h1v7h-1zM365 598h1v7h-1zM379 598h1v7h-1zM387 598h2v7h-2zM406 592h1v6h-1zM419 605h1v7h-1zM424 598h1v7h-1zM434 598h1v7h-1zM438 598h1v7h-1zM441 598h1v7h-1zM446 605h1v7h-1zM467 592h1v6h-1zM477 592h3v6h-3zM485 592h2v6h-2zM494 592h1v6h-1zM501 598h1v7h-1zM545 598h1v7h-1zM562 592h1v6h-1zM562 586h1v6h-1zM567 586h1v6h-1zM594 592h1v6h-1zM620 598h1v7h-1zM631 592h1v6h-1zM654 598h1v7h-1zM676 592h1v6h-1zM687 605h1v7h-1zM697 605h2v7h-2zM707 605h1v7h-1zM710 605h1v7h-1zM733 605h1v7h-1zM738 605h1v7h-1zM761 605h1v7h-1zM762 605h1v7h-1zM771 612h1v6h-1zM778 605h3v7h-3zM792 605h1v7h-1zM802 605h1v7h-1zM806 605h3v7h-3zM809 612h2v6h-2zM823 605h1v7h-1zM840 605h1v7h-1zM855 605h1v7h-1zM888 598h1v7h-1zM892 598h1v7h-1zM897 598h2v7h-2zM903 605h1v7h-1zM910 592h1v6h-1zM936 605h3v7h-3zM952 605h2v7h-2zM957 598h1v7h-1zM979 605h1v7h-1z"/>
<path fill="#0984cd" shape-rendering="crispEdges" d="M351 580h1v6h-1zM359 586h1v6h-1zM363 592h1v6h-1zM366 598h1v7h-1zM376 598h2v7h-2zM399 586h1v6h-1zM406 586h1v6h-1zM410 586h1v6h-1zM417 598h1v7h-1zM417 592h1v6h-1zM419 598h1v7h-1zM424 592h1v6h-1zM428 592h1v6h-1zM446 598h1v7h-1zM462 592h1v6h-1zM485 586h1v6h-1zM490 586h1v6h-1zM490 580h1v6h-1zM493 592h1v6h-1zM497 592h1v6h-1zM504 592h1v6h-1zM545 592h1v6h-1zM568 580h1v6h-1zM570 580h1v6h-1zM577 580h1v6h-1zM620 592h1v6h-1zM635 598h2v7h-2zM637 598h1v7h-1zM660 592h2v6h-2zM660 586h2v6h-2zM676 586h1v6h-1zM707 598h1v7h-1zM710 598h1v7h-1zM720 605h1v7h-1zM730 598h1v7h-1zM738 598h1v7h-1zM756 605h1v7h-1zM758 605h1v7h-1zM758 598h1v7h-1zM762 598h3v7h-3zM797 605h1v7h-1zM802 598h1v7h-1zM806 598h1v7h-1zM820 598h1v7h-1zM830 598h1v7h-1zM837 598h1v7h-1zM840 598h1v7h-1zM855 598h1v7h-1zM859 598h2v7h-2zM862 598h1v7h-1zM892 592h1v6h-1zM899 598h1v7h-1zM911 592h1v6h-1zM912 598h1v7h-1zM924 605h1v7h-1zM933 598h1v7h-1zM952 598h2v7h-2zM957 592h2v6h-2z"/>
<path fill="#fa8c03" shape-rendering="crispEdges" d="M352 685h2v5h-2zM401 685h2v5h-2zM409 685h1v5h-1zM471 685h1v5h-1zM523 685h2v5h-2zM563 685h1v5h-1zM564 685h1v5h-1zM570 685h1v5h-1zM571 685h1v5h-1zM573 685h1v5h-1zM574 685h2v5h-2zM577 685h2v5h-2zM598 685h2v5h-2zM600 685h2v5h-2zM602 685h1v5h-1zM606 685h2v5h-2zM646 685h3v5h-3z"/>
<path fill="#0690b5" shape-rendering="crispEdges" d="M354 605h1v7h-1zM361 605h2v7h-2zM365 605h1v7h-1zM398 592h1v6h-1zM408 592h1v6h-1zM408 586h1v6h-1zM410 592h1v6h-1zM426 605h2v7h-2zM429 598h2v7h-2zM448 605h3v7h-3zM458 605h1v7h-1zM459 598h1v7h-1zM474 598h1v7h-1zM488 592h1v6h-1zM493 598h1v7h-1zM504 598h1v7h-1zM513 598h1v7h-1zM514 605h2v7h-2zM528 592h1v6h-1zM557 605h1v7h-1zM576 592h1v6h-1zM620 605h1v7h-1zM654 605h1v7h-1zM669 592h2v6h-2zM679 598h1v7h-1zM688 612h1v6h-1zM702 605h1v7h-1zM707 612h1v6h-1zM712 605h1v7h-1zM720 612h2v6h-2zM776 618h1v6h-1zM778 612h3v6h-3zM781 612h3v6h-3zM789 612h2v6h-2zM792 612h1v6h-1zM793 612h3v6h-3zM798 605h1v7h-1zM809 630h2v6h-2zM820 605h1v7h-1zM822 605h1v7h-1zM824 605h3v7h-3zM833 612h1v6h-1zM842 605h1v7h-1zM846 605h1v7h-1zM859 605h1v7h-1zM862 605h1v7h-1zM868 605h1v7h-1zM892 605h1v7h-1zM893 605h3v7h-3zM899 605h1v7h-1zM912 605h1v7h-1zM915 605h1v7h-1zM924 612h1v6h-1zM931 612h1v6h-1zM936 612h1v6h-1zM959 605h1v7h-1zM960 605h1v7h-1zM969 598h1v7h-1zM973 605h2v7h-2zM981 612h1v6h-1zM985 612h2v6h-2zM987 612h1v6h-1z"/>
<path fill="#1262ee" shape-rendering="crispEdges" d="M354 580h1v6h-1zM376 580h1v6h-1zM417 580h1v6h-1zM419 580h1v6h-1zM426 580h1v6h-1zM446 580h1v6h-1zM493 580h1v6h-1zM514 580h1v6h-1zM546 580h1v6h-1zM637 580h2v6h-2zM654 580h1v6h-1zM693 586h2v6h-2zM720 586h1v6h-1zM738 586h1v6h-1zM758 586h1v6h-1zM778 586h3v6h-3zM781 586h1v6h-1zM781 580h3v6h-3zM793 586h1v6h-1zM802 580h2v6h-2zM806 586h3v6h-3zM811 586h1v6h-1zM814 586h1v6h-1zM823 586h1v6h-1zM824 580h1v6h-1zM853 580h1v6h-1zM859 580h2v6h-2zM893 580h1v6h-1zM899 580h1v6h-1zM901 580h1v6h-1zM903 580h1v6h-1zM915 580h1v6h-1zM931 586h1v6h-1zM933 586h2v6h-2zM981 586h1v6h-1z"/>
<path fill="#23c360" shape-rendering="crispEdges" d="M355 648h2v5h-2zM363 642h1v6h-1zM371 630h1v6h-1zM376 642h2v6h-2zM378 636h1v6h-1zM389 618h1v6h-1zM398 624h1v6h-1zM408 624h1v6h-1zM411 624h1v6h-1zM426 648h2v5h-2zM429 642h2v6h-2zM438 642h2v6h-2zM459 630h1v6h-1zM484 630h1v6h-1zM485 624h2v6h-2zM492 624h1v6h-1zM498 624h2v6h-2zM501 642h3v6h-3zM504 636h2v6h-2zM514 642h2v6h-2zM527 624h1v6h-1zM528 624h2v6h-2zM566 624h1v6h-1zM576 624h1v6h-1zM577 618h2v6h-2zM606 624h2v6h-2zM611 642h1v6h-1zM619 642h1v6h-1zM620 642h1v6h-1zM623 636h1v6h-1zM623 630h1v6h-1zM624 642h2v6h-2zM626 642h1v6h-1zM633 642h2v6h-2zM640 642h1v6h-1zM660 630h2v6h-2zM687 653h1v6h-1zM688 659h1v5h-1zM688 653h1v6h-1zM689 659h1v5h-1zM699 659h1v5h-1zM702 648h3v5h-3zM715 653h1v6h-1zM716 659h1v5h-1zM738 653h1v6h-1zM745 648h1v5h-1zM749 653h1v6h-1zM758 653h1v6h-1zM761 653h1v6h-1zM776 664h2v6h-2zM789 664h2v6h-2zM789 659h2v5h-2zM792 653h1v6h-1zM798 648h1v5h-1zM805 653h1v6h-1zM809 659h2v5h-2zM820 653h1v6h-1zM820 648h1v5h-1zM822 653h1v6h-1zM824 648h3v5h-3zM837 659h3v5h-3zM840 648h2v5h-2zM843 648h1v5h-1zM846 642h3v6h-3zM874 664h2v6h-2zM874 659h2v5h-2zM883 642h1v6h-1zM888 642h1v6h-1zM900 642h1v6h-1zM905 636h3v6h-3zM908 648h1v5h-1zM910 636h1v6h-1zM914 648h1v5h-1zM924 653h2v6h-2zM931 653h2v6h-2zM936 653h3v6h-3zM942 653h1v6h-1zM957 636h2v6h-2zM960 642h2v6h-2zM962 636h1v6h-1zM965 642h2v6h-2zM973 648h2v5h-2z"/>
<path fill="#09a68b" shape-rendering="crispEdges" d="M355 618h1v6h-1zM357 618h2v6h-2zM363 618h1v6h-1zM371 612h1v6h-1zM376 624h2v6h-2zM379 618h1v6h-1zM398 605h1v7h-1zM409 605h1v7h-1zM424 618h1v6h-1zM429 618h2v6h-2zM434 612h1v6h-1zM441 612h1v6h-1zM446 630h2v6h-2zM446 624h2v6h-2zM454 630h1v6h-1zM474 612h1v6h-1zM483 612h1v6h-1zM485 605h1v7h-1zM493 618h1v6h-1zM497 612h1v6h-1zM513 612h1v6h-1zM514 618h2v6h-2zM523 605h1v7h-1zM525 605h2v7h-2zM528 605h1v7h-1zM570 605h1v7h-1zM572 605h1v7h-1zM577 605h2v7h-2zM620 618h1v6h-1zM623 612h1v6h-1zM626 618h1v6h-1zM629 612h1v6h-1zM633 618h1v6h-1zM643 605h1v7h-1zM646 605h1v7h-1zM665 612h2v6h-2zM669 612h1v6h-1zM679 612h1v6h-1zM682 630h2v6h-2zM688 636h1v6h-1zM691 636h2v6h-2zM702 618h1v6h-1zM710 630h2v6h-2zM710 624h2v6h-2zM712 624h1v6h-1zM738 636h1v6h-1zM745 636h1v6h-1zM749 624h1v6h-1zM758 636h1v6h-1zM761 630h1v6h-1zM789 642h2v6h-2zM792 636h1v6h-1zM792 624h1v6h-1zM793 642h3v6h-3zM793 624h3v6h-3zM797 642h1v6h-1zM797 624h1v6h-1zM798 618h1v6h-1zM802 630h2v6h-2zM805 636h1v6h-1zM820 624h1v6h-1zM822 636h1v6h-1zM822 618h1v6h-1zM829 636h1v6h-1zM837 624h3v6h-3zM843 630h1v6h-1zM859 630h2v6h-2zM873 624h1v6h-1zM883 618h1v6h-1zM888 618h1v6h-1zM892 618h1v6h-1zM899 618h1v6h-1zM902 624h1v6h-1zM908 624h1v6h-1zM914 630h1v6h-1zM914 618h1v6h-1zM924 624h2v6h-2zM926 624h1v6h-1zM931 636h2v6h-2zM933 624h2v6h-2zM936 636h3v6h-3zM936 624h3v6h-3zM942 636h1v6h-1zM942 624h1v6h-1zM952 630h2v6h-2zM952 624h2v6h-2zM959 618h1v6h-1zM973 618h2v6h-2zM979 624h2v6h-2zM985 636h2v6h-2z"/>
<path fill="#0e73df" shape-rendering="crispEdges" d="M357 586h1v6h-1zM365 586h1v6h-1zM385 580h1v6h-1zM417 586h1v6h-1zM428 586h1v6h-1zM429 586h1v6h-1zM444 592h1v6h-1zM494 580h1v6h-1zM514 586h1v6h-1zM546 586h1v6h-1zM637 592h1v6h-1zM637 586h2v6h-2zM654 592h1v6h-1zM665 580h2v6h-2zM669 580h2v6h-2zM676 580h1v6h-1zM687 592h1v6h-1zM693 592h1v6h-1zM702 592h1v6h-1zM712 592h1v6h-1zM720 598h2v7h-2zM730 586h1v6h-1zM738 592h1v6h-1zM760 598h1v7h-1zM762 592h3v6h-3zM771 598h1v7h-1zM793 592h1v6h-1zM824 586h3v6h-3zM827 592h2v6h-2zM830 592h1v6h-1zM831 592h1v6h-1zM840 592h1v6h-1zM859 592h1v6h-1zM897 586h1v6h-1zM899 592h1v6h-1zM901 592h1v6h-1zM910 580h1v6h-1zM911 580h1v6h-1zM919 586h1v6h-1zM931 592h1v6h-1z"/>
<path fill="#0c79da" shape-rendering="crispEdges" d="M363 586h1v6h-1zM366 592h1v6h-1zM368 586h3v6h-3zM376 592h1v6h-1zM385 586h2v6h-2zM387 586h1v6h-1zM397 592h1v6h-1zM406 580h1v6h-1zM419 592h1v6h-1zM434 586h1v6h-1zM441 586h1v6h-1zM446 592h1v6h-1zM460 580h1v6h-1zM462 586h1v6h-1zM469 580h1v6h-1zM472 586h1v6h-1zM472 580h2v6h-2zM480 586h1v6h-1zM484 586h1v6h-1zM541 586h1v6h-1zM545 586h1v6h-1zM573 580h1v6h-1zM616 586h1v6h-1zM619 586h1v6h-1zM620 586h1v6h-1zM635 592h2v6h-2zM641 586h1v6h-1zM643 580h1v6h-1zM688 598h1v7h-1zM710 592h1v6h-1zM730 592h1v6h-1zM756 598h2v7h-2zM758 592h1v6h-1zM778 598h3v7h-3zM789 598h2v7h-2zM793 598h3v7h-3zM798 592h1v6h-1zM802 592h1v6h-1zM806 592h1v6h-1zM824 592h1v6h-1zM855 592h1v6h-1zM868 592h1v6h-1zM878 598h2v7h-2zM888 592h1v6h-1zM893 592h3v6h-3zM897 592h2v6h-2zM899 586h1v6h-1zM912 592h1v6h-1zM915 592h1v6h-1zM936 598h3v7h-3zM952 592h1v6h-1zM959 592h1v6h-1zM979 598h1v7h-1zM987 598h1v7h-1z"/>
<path fill="#0523c8" shape-rendering="crispEdges" d="M370 522h2v30h-2zM510 557h1v5h-1zM517 562h1v18h-1zM593 530h1v22h-1zM608 530h1v22h-1zM753 530h2v22h-2zM755 545h2v7h-2zM792 530h1v22h-1zM883 522h1v30h-1zM912 518h1v8h-1zM922 530h1v22h-1z"/>
<path fill="#135cf3" shape-rendering="crispEdges" d="M372 580h1v6h-1zM680 580h1v6h-1zM707 580h1v6h-1zM728 580h1v6h-1zM733 580h1v6h-1zM748 586h1v6h-1zM756 586h2v6h-2zM760 592h1v6h-1zM762 580h1v6h-1zM798 580h1v6h-1zM830 580h1v6h-1zM831 580h1v6h-1zM855 580h1v6h-1zM861 580h1v6h-1zM868 580h1v6h-1zM892 580h1v6h-1zM931 580h1v6h-1zM952 580h1v6h-1zM979 580h1v6h-1z"/>
<path fill="#0a23eb" shape-rendering="crispEdges" d="M372 516h2v8h-2zM418 541h1v11h-1zM609 552h1v28h-1zM705 526h2v26h-2zM718 530h2v22h-2zM785 526h1v15h-1zM812 541h2v11h-2zM882 545h1v7h-1z"/>
<path fill="#0f64f8" shape-rendering="crispEdges" d="M382 557h1v23h-1z"/>
<path fill="#143cf8" shape-rendering="crispEdges" d="M398 522h1v30h-1zM518 552h2v28h-2zM533 545h1v7h-1zM641 530h1v22h-1zM643 552h1v28h-1zM1076 562h1v18h-1z"/>
<path fill="#142df8" shape-rendering="crispEdges" d="M400 552h1v28h-1zM455 536h2v16h-2zM716 552h1v28h-1zM863 526h1v26h-1z"/>
<path fill="#0f2df8" shape-rendering="crispEdges" d="M427 557h1v23h-1zM457 530h1v22h-1zM748 552h1v28h-1zM906 526h1v26h-1z"/>
<path fill="#193cf8" shape-rendering="crispEdges" d="M438 552h2v28h-2zM533 552h1v28h-1z"/>
<path fill="#1464e1" shape-rendering="crispEdges" d="M453 570h1v10h-1zM587 530h1v11h-1zM725 530h1v11h-1z"/>
<path fill="#1208c8" shape-rendering="crispEdges" d="M478 545h2v7h-2zM481 562h1v18h-1zM674 566h1v14h-1zM755 572h2v8h-2zM837 522h1v30h-1zM925 536h1v16h-1zM1007 536h2v16h-2z"/>
<path fill="#1950f0" shape-rendering="crispEdges" d="M489 552h1v28h-1zM537 522h1v30h-1zM848 522h2v30h-2z"/>
<path fill="#193cf0" shape-rendering="crispEdges" d="M503 536h2v16h-2zM636 522h2v19h-2zM722 530h1v22h-1zM964 552h1v28h-1z"/>
<path fill="#143cf0" shape-rendering="crispEdges" d="M508 530h1v22h-1zM621 566h1v14h-1zM639 530h2v22h-2zM689 552h1v28h-1zM960 572h1v8h-1z"/>
<path fill="#1223af" shape-rendering="crispEdges" d="M518 530h2v22h-2zM526 536h1v16h-1zM557 552h1v10h-1zM789 557h1v23h-1zM903 536h2v16h-2zM954 516h2v8h-2z"/>
<path fill="#1208af" shape-rendering="crispEdges" d="M544 575h2v5h-2zM576 557h1v23h-1zM657 552h1v16h-1zM700 541h1v11h-1zM717 536h1v5h-1zM829 530h1v22h-1zM970 530h1v22h-1zM1065 572h1v8h-1z"/>
<path fill="#1464f0" shape-rendering="crispEdges" d="M567 557h1v23h-1zM887 545h1v7h-1z"/>
<path fill="#0f50f8" shape-rendering="crispEdges" d="M579 530h2v22h-2zM796 541h2v7h-2zM851 575h1v5h-1z"/>
<path fill="#0f2de1" shape-rendering="crispEdges" d="M601 572h1v8h-1zM912 530h1v22h-1z"/>
<path fill="#1450e1" shape-rendering="crispEdges" d="M618 572h1v8h-1z"/>
<path fill="#1450f8" shape-rendering="crispEdges" d="M673 530h1v22h-1z"/>
<path fill="#1355f4" shape-rendering="crispEdges" d="M687 580h1v6h-1zM688 580h1v6h-1zM693 580h2v6h-2zM710 580h2v6h-2zM712 580h1v6h-1zM720 580h2v6h-2zM748 580h1v6h-1zM758 580h1v6h-1zM760 586h1v6h-1zM778 580h1v6h-1zM806 580h1v6h-1zM811 580h1v6h-1zM823 580h1v6h-1zM837 580h3v6h-3zM840 580h2v6h-2zM981 580h1v6h-1z"/>
<path fill="#0f64f0" shape-rendering="crispEdges" d="M724 530h1v22h-1z"/>
<path fill="#0f2df0" shape-rendering="crispEdges" d="M732 552h1v28h-1zM765 566h1v14h-1z"/>
<path fill="#1464f8" shape-rendering="crispEdges" d="M734 530h1v22h-1z"/>
<path fill="#124df3" shape-rendering="crispEdges" d="M756 580h2v6h-2zM793 580h1v6h-1zM814 580h1v6h-1z"/>
<path fill="#1950f8" shape-rendering="crispEdges" d="M853 552h1v16h-1z"/>
<path fill="#143ce1" shape-rendering="crispEdges" d="M859 530h1v22h-1z"/>
<path fill="#0f64e1" shape-rendering="crispEdges" d="M931 552h1v28h-1z"/>
<path fill="#1044f1" shape-rendering="crispEdges" d="M987 580h1v6h-1z"/>
<path fill="#96f02d" shape-rendering="crispEdges" d="M96 580h3v5h-3zM165 580h3v5h-3zM219 580h4v5h-4zM582 580h5v5h-5z"/>
<path fill="#a5e82d" shape-rendering="crispEdges" d="M100 580h1v5h-1zM135 580h5v5h-5z"/>
<path fill="#a5f02d" shape-rendering="crispEdges" d="M104 580h2v5h-2zM307 580h2v5h-2zM1040 580h1v5h-1z"/>
<path fill="#3c7814" shape-rendering="crispEdges" d="M106 580h1v5h-1zM140 580h1v5h-1zM164 580h1v5h-1zM172 580h1v5h-1zM180 580h1v5h-1zM185 580h1v5h-1zM218 580h1v5h-1zM306 580h1v5h-1z"/>
<path fill="#b4e81e" shape-rendering="crispEdges" d="M107 580h2v5h-2zM115 580h1v5h-1zM145 580h1v5h-1z"/>
<path fill="#bef01e" shape-rendering="crispEdges" d="M118 580h2v5h-2z"/>
<path fill="#96e83c" shape-rendering="crispEdges" d="M124 580h2v5h-2z"/>
<path fill="#a5f52d" shape-rendering="crispEdges" d="M130 580h5v5h-5zM323 580h1v5h-1z"/>
<path fill="#96f53c" shape-rendering="crispEdges" d="M141 580h4v5h-4zM153 580h3v5h-3zM329 580h1v5h-1z"/>
<path fill="#a5e83c" shape-rendering="crispEdges" d="M147 580h2v5h-2zM1028 580h4v5h-4z"/>
<path fill="#96f03c" shape-rendering="crispEdges" d="M160 580h4v5h-4zM280 580h3v5h-3z"/>
<path fill="#bef51e" shape-rendering="crispEdges" d="M168 580h4v5h-4zM181 580h2v5h-2zM326 580h1v5h-1zM1018 580h4v5h-4z"/>
<path fill="#bee83c" shape-rendering="crispEdges" d="M173 580h4v5h-4zM189 580h2v5h-2z"/>
<path fill="#a5e81e" shape-rendering="crispEdges" d="M177 580h3v5h-3zM215 580h3v5h-3z"/>
<path fill="#b4e82d" shape-rendering="crispEdges" d="M183 580h2v5h-2zM248 580h2v5h-2zM1009 580h2v5h-2z"/>
<path fill="#a5f53c" shape-rendering="crispEdges" d="M186 580h3v5h-3zM227 580h1v5h-1zM311 580h2v5h-2zM1033 580h4v5h-4z"/>
<path fill="#b4f53c" shape-rendering="crispEdges" d="M197 580h2v5h-2zM209 580h1v5h-1z"/>
<path fill="#bee82d" shape-rendering="crispEdges" d="M200 580h4v5h-4zM252 580h2v5h-2z"/>
<path fill="#bef52d" shape-rendering="crispEdges" d="M213 580h2v5h-2zM299 580h1v5h-1z"/>
<path fill="#a5f03c" shape-rendering="crispEdges" d="M230 580h1v5h-1z"/>
<path fill="#bee81e" shape-rendering="crispEdges" d="M234 580h3v5h-3zM1006 580h2v5h-2z"/>
<path fill="#b4f01e" shape-rendering="crispEdges" d="M237 580h1v5h-1z"/>
<path fill="#b4f03c" shape-rendering="crispEdges" d="M245 580h2v5h-2z"/>
<path fill="#bef02d" shape-rendering="crispEdges" d="M254 580h1v5h-1zM995 580h4v5h-4z"/>
<path fill="#96f01e" shape-rendering="crispEdges" d="M256 580h2v5h-2z"/>
<path fill="#96e81e" shape-rendering="crispEdges" d="M258 580h2v5h-2zM271 580h4v5h-4z"/>
<path fill="#96f52d" shape-rendering="crispEdges" d="M260 580h1v5h-1z"/>
<path fill="#b4f51e" shape-rendering="crispEdges" d="M267 580h1v5h-1z"/>
<path fill="#b4f52d" shape-rendering="crispEdges" d="M283 580h4v5h-4z"/>
<path fill="#a5f51e" shape-rendering="crispEdges" d="M290 580h2v5h-2z"/>
<path fill="#bef53c" shape-rendering="crispEdges" d="M292 580h3v5h-3z"/>
<path fill="#96e82d" shape-rendering="crispEdges" d="M295 580h4v5h-4zM1002 580h3v5h-3z"/>
<path fill="#bef03c" shape-rendering="crispEdges" d="M304 580h2v5h-2zM1058 580h1v5h-1z"/>
<path fill="#96f51e" shape-rendering="crispEdges" d="M316 580h3v5h-3z"/>
<path fill="#b4f02d" shape-rendering="crispEdges" d="M1042 580h5v5h-5z"/>
<path fill="#b4e83c" shape-rendering="crispEdges" d="M1066 580h4v5h-4z"/>
<rect x="96" y="630" width="238" height="60" fill="#d95f6a"/>
<rect x="579" y="630" width="13" height="60" fill="#d95f6a"/>
<rect x="989" y="630" width="91" height="60" fill="#d95f6a"/>
<rect x="136" y="687" width="1" height="3" fill="#333"/>
<rect x="177" y="687" width="1" height="3" fill="#333"/>
<rect x="218" y="687" width="1" height="3" fill="#333"/>
<rect x="259" y="687" width="1" height="3" fill="#333"/>
<rect x="300" y="687" width="1" height="3" fill="#333"/>
<rect x="341" y="687" width="1" height="3" fill="#333"/>
<rect x="382" y="687" width="1" height="3" fill="#333"/>
<rect x="423" y="687" width="1" height="3" fill="#333"/>
<rect x="464" y="687" width="1" height="3" fill="#333"/>
<rect x="505" y="687" width="1" height="3" fill="#333"/>
<rect x="546" y="687" width="1" height="3" fill="#333"/>
<rect x="587" y="687" width="1" height="3" fill="#333"/>
<rect x="628" y="687" width="1" height="3" fill="#333"/>
<rect x="669" y="687" width="1" height="3" fill="#333"/>
<rect x="710" y="687" width="1" height="3" fill="#333"/>
<rect x="751" y="687" width="1" height="3" fill="#333"/>
<rect x="792" y="687" width="1" height="3" fill="#333"/>
<rect x="833" y="687" width="1" height="3" fill="#333"/>
<rect x="874" y="687" width="1" height="3" fill="#333"/>
<rect x="915" y="687" width="1" height="3" fill="#333"/>
<rect x="956" y="687" width="1" height="3" fill="#333"/>
<rect x="997" y="687" width="1" height="3" fill="#333"/>
<rect x="1038" y="687" width="1" height="3" fill="#333"/>
<rect x="95" y="690" width="986" height="1" fill="#000"/>
<rect x="1080" y="513" width="1" height="178" fill="#111"/>
<rect x="91" y="687" width="4" height="1" fill="#222"/>
<rect x="91" y="680" width="4" height="1" fill="#222"/>
<rect x="91" y="675" width="4" height="1" fill="#222"/>
<rect x="91" y="671" width="4" height="1" fill="#222"/>
<rect x="91" y="667" width="4" height="1" fill="#222"/>
<rect x="91" y="664" width="4" height="1" fill="#222"/>
<rect x="91" y="662" width="4" height="1" fill="#222"/>
<rect x="87" y="659" width="8" height="1" fill="#222"/>
<text x="74.3652" y="667" text-anchor="end" font-size="12">10</text>
<text x="74.8652" y="661" text-anchor="start" font-size="12">2</text>
<rect x="91" y="643" width="4" height="1" fill="#222"/>
<rect x="91" y="634" width="4" height="1" fill="#222"/>
<rect x="91" y="628" width="4" height="1" fill="#222"/>
<rect x="91" y="623" width="4" height="1" fill="#222"/>
<rect x="91" y="618" width="4" height="1" fill="#222"/>
<rect x="91" y="615" width="4" height="1" fill="#222"/>
<rect x="91" y="612" width="4" height="1" fill="#222"/>
<rect x="91" y="609" width="4" height="1" fill="#222"/>
<rect x="87" y="607" width="8" height="1" fill="#222"/>
<text x="74.3652" y="615" text-anchor="end" font-size="12">10</text>
<text x="74.8652" y="609" text-anchor="start" font-size="12">3</text>
<rect x="91" y="591" width="4" height="1" fill="#222"/>
<rect x="91" y="582" width="4" height="1" fill="#222"/>
<rect x="91" y="575" width="4" height="1" fill="#222"/>
<rect x="91" y="570" width="4" height="1" fill="#222"/>
<rect x="91" y="566" width="4" height="1" fill="#222"/>
<rect x="91" y="562" width="4" height="1" fill="#222"/>
<rect x="91" y="559" width="4" height="1" fill="#222"/>
<rect x="91" y="557" width="4" height="1" fill="#222"/>
<rect x="87" y="554" width="8" height="1" fill="#222"/>
<text x="74.3652" y="562" text-anchor="end" font-size="12">10</text>
<text x="74.8652" y="556" text-anchor="start" font-size="12">4</text>
<rect x="91" y="538" width="4" height="1" fill="#222"/>
<rect x="91" y="529" width="4" height="1" fill="#222"/>
<rect x="91" y="523" width="4" height="1" fill="#222"/>
<rect x="91" y="518" width="4" height="1" fill="#222"/>
<rect x="91" y="513" width="4" height="1" fill="#222"/>
<text x="8.5" y="537" text-anchor="start" font-size="12" textLength="65.8" lengthAdjust="spacingAndGlyphs">LEMMS Ions</text>
<text transform="translate(49.8,602) rotate(-90)" text-anchor="middle" font-size="12" textLength="74.2" lengthAdjust="spacingAndGlyphs">Energy (keV)</text>
<rect x="1092" y="515" width="12" height="176" fill="url(#cb)"/>
<rect x="1104" y="515" width="1" height="176" fill="#222"/>
<rect x="1104" y="515" width="9" height="1" fill="#222"/>
<text x="1117" y="523" text-anchor="start" font-size="12">10</text>
<text x="1132.77" y="517" text-anchor="start" font-size="12">4</text>
<rect x="1104" y="554" width="9" height="1" fill="#222"/>
<text x="1117" y="562" text-anchor="start" font-size="12">10</text>
<text x="1132.77" y="556" text-anchor="start" font-size="12">2</text>
<rect x="1104" y="593" width="9" height="1" fill="#222"/>
<text x="1117" y="601" text-anchor="start" font-size="12">10</text>
<text x="1132.77" y="595" text-anchor="start" font-size="12">0</text>
<rect x="1104" y="632" width="9" height="1" fill="#222"/>
<text x="1117" y="640" text-anchor="start" font-size="12">10</text>
<text x="1132.77" y="634" text-anchor="start" font-size="12"><tspan textLength="7" lengthAdjust="spacingAndGlyphs">-</tspan>2</text>
<rect x="1104" y="671" width="9" height="1" fill="#222"/>
<text x="1117" y="679" text-anchor="start" font-size="12">10</text>
<text x="1132.77" y="673" text-anchor="start" font-size="12"><tspan textLength="7" lengthAdjust="spacingAndGlyphs">-</tspan>4</text>
<rect x="1104" y="534" width="5" height="1" fill="#222"/>
<rect x="1104" y="574" width="5" height="1" fill="#222"/>
<rect x="1104" y="613" width="5" height="1" fill="#222"/>
<rect x="1104" y="652" width="5" height="1" fill="#222"/>
<rect x="1104" y="690" width="5" height="1" fill="#222"/>
<text transform="translate(1155.5,601) rotate(90)" text-anchor="middle" font-size="12" textLength="169.3" lengthAdjust="spacingAndGlyphs">intensity 1/(s cm^2 ster keV)</text>
<rect x="95" y="695" width="986" height="16" fill="#000"/>
<rect x="97" y="696" width="983" height="14" fill="#ff0000"/>
<rect x="596" y="696" width="389" height="14" fill="#00ff00"/>
<rect x="595" y="696" width="1" height="14" fill="#000"/>
<rect x="985" y="696" width="1" height="14" fill="#300"/>
<text x="79.5" y="707" text-anchor="end" font-size="12" textLength="51.0" lengthAdjust="spacingAndGlyphs">Sunlight?</text>
<rect x="136" y="711" width="1" height="4" fill="#222"/>
<rect x="177" y="711" width="1" height="4" fill="#222"/>
<rect x="218" y="711" width="1" height="7" fill="#222"/>
<rect x="259" y="711" width="1" height="4" fill="#222"/>
<rect x="300" y="711" width="1" height="4" fill="#222"/>
<rect x="341" y="711" width="1" height="7" fill="#222"/>
<rect x="382" y="711" width="1" height="4" fill="#222"/>
<rect x="423" y="711" width="1" height="4" fill="#222"/>
<rect x="464" y="711" width="1" height="7" fill="#222"/>
<rect x="505" y="711" width="1" height="4" fill="#222"/>
<rect x="546" y="711" width="1" height="4" fill="#222"/>
<rect x="587" y="711" width="1" height="7" fill="#222"/>
<rect x="628" y="711" width="1" height="4" fill="#222"/>
<rect x="669" y="711" width="1" height="4" fill="#222"/>
<rect x="710" y="711" width="1" height="7" fill="#222"/>
<rect x="751" y="711" width="1" height="4" fill="#222"/>
<rect x="792" y="711" width="1" height="4" fill="#222"/>
<rect x="833" y="711" width="1" height="7" fill="#222"/>
<rect x="874" y="711" width="1" height="4" fill="#222"/>
<rect x="915" y="711" width="1" height="4" fill="#222"/>
<rect x="956" y="711" width="1" height="7" fill="#222"/>
<rect x="997" y="711" width="1" height="4" fill="#222"/>
<rect x="1038" y="711" width="1" height="4" fill="#222"/>
<rect x="1080" y="711" width="1" height="7" fill="#222"/>
<text x="236.064" y="734" text-anchor="end" font-size="12" textLength="36.0" lengthAdjust="spacingAndGlyphs">03:00</text>
<text x="236.064" y="749" text-anchor="end" font-size="12" textLength="27.8" lengthAdjust="spacingAndGlyphs">0.03</text>
<text x="236.064" y="764" text-anchor="end" font-size="12" textLength="35.7" lengthAdjust="spacingAndGlyphs">48.47</text>
<text x="236.064" y="779" text-anchor="end" font-size="12" textLength="35.7" lengthAdjust="spacingAndGlyphs">49.22</text>
<text x="359.064" y="734" text-anchor="end" font-size="12" textLength="36.0" lengthAdjust="spacingAndGlyphs">06:00</text>
<text x="359.064" y="749" text-anchor="end" font-size="12" textLength="27.8" lengthAdjust="spacingAndGlyphs">0.05</text>
<text x="359.064" y="764" text-anchor="end" font-size="12" textLength="35.7" lengthAdjust="spacingAndGlyphs">48.39</text>
<text x="359.064" y="779" text-anchor="end" font-size="12" textLength="35.7" lengthAdjust="spacingAndGlyphs">49.13</text>
<text x="482.064" y="734" text-anchor="end" font-size="12" textLength="36.0" lengthAdjust="spacingAndGlyphs">09:00</text>
<text x="482.064" y="749" text-anchor="end" font-size="12" textLength="27.8" lengthAdjust="spacingAndGlyphs">0.07</text>
<text x="482.064" y="764" text-anchor="end" font-size="12" textLength="35.7" lengthAdjust="spacingAndGlyphs">48.31</text>
<text x="482.064" y="779" text-anchor="end" font-size="12" textLength="35.7" lengthAdjust="spacingAndGlyphs">49.03</text>
<text x="605.064" y="734" text-anchor="end" font-size="12" textLength="36.0" lengthAdjust="spacingAndGlyphs">12:00</text>
<text x="605.064" y="749" text-anchor="end" font-size="12" textLength="27.8" lengthAdjust="spacingAndGlyphs">0.09</text>
<text x="605.064" y="764" text-anchor="end" font-size="12" textLength="35.7" lengthAdjust="spacingAndGlyphs">48.21</text>
<text x="605.064" y="779" text-anchor="end" font-size="12" textLength="35.7" lengthAdjust="spacingAndGlyphs">48.93</text>
<text x="728.064" y="734" text-anchor="end" font-size="12" textLength="36.0" lengthAdjust="spacingAndGlyphs">15:00</text>
<text x="728.064" y="749" text-anchor="end" font-size="12" textLength="27.8" lengthAdjust="spacingAndGlyphs">0.11</text>
<text x="728.064" y="764" text-anchor="end" font-size="12" textLength="35.7" lengthAdjust="spacingAndGlyphs">48.11</text>
<text x="728.064" y="779" text-anchor="end" font-size="12" textLength="35.7" lengthAdjust="spacingAndGlyphs">48.81</text>
<text x="851.064" y="734" text-anchor="end" font-size="12" textLength="36.0" lengthAdjust="spacingAndGlyphs">18:00</text>
<text x="851.064" y="749" text-anchor="end" font-size="12" textLength="27.8" lengthAdjust="spacingAndGlyphs">0.13</text>
<text x="851.064" y="764" text-anchor="end" font-size="12" textLength="35.7" lengthAdjust="spacingAndGlyphs">48.00</text>
<text x="851.064" y="779" text-anchor="end" font-size="12" textLength="35.7" lengthAdjust="spacingAndGlyphs">48.69</text>
<text x="974.064" y="734" text-anchor="end" font-size="12" textLength="36.0" lengthAdjust="spacingAndGlyphs">21:00</text>
<text x="974.064" y="749" text-anchor="end" font-size="12" textLength="27.8" lengthAdjust="spacingAndGlyphs">0.15</text>
<text x="974.064" y="764" text-anchor="end" font-size="12" textLength="35.7" lengthAdjust="spacingAndGlyphs">47.89</text>
<text x="974.064" y="779" text-anchor="end" font-size="12" textLength="35.7" lengthAdjust="spacingAndGlyphs">48.56</text>
<text x="1098.06" y="734" text-anchor="end" font-size="12" textLength="36.0" lengthAdjust="spacingAndGlyphs">00:00</text>
<text x="1098.06" y="749" text-anchor="end" font-size="12" textLength="27.8" lengthAdjust="spacingAndGlyphs">0.17</text>
<text x="1098.06" y="764" text-anchor="end" font-size="12" textLength="35.7" lengthAdjust="spacingAndGlyphs">47.76</text>
<text x="1098.06" y="779" text-anchor="end" font-size="12" textLength="35.7" lengthAdjust="spacingAndGlyphs">48.43</text>
<text x="60" y="749" text-anchor="end" font-size="12" textLength="44.3" lengthAdjust="spacingAndGlyphs">LT (hrs)</text>
<text x="60" y="764" text-anchor="end" font-size="12" textLength="14.0" lengthAdjust="spacingAndGlyphs">Rs</text>
<text x="60.5" y="779" text-anchor="end" font-size="12" textLength="47.5" lengthAdjust="spacingAndGlyphs">Dipole L</text>
<rect x="215.5" y="802.5" width="151" height="148" fill="#fff" stroke="#222" stroke-width="1"/>
<path d="M297.5 802.0L296.0 803.3L293.9 805.0L291.4 807.0L288.8 809.2L286.1 811.5L283.8 813.8L281.6 815.9L279.4 818.2L277.2 820.6L275.1 822.9L273.1 825.3L271.2 827.5L269.5 829.6L268.0 831.7L266.5 833.7L265.1 835.7L263.8 837.8L262.5 840.0L261.3 842.4L260.1 844.9L259.0 847.5L258.0 850.1L257.0 852.6L256.2 855.0L255.6 857.3L255.1 859.6L254.6 861.9L254.3 864.1L254.0 866.1L253.8 868.0L253.6 869.7L253.4 871.2L253.4 872.5L253.4 873.8L253.4 875.1L253.4 876.5L253.4 877.9L253.4 879.2L253.4 880.5L253.4 881.8L253.6 883.3L253.8 885.0L254.0 886.9L254.3 888.9L254.6 891.1L255.1 893.4L255.6 895.7L256.2 898.0L257.0 900.4L258.0 902.9L259.0 905.5L260.1 908.1L261.3 910.6L262.5 913.0L263.8 915.2L265.1 917.3L266.5 919.3L268.0 921.3L269.5 923.4L271.2 925.5L273.1 927.7L275.1 930.1L277.2 932.4L279.4 934.8L281.6 937.1L283.8 939.2L286.1 941.5L288.8 943.8L291.4 946.0L293.9 948.0L296.0 949.7L297.5 951.0" fill="none" stroke="#0000ff" stroke-width="1" stroke-dasharray="2.2 1.3"/>
<path d="M353.8 802.0L350.6 803.3L346.2 805.1L340.9 807.2L335.4 809.4L329.9 811.7L325.0 813.8L320.5 815.7L316.1 817.5L311.8 819.4L307.6 821.3L303.7 823.1L300.0 825.0L296.6 826.8L293.4 828.7L290.5 830.5L287.7 832.3L285.0 834.2L282.5 836.2L280.0 838.4L277.7 840.7L275.5 843.0L273.5 845.4L271.6 847.8L270.0 850.0L268.6 852.1L267.5 854.2L266.6 856.2L265.8 858.3L265.1 860.3L264.5 862.5L264.0 864.7L263.6 867.1L263.3 869.4L263.1 871.8L263.0 874.1L263.0 876.5L263.0 878.9L263.1 881.2L263.3 883.6L263.6 885.9L264.0 888.3L264.5 890.5L265.1 892.7L265.8 894.7L266.6 896.8L267.5 898.8L268.6 900.9L270.0 903.0L271.6 905.2L273.5 907.6L275.5 910.0L277.7 912.3L280.0 914.6L282.5 916.8L285.0 918.8L287.7 920.7L290.5 922.5L293.4 924.3L296.6 926.2L300.0 928.0L303.7 929.9L307.6 931.7L311.8 933.6L316.1 935.5L320.5 937.3L325.0 939.2L329.9 941.3L335.4 943.6L340.9 945.8L346.2 947.9L350.6 949.7L353.8 951.0" fill="none" stroke="#8b4513" stroke-width="1" stroke-dasharray="2.2 1.3"/>
<ellipse cx="291.3" cy="877.0" rx="20.9" ry="21.3" fill="none" stroke="#000" stroke-width="1.2"/>
<path d="M289.8 876.5l1.5 -1.5l1.5 1.5l-1.5 1.5z" fill="none" stroke="#000" stroke-width="0.7"/>
<path d="M332 868.5Q341 872 343.8 877.5Q344 883 340 887" fill="none" stroke="#000" stroke-width="1.2"/>
<circle cx="273.3" cy="886.3" r="2.5" fill="#ff0000"/>
<circle cx="343" cy="878" r="2.5" fill="#0000cc"/>
<path d="M338.8 874L346.8 882M338.8 882L346.8 874" stroke="#ff0000" stroke-width="1.1" fill="none"/>
<rect x="207" y="813" width="8" height="1" fill="#222"/>
<text x="201.5" y="818" text-anchor="end" font-size="12"><tspan textLength="7" lengthAdjust="spacingAndGlyphs">-</tspan>60.</text>
<rect x="207" y="834" width="8" height="1" fill="#222"/>
<text x="201.5" y="839" text-anchor="end" font-size="12"><tspan textLength="7" lengthAdjust="spacingAndGlyphs">-</tspan>40.</text>
<rect x="207" y="855" width="8" height="1" fill="#222"/>
<text x="201.5" y="860" text-anchor="end" font-size="12"><tspan textLength="7" lengthAdjust="spacingAndGlyphs">-</tspan>20.</text>
<rect x="207" y="876" width="8" height="1" fill="#222"/>
<text x="201.5" y="881" text-anchor="end" font-size="12">0.</text>
<rect x="207" y="897" width="8" height="1" fill="#222"/>
<text x="201.5" y="902" text-anchor="end" font-size="12">20.</text>
<rect x="207" y="918" width="8" height="1" fill="#222"/>
<text x="201.5" y="923" text-anchor="end" font-size="12">40.</text>
<rect x="207" y="939" width="8" height="1" fill="#222"/>
<text x="201.5" y="944" text-anchor="end" font-size="12">60.</text>
<rect x="211" y="803" width="4" height="1" fill="#222"/>
<rect x="211" y="824" width="4" height="1" fill="#222"/>
<rect x="211" y="845" width="4" height="1" fill="#222"/>
<rect x="211" y="866" width="4" height="1" fill="#222"/>
<rect x="211" y="887" width="4" height="1" fill="#222"/>
<rect x="211" y="908" width="4" height="1" fill="#222"/>
<rect x="211" y="929" width="4" height="1" fill="#222"/>
<rect x="211" y="950" width="4" height="1" fill="#222"/>
<rect x="366" y="951" width="1" height="4" fill="#222"/>
<rect x="355" y="951" width="1" height="4" fill="#222"/>
<rect x="344" y="951" width="1" height="8" fill="#222"/>
<rect x="334" y="951" width="1" height="4" fill="#222"/>
<rect x="323" y="951" width="1" height="4" fill="#222"/>
<rect x="312" y="951" width="1" height="4" fill="#222"/>
<rect x="302" y="951" width="1" height="4" fill="#222"/>
<rect x="291" y="951" width="1" height="8" fill="#222"/>
<rect x="280" y="951" width="1" height="4" fill="#222"/>
<rect x="269" y="951" width="1" height="4" fill="#222"/>
<rect x="259" y="951" width="1" height="4" fill="#222"/>
<rect x="248" y="951" width="1" height="4" fill="#222"/>
<rect x="237" y="951" width="1" height="8" fill="#222"/>
<rect x="226" y="951" width="1" height="4" fill="#222"/>
<rect x="216" y="951" width="1" height="4" fill="#222"/>
<text x="238.05" y="974" text-anchor="middle" font-size="12">50.</text>
<text x="291.8" y="974" text-anchor="middle" font-size="12">0.</text>
<text x="345.55" y="974" text-anchor="middle" font-size="12"><tspan textLength="7" lengthAdjust="spacingAndGlyphs">-</tspan>50.</text>
<text x="290.5" y="992" text-anchor="middle" font-size="12" textLength="37.8" lengthAdjust="spacingAndGlyphs">KSM-X</text>
<text transform="translate(167,877) rotate(-90)" text-anchor="middle" font-size="12" textLength="37.2" lengthAdjust="spacingAndGlyphs">KSM-Y</text>
<rect x="509.5" y="802.5" width="151" height="148" fill="#fff" stroke="#222" stroke-width="1"/>
<path d="M591.2 802.0L589.7 803.3L587.6 805.0L585.2 807.0L582.5 809.2L579.9 811.5L577.5 813.8L575.3 815.9L573.1 818.2L570.9 820.6L568.8 822.9L566.8 825.3L565.0 827.5L563.3 829.6L561.8 831.7L560.3 833.7L559.0 835.7L557.7 837.8L556.5 840.0L555.3 842.4L554.2 845.0L553.1 847.6L552.1 850.2L551.3 852.7L550.5 855.0L549.9 857.1L549.3 859.1L548.9 861.0L548.6 862.8L548.3 864.4L548.0 866.0L547.8 867.4L547.6 868.6L547.6 869.7L547.5 870.8L547.5 871.8L547.5 873.0L547.5 874.2L547.5 875.3L547.6 876.5L547.6 877.7L547.8 879.1L548.0 880.6L548.3 882.3L548.6 884.1L548.9 886.0L549.3 888.1L549.9 890.2L550.5 892.5L551.3 895.0L552.1 897.7L553.1 900.6L554.2 903.4L555.3 906.2L556.5 908.8L557.7 911.2L559.0 913.5L560.3 915.7L561.8 917.8L563.3 920.0L565.0 922.3L566.8 924.8L568.8 927.3L570.9 929.9L573.1 932.4L575.3 934.9L577.5 937.3L579.9 939.7L582.5 942.1L585.2 944.6L587.6 946.8L589.7 948.6L591.2 950.0" fill="none" stroke="#0000ff" stroke-width="1" stroke-dasharray="2.2 1.3"/>
<path d="M647.0 802.0L643.9 803.3L639.6 805.1L634.6 807.2L629.1 809.4L623.8 811.7L619.0 813.8L614.6 815.7L610.2 817.5L605.8 819.4L601.7 821.3L597.7 823.1L594.0 825.0L590.6 826.8L587.4 828.7L584.5 830.5L581.7 832.3L579.0 834.2L576.5 836.2L574.0 838.4L571.7 840.7L569.5 843.1L567.5 845.5L565.6 847.8L564.0 850.0L562.6 852.1L561.5 854.2L560.6 856.2L559.8 858.1L559.1 860.1L558.5 862.0L558.0 863.9L557.6 865.7L557.3 867.5L557.1 869.3L557.0 871.1L557.0 873.0L557.0 874.9L557.1 876.9L557.3 878.8L557.6 880.8L558.0 882.9L558.5 884.9L559.1 887.0L559.8 889.1L560.6 891.3L561.5 893.4L562.6 895.7L564.0 897.9L565.6 900.4L567.5 902.9L569.5 905.5L571.7 908.0L574.0 910.5L576.5 912.9L579.0 915.0L581.7 917.1L584.5 919.1L587.4 921.1L590.6 923.1L594.0 925.1L597.7 927.1L601.7 929.1L605.8 931.1L610.2 933.1L614.6 935.2L619.0 937.3L623.8 939.5L629.1 941.9L634.6 944.4L639.6 946.7L643.9 948.6L647.0 950.0" fill="none" stroke="#8b4513" stroke-width="1" stroke-dasharray="2.2 1.3"/>
<path d="M567.5 872L607 883M626.3 883.5L637.5 883" fill="none" stroke="#000" stroke-width="1.3"/>
<path d="M584 875.5l2.5 1.2l-1.5 2" fill="none" stroke="#000" stroke-width="0.7"/>
<circle cx="567.5" cy="872" r="2.5" fill="#ff0000"/>
<circle cx="637" cy="883" r="2.5" fill="#0000cc"/>
<path d="M632.8 879L640.8 887M632.8 887L640.8 879" stroke="#ff0000" stroke-width="1.1" fill="none"/>
<rect x="501" y="939" width="8" height="1" fill="#222"/>
<text x="495.5" y="944" text-anchor="end" font-size="12"><tspan textLength="7" lengthAdjust="spacingAndGlyphs">-</tspan>60.</text>
<rect x="501" y="918" width="8" height="1" fill="#222"/>
<text x="495.5" y="923" text-anchor="end" font-size="12"><tspan textLength="7" lengthAdjust="spacingAndGlyphs">-</tspan>40.</text>
<rect x="501" y="897" width="8" height="1" fill="#222"/>
<text x="495.5" y="902" text-anchor="end" font-size="12"><tspan textLength="7" lengthAdjust="spacingAndGlyphs">-</tspan>20.</text>
<rect x="501" y="876" width="8" height="1" fill="#222"/>
<text x="495.5" y="881" text-anchor="end" font-size="12">0.</text>
<rect x="501" y="855" width="8" height="1" fill="#222"/>
<text x="495.5" y="860" text-anchor="end" font-size="12">20.</text>
<rect x="501" y="834" width="8" height="1" fill="#222"/>
<text x="495.5" y="839" text-anchor="end" font-size="12">40.</text>
<rect x="501" y="813" width="8" height="1" fill="#222"/>
<text x="495.5" y="818" text-anchor="end" font-size="12">60.</text>
<rect x="505" y="803" width="4" height="1" fill="#222"/>
<rect x="505" y="824" width="4" height="1" fill="#222"/>
<rect x="505" y="845" width="4" height="1" fill="#222"/>
<rect x="505" y="866" width="4" height="1" fill="#222"/>
<rect x="505" y="887" width="4" height="1" fill="#222"/>
<rect x="505" y="908" width="4" height="1" fill="#222"/>
<rect x="505" y="929" width="4" height="1" fill="#222"/>
<rect x="505" y="950" width="4" height="1" fill="#222"/>
<rect x="660" y="951" width="1" height="4" fill="#222"/>
<rect x="649" y="951" width="1" height="4" fill="#222"/>
<rect x="638" y="951" width="1" height="8" fill="#222"/>
<rect x="628" y="951" width="1" height="4" fill="#222"/>
<rect x="617" y="951" width="1" height="4" fill="#222"/>
<rect x="606" y="951" width="1" height="4" fill="#222"/>
<rect x="596" y="951" width="1" height="4" fill="#222"/>
<rect x="585" y="951" width="1" height="8" fill="#222"/>
<rect x="574" y="951" width="1" height="4" fill="#222"/>
<rect x="563" y="951" width="1" height="4" fill="#222"/>
<rect x="553" y="951" width="1" height="4" fill="#222"/>
<rect x="542" y="951" width="1" height="4" fill="#222"/>
<rect x="531" y="951" width="1" height="8" fill="#222"/>
<rect x="520" y="951" width="1" height="4" fill="#222"/>
<rect x="510" y="951" width="1" height="4" fill="#222"/>
<text x="532.05" y="974" text-anchor="middle" font-size="12">50.</text>
<text x="585.8" y="974" text-anchor="middle" font-size="12">0.</text>
<text x="639.55" y="974" text-anchor="middle" font-size="12"><tspan textLength="7" lengthAdjust="spacingAndGlyphs">-</tspan>50.</text>
<text x="584.5" y="992" text-anchor="middle" font-size="12" textLength="37.8" lengthAdjust="spacingAndGlyphs">KSM-X</text>
<text transform="translate(461,877) rotate(-90)" text-anchor="middle" font-size="12" textLength="39.5" lengthAdjust="spacingAndGlyphs">KSM-Z</text>
<rect x="803.5" y="802.5" width="151" height="148" fill="#fff" stroke="#222" stroke-width="1"/>
<ellipse cx="879.6" cy="877.4" rx="38.3" ry="10.5" fill="none" stroke="#000" stroke-width="1.3" transform="rotate(-1 879.6 877.4)"/>
<ellipse cx="879.3" cy="877" rx="1.6" ry="1.3" fill="none" stroke="#000" stroke-width="0.7"/>
<circle cx="897" cy="868.3" r="2.4" fill="#ff0000"/>
<path d="M877.5 888l5-4.5l4.5 4.5z" fill="#0000ff"/>
<path d="M878.5 882.3L886.5 890.3M878.5 890.3L886.5 882.3" stroke="#ff0000" stroke-width="1.1" fill="none"/>
<path d="M866 888l4 -1.5" stroke="#000" stroke-width="1.6"/>
<rect x="795" y="950" width="8" height="1" fill="#222"/>
<text x="789.5" y="955" text-anchor="end" font-size="12"><tspan textLength="7" lengthAdjust="spacingAndGlyphs">-</tspan>40.</text>
<rect x="795" y="931" width="8" height="1" fill="#222"/>
<text x="789.5" y="936" text-anchor="end" font-size="12"><tspan textLength="7" lengthAdjust="spacingAndGlyphs">-</tspan>30.</text>
<rect x="795" y="913" width="8" height="1" fill="#222"/>
<text x="789.5" y="918" text-anchor="end" font-size="12"><tspan textLength="7" lengthAdjust="spacingAndGlyphs">-</tspan>20.</text>
<rect x="795" y="894" width="8" height="1" fill="#222"/>
<text x="789.5" y="899" text-anchor="end" font-size="12"><tspan textLength="7" lengthAdjust="spacingAndGlyphs">-</tspan>10.</text>
<rect x="795" y="876" width="8" height="1" fill="#222"/>
<text x="789.5" y="881" text-anchor="end" font-size="12">0.</text>
<rect x="795" y="858" width="8" height="1" fill="#222"/>
<text x="789.5" y="863" text-anchor="end" font-size="12">10.</text>
<rect x="795" y="839" width="8" height="1" fill="#222"/>
<text x="789.5" y="844" text-anchor="end" font-size="12">20.</text>
<rect x="795" y="821" width="8" height="1" fill="#222"/>
<text x="789.5" y="826" text-anchor="end" font-size="12">30.</text>
<rect x="795" y="803" width="8" height="1" fill="#222"/>
<text x="789.5" y="808" text-anchor="end" font-size="12">40.</text>
<rect x="799" y="948" width="4" height="1" fill="#333"/>
<rect x="799" y="946" width="4" height="1" fill="#333"/>
<rect x="799" y="944" width="4" height="1" fill="#333"/>
<rect x="799" y="942" width="4" height="1" fill="#333"/>
<rect x="799" y="940" width="4" height="1" fill="#333"/>
<rect x="799" y="938" width="4" height="1" fill="#333"/>
<rect x="799" y="937" width="4" height="1" fill="#333"/>
<rect x="799" y="935" width="4" height="1" fill="#333"/>
<rect x="799" y="933" width="4" height="1" fill="#333"/>
<rect x="799" y="929" width="4" height="1" fill="#333"/>
<rect x="799" y="927" width="4" height="1" fill="#333"/>
<rect x="799" y="926" width="4" height="1" fill="#333"/>
<rect x="799" y="924" width="4" height="1" fill="#333"/>
<rect x="799" y="922" width="4" height="1" fill="#333"/>
<rect x="799" y="920" width="4" height="1" fill="#333"/>
<rect x="799" y="918" width="4" height="1" fill="#333"/>
<rect x="799" y="916" width="4" height="1" fill="#333"/>
<rect x="799" y="915" width="4" height="1" fill="#333"/>
<rect x="799" y="911" width="4" height="1" fill="#333"/>
<rect x="799" y="909" width="4" height="1" fill="#333"/>
<rect x="799" y="907" width="4" height="1" fill="#333"/>
<rect x="799" y="905" width="4" height="1" fill="#333"/>
<rect x="799" y="904" width="4" height="1" fill="#333"/>
<rect x="799" y="902" width="4" height="1" fill="#333"/>
<rect x="799" y="900" width="4" height="1" fill="#333"/>
<rect x="799" y="898" width="4" height="1" fill="#333"/>
<rect x="799" y="896" width="4" height="1" fill="#333"/>
<rect x="799" y="893" width="4" height="1" fill="#333"/>
<rect x="799" y="891" width="4" height="1" fill="#333"/>
<rect x="799" y="889" width="4" height="1" fill="#333"/>
<rect x="799" y="887" width="4" height="1" fill="#333"/>
<rect x="799" y="885" width="4" height="1" fill="#333"/>
<rect x="799" y="883" width="4" height="1" fill="#333"/>
<rect x="799" y="882" width="4" height="1" fill="#333"/>
<rect x="799" y="880" width="4" height="1" fill="#333"/>
<rect x="799" y="878" width="4" height="1" fill="#333"/>
<rect x="799" y="874" width="4" height="1" fill="#333"/>
<rect x="799" y="872" width="4" height="1" fill="#333"/>
<rect x="799" y="870" width="4" height="1" fill="#333"/>
<rect x="799" y="869" width="4" height="1" fill="#333"/>
<rect x="799" y="867" width="4" height="1" fill="#333"/>
<rect x="799" y="865" width="4" height="1" fill="#333"/>
<rect x="799" y="863" width="4" height="1" fill="#333"/>
<rect x="799" y="861" width="4" height="1" fill="#333"/>
<rect x="799" y="859" width="4" height="1" fill="#333"/>
<rect x="799" y="856" width="4" height="1" fill="#333"/>
<rect x="799" y="854" width="4" height="1" fill="#333"/>
<rect x="799" y="852" width="4" height="1" fill="#333"/>
<rect x="799" y="850" width="4" height="1" fill="#333"/>
<rect x="799" y="848" width="4" height="1" fill="#333"/>
<rect x="799" y="847" width="4" height="1" fill="#333"/>
<rect x="799" y="845" width="4" height="1" fill="#333"/>
<rect x="799" y="843" width="4" height="1" fill="#333"/>
<rect x="799" y="841" width="4" height="1" fill="#333"/>
<rect x="799" y="837" width="4" height="1" fill="#333"/>
<rect x="799" y="836" width="4" height="1" fill="#333"/>
<rect x="799" y="834" width="4" height="1" fill="#333"/>
<rect x="799" y="832" width="4" height="1" fill="#333"/>
<rect x="799" y="830" width="4" height="1" fill="#333"/>
<rect x="799" y="828" width="4" height="1" fill="#333"/>
<rect x="799" y="826" width="4" height="1" fill="#333"/>
<rect x="799" y="825" width="4" height="1" fill="#333"/>
<rect x="799" y="823" width="4" height="1" fill="#333"/>
<rect x="799" y="819" width="4" height="1" fill="#333"/>
<rect x="799" y="817" width="4" height="1" fill="#333"/>
<rect x="799" y="815" width="4" height="1" fill="#333"/>
<rect x="799" y="814" width="4" height="1" fill="#333"/>
<rect x="799" y="812" width="4" height="1" fill="#333"/>
<rect x="799" y="810" width="4" height="1" fill="#333"/>
<rect x="799" y="808" width="4" height="1" fill="#333"/>
<rect x="799" y="806" width="4" height="1" fill="#333"/>
<rect x="799" y="804" width="4" height="1" fill="#333"/>
<rect x="804" y="951" width="1" height="8" fill="#222"/>
<rect x="823" y="951" width="1" height="4" fill="#222"/>
<rect x="842" y="951" width="1" height="8" fill="#222"/>
<rect x="860" y="951" width="1" height="4" fill="#222"/>
<rect x="879" y="951" width="1" height="8" fill="#222"/>
<rect x="898" y="951" width="1" height="4" fill="#222"/>
<rect x="916" y="951" width="1" height="8" fill="#222"/>
<rect x="935" y="951" width="1" height="4" fill="#222"/>
<rect x="954" y="951" width="1" height="8" fill="#222"/>
<text x="804.5" y="974" text-anchor="middle" font-size="12"><tspan textLength="7" lengthAdjust="spacingAndGlyphs">-</tspan>40.</text>
<text x="842" y="974" text-anchor="middle" font-size="12"><tspan textLength="7" lengthAdjust="spacingAndGlyphs">-</tspan>20.</text>
<text x="879.5" y="974" text-anchor="middle" font-size="12">0.</text>
<text x="917" y="974" text-anchor="middle" font-size="12">20.</text>
<text x="954.5" y="974" text-anchor="middle" font-size="12">40.</text>
<text x="879" y="992" text-anchor="middle" font-size="12" textLength="36.1" lengthAdjust="spacingAndGlyphs">KSM-Y</text>
<text transform="translate(756,877) rotate(-90)" text-anchor="middle" font-size="12" textLength="39.5" lengthAdjust="spacingAndGlyphs">KSM-Z</text>
</svg>
</body></html>
